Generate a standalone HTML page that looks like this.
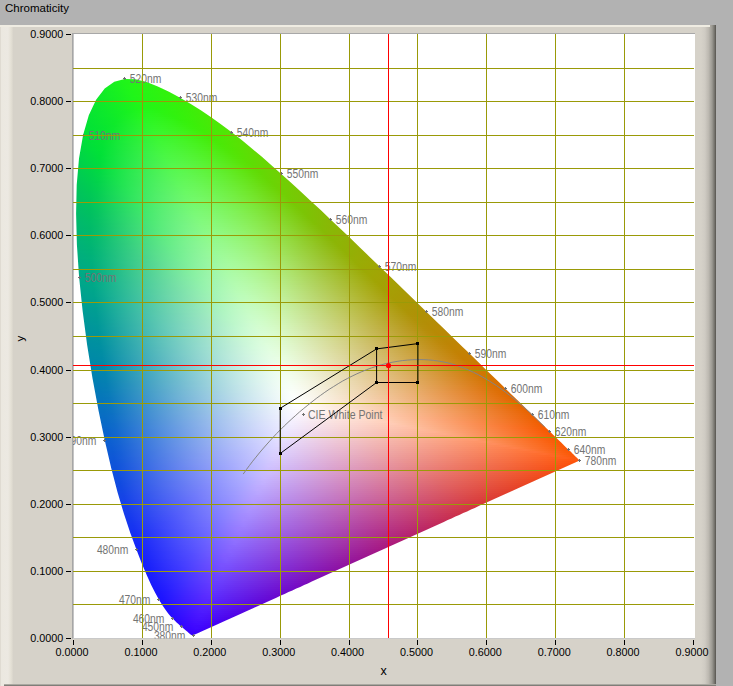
<!DOCTYPE html><html><head><meta charset="utf-8"><title>Chromaticity</title><style>
html,body{margin:0;padding:0}
body{width:733px;height:686px;overflow:hidden;position:relative;background:#b2b2b2;font-family:"Liberation Sans",Arial,sans-serif;}
#title{position:absolute;left:5px;top:1px;font-size:11.5px;line-height:14px;color:#000;white-space:nowrap}
#panel{position:absolute;left:0;top:25px;width:716px;height:661px;background:#d6d2c9}
#pl{position:absolute;left:0;top:0;width:14px;height:661px;background:linear-gradient(90deg,#d9d5cb 0,#ebe8e0 1.5px,#ece9e2 8px,#e4e0d5 11px,#d6d2c9 13.5px)}
#pt{position:absolute;left:0;top:0;width:710px;height:2px;background:#efece2}
#pr{position:absolute;left:701px;top:0;width:15px;height:661px;background:linear-gradient(90deg,#d6d2c9 0,#cfcbc3 4px,#bdb9b1 7.5px,#9c9a93 11px,#74726c 13.5px,#55534e 15px)}
#pb{position:absolute;left:4px;top:659px;width:712px;height:2px;background:linear-gradient(180deg,#aaa8a1 0,#aaa8a1 50%,#807e78 50%,#807e78 100%)}
#plot{position:absolute;left:72px;top:33px;width:623px;height:606px;background:#fff;box-sizing:border-box;border-left:1px solid #a6a6a6;border-top:1px solid #a8a8a8;border-bottom:1px solid #c9c9c9;box-shadow:inset 1px 0 0 #c4c4c4}
#fill{position:absolute;left:0;top:0;width:733px;height:686px;}
#fill i{position:absolute;display:block;height:2px}
#ov{position:absolute;left:0;top:0}
.tk{font-size:10.8px;fill:#000}
.wl{font-size:12.5px;fill:#747474}

</style></head><body>
<div id="title">Chromaticity</div>
<div id="panel"><div id="pl"></div><div id="pr"></div><div id="pt"></div><div id="pb"></div></div>
<div id="plot"></div>
<div id="fill" style="clip-path:polygon(193.4px 635.1px,193.4px 635.1px,193.4px 635.1px,193.3px 635.2px,193.3px 635.2px,193.2px 635.2px,193.2px 635.2px,193.1px 635.2px,193.1px 635.2px,193px 635.3px,192.9px 635.3px,192.8px 635.3px,192.7px 635.3px,192.6px 635.3px,192.5px 635.3px,192.4px 635.3px,192.3px 635.3px,192.1px 635.3px,192px 635.3px,191.8px 635.2px,191.6px 635.1px,191.3px 634.9px,191px 634.7px,190.6px 634.5px,190.3px 634.2px,189.9px 633.9px,189.4px 633.5px,188.8px 633px,188.2px 632.4px,187.5px 631.8px,186.8px 631.2px,185.9px 630.5px,185px 629.7px,183.9px 628.8px,182.7px 627.7px,181.4px 626.6px,179.9px 625.4px,178.4px 624px,176.6px 622.4px,174.7px 620.6px,172.7px 618.6px,170.5px 616.2px,168.2px 613.4px,165.5px 609.8px,162.4px 605.3px,159px 599.7px,155.3px 593px,151.2px 584.9px,146.7px 575.1px,141.8px 563.4px,136.4px 549.4px,130.4px 533.2px,124.1px 514.3px,117.6px 492.6px,111.2px 468px,104.8px 440.5px,98.5px 410.4px,92.5px 378.2px,87.1px 344.7px,82.6px 310.8px,79.1px 277.2px,76.9px 244.7px,76.1px 213.8px,76.7px 184.9px,79px 158.4px,83.1px 135px,88.8px 115.3px,96.1px 99.7px,104.7px 88.6px,114.3px 81.8px,124.7px 78.9px,135.5px 79.3px,146.6px 82px,157.8px 86.4px,169px 91.7px,180.1px 97.7px,190.8px 104px,201.2px 110.6px,211.5px 117.5px,221.6px 124.7px,231.7px 132.3px,241.7px 140.1px,251.6px 148.3px,261.6px 156.6px,271.4px 165.2px,281.3px 173.9px,291.1px 182.8px,300.9px 191.8px,310.8px 200.9px,320.7px 210.1px,330.5px 219.4px,340.4px 228.7px,350.2px 238.1px,359.9px 247.5px,369.7px 256.9px,379.4px 266.2px,389.1px 275.6px,398.6px 284.8px,408.1px 294px,417.4px 303px,426.6px 311.9px,435.6px 320.7px,444.5px 329.3px,453.1px 337.7px,461.6px 345.9px,469.8px 353.8px,477.7px 361.5px,485.2px 368.9px,492.3px 375.8px,499.1px 382.3px,505.4px 388.5px,511.5px 394.4px,517.3px 400px,522.7px 405.2px,527.6px 410px,532.2px 414.4px,536.4px 418.4px,540.2px 422.2px,543.7px 425.6px,546.9px 428.8px,549.9px 431.6px,552.6px 434.2px,555px 436.5px,557.2px 438.7px,559.3px 440.7px,561.2px 442.5px,562.9px 444.3px,564.6px 445.9px,566.1px 447.4px,567.5px 448.7px,568.8px 450px,570px 451.1px,571.1px 452.1px,572px 453.1px,572.9px 453.9px,573.6px 454.6px,574.3px 455.3px,574.9px 455.9px,575.5px 456.4px,576px 456.9px,576.4px 457.3px,576.7px 457.6px,577px 457.9px,577.3px 458.2px,577.5px 458.4px,577.8px 458.6px,578px 458.8px,578.2px 459px,578.4px 459.2px,578.5px 459.4px,578.7px 459.6px,578.9px 459.8px,579.1px 459.9px,579.2px 460.1px,579.3px 460.2px,579.4px 460.3px,579.5px 460.3px,579.5px 460.4px,579.6px 460.4px,579.6px 460.4px,579.6px 460.5px,575.8px 462.2px,571.9px 464px,568px 465.7px,564.1px 467.5px,560.2px 469.2px,556.3px 471px,552.5px 472.7px,548.6px 474.5px,544.7px 476.3px,540.8px 478px,536.9px 479.8px,533.1px 481.5px,529.2px 483.3px,525.3px 485px,521.4px 486.8px,517.5px 488.5px,513.7px 490.3px,509.8px 492.1px,505.9px 493.8px,502px 495.6px,498.1px 497.3px,494.2px 499.1px,490.4px 500.8px,486.5px 502.6px,482.6px 504.3px,478.7px 506.1px,474.8px 507.9px,471px 509.6px,467.1px 511.4px,463.2px 513.1px,459.3px 514.9px,455.4px 516.6px,451.5px 518.4px,447.7px 520.1px,443.8px 521.9px,439.9px 523.7px,436px 525.4px,432.1px 527.2px,428.3px 528.9px,424.4px 530.7px,420.5px 532.4px,416.6px 534.2px,412.7px 536px,408.9px 537.7px,405px 539.5px,401.1px 541.2px,397.2px 543px,393.3px 544.7px,389.4px 546.5px,385.6px 548.2px,381.7px 550px,377.8px 551.8px,373.9px 553.5px,370px 555.3px,366.2px 557px,362.3px 558.8px,358.4px 560.5px,354.5px 562.3px,350.6px 564px,346.8px 565.8px,342.9px 567.6px,339px 569.3px,335.1px 571.1px,331.2px 572.8px,327.3px 574.6px,323.5px 576.3px,319.6px 578.1px,315.7px 579.8px,311.8px 581.6px,307.9px 583.4px,304.1px 585.1px,300.2px 586.9px,296.3px 588.6px,292.4px 590.4px,288.5px 592.1px,284.6px 593.9px,280.8px 595.6px,276.9px 597.4px,273px 599.2px,269.1px 600.9px,265.2px 602.7px,261.4px 604.4px,257.5px 606.2px,253.6px 607.9px,249.7px 609.7px,245.8px 611.4px,242px 613.2px,238.1px 615px,234.2px 616.7px,230.3px 618.5px,226.4px 620.2px,222.5px 622px,218.7px 623.7px,214.8px 625.5px,210.9px 627.2px,207px 629px,203.1px 630.8px,199.3px 632.5px,195.4px 634.3px)">
<i style="top:77px;left:119px;width:20px;background:linear-gradient(90deg,#1df41b,#22f517,#27f414)"></i>
<i style="top:79px;left:113px;width:34px;background:linear-gradient(90deg,#1af21e,#1ef51a,#22f517,#26f414,#2af312)"></i>
<i style="top:81px;left:109px;width:44px;background:linear-gradient(90deg,#17f021,#1af21e,#1ef51a,#22f517,#25f515,#29f413,#2df310)"></i>
<i style="top:83px;left:106px;width:52px;background:linear-gradient(90deg,#15ee23,#19f11f,#1ef41a,#22f517,#26f414,#2bf312,#2ff20f)"></i>
<i style="top:85px;left:104px;width:59px;background:linear-gradient(90deg,#14ed24,#18f020,#1cf31c,#20f618,#24f516,#28f413,#2df311,#31f20e)"></i>
<i style="top:87px;left:101px;width:66px;background:linear-gradient(90deg,#12ec26,#15ef23,#19f11f,#1ef51a,#22f617,#26f515,#2af312,#2ef210,#33f10d)"></i>
<i style="top:89px;left:100px;width:71px;background:linear-gradient(90deg,#11ec27,#14ee24,#18f120,#1cf31c,#20f618,#24f516,#28f413,#2cf311,#30f20e,#35f10c)"></i>
<i style="top:91px;left:98px;width:77px;background:linear-gradient(90deg,#0feb29,#13ed25,#16ef22,#1af21e,#1ef51a,#22f517,#26f515,#2af412,#2ef310,#32f10d,#36f00b)"></i>
<i style="top:93px;left:96px;width:83px;background:linear-gradient(90deg,#0eea2a,#12ec26,#15ef23,#19f11f,#1ef51a,#22f517,#26f414,#2bf312,#2ff20f,#34f10d,#38f00a)"></i>
<i style="top:95px;left:95px;width:87px;background:linear-gradient(90deg,#0de92b,#10eb28,#14ee24,#18f020,#1cf31c,#20f618,#24f516,#28f413,#2cf311,#31f20e,#35f10c,#3aef0a)"></i>
<i style="top:97px;left:94px;width:92px;background:linear-gradient(90deg,#0ce82c,#0feb29,#13ed25,#16ef22,#1af21e,#1ef51a,#22f517,#26f414,#2af312,#2ef210,#33f10d,#37f00b,#3cee09)"></i>
<i style="top:99px;left:93px;width:96px;background:linear-gradient(90deg,#0ce82c,#0fea29,#12ec26,#16ef22,#1af21e,#1ef51a,#22f517,#26f414,#2bf312,#2ff20f,#34f10d,#38f00a,#3dee09)"></i>
<i style="top:101px;left:92px;width:101px;background:linear-gradient(90deg,#0be72d,#0ee92a,#11ec27,#14ee24,#18f120,#1cf41c,#21f618,#25f515,#29f413,#2df310,#31f20e,#36f10b,#3aef0a,#40ed08)"></i>
<i style="top:103px;left:91px;width:105px;background:linear-gradient(90deg,#0ae72e,#0de92b,#10eb28,#14ee24,#18f020,#1cf31c,#21f618,#25f515,#29f413,#2df310,#32f20e,#36f00b,#3cee09,#41ec08)"></i>
<i style="top:105px;left:90px;width:109px;background:linear-gradient(90deg,#09e62f,#0ce82c,#0fea29,#12ed26,#16ef22,#1af21e,#1ff519,#23f516,#27f414,#2bf312,#2ff20f,#34f10d,#38f00a,#3dee09,#43eb08)"></i>
<i style="top:107px;left:89px;width:113px;background:linear-gradient(90deg,#08e630,#0be82d,#0eea2a,#12ec26,#15ef23,#1af21e,#1ef51a,#23f516,#27f414,#2bf311,#30f20f,#34f10c,#39ef0a,#3fed09,#44eb07)"></i>
<i style="top:109px;left:88px;width:117px;background:linear-gradient(90deg,#07e531,#0ae72e,#0de92b,#10eb28,#14ee24,#18f020,#1df31d,#22f619,#26f517,#29f413,#2df310,#32f20e,#36f00b,#3bef09,#41ec08,#46ea07)"></i>
<i style="top:111px;left:87px;width:121px;background:linear-gradient(90deg,#07e431,#09e62f,#0ce82c,#10eb28,#13ed25,#17f021,#1ef31f,#24f61b,#28f519,#2af414,#2ef310,#32f10d,#37f00b,#3cee09,#42ec08,#48e907)"></i>
<i style="top:113px;left:86px;width:125px;background:linear-gradient(90deg,#06e432,#08e630,#0be82d,#0eea2a,#12ec26,#16ef23,#1df222,#23f51f,#28f61c,#2bf519,#2df313,#30f20f,#34f10c,#39f00a,#3eed09,#44eb07,#49e906)"></i>
<i style="top:115px;left:86px;width:128px;background:linear-gradient(90deg,#05e433,#08e530,#0be82d,#0eea2a,#12ec26,#18ef25,#1ff223,#25f520,#2af61e,#2df41a,#2ef314,#30f20f,#35f10c,#3aef0a,#40ed08,#45ea07,#4be806)"></i>
<i style="top:117px;left:85px;width:132px;background:linear-gradient(90deg,#05e333,#07e531,#0ae72e,#0de92b,#11ec27,#19ef26,#20f225,#27f522,#2bf620,#2ff51c,#30f316,#31f20f,#36f10b,#3bef09,#41ec08,#47ea07,#4ce706)"></i>
<i style="top:119px;left:84px;width:136px;background:linear-gradient(90deg,#04e334,#06e432,#09e62f,#0ce82c,#0feb29,#17ed29,#1ff128,#26f426,#2bf623,#2ff520,#31f41b,#33f315,#33f10d,#38f00a,#3dee09,#43eb08,#49e906,#4ee705)"></i>
<i style="top:121px;left:84px;width:138px;background:linear-gradient(90deg,#03e235,#06e432,#09e62f,#0ce82c,#10ea29,#19ed2a,#20f12a,#27f428,#2df624,#31f522,#33f41d,#34f317,#35f10f,#38f00a,#3eed09,#44eb08,#49e906,#4fe605)"></i>
<i style="top:123px;left:83px;width:142px;background:linear-gradient(90deg,#03e235,#05e333,#08e530,#0be72d,#0eea2a,#17ec2c,#1fef2c,#26f22b,#2cf628,#31f625,#34f521,#35f41c,#36f215,#37f10e,#3aef0a,#40ed08,#46ea07,#4be806,#51e505)"></i>
<i style="top:125px;left:83px;width:145px;background:linear-gradient(90deg,#02e136,#05e333,#07e531,#0ae72e,#0fe92c,#18ec2e,#21ef2e,#28f22d,#2ef62a,#33f627,#36f523,#37f41d,#38f216,#39f10e,#3bef09,#41ec08,#47ea07,#4de705,#53e504)"></i>
<i style="top:127px;left:82px;width:149px;background:linear-gradient(90deg,#01e137,#04e334,#06e432,#09e62f,#0ee92d,#17eb2f,#1fee30,#27f12f,#2df42d,#33f62a,#36f627,#38f422,#3af31d,#3af215,#3af00d,#3eee09,#43eb08,#49e906,#4fe605,#54e404)"></i>
<i style="top:129px;left:81px;width:152px;background:linear-gradient(90deg,#01e037,#03e235,#06e432,#08e630,#0ee82e,#17eb30,#20ee31,#28f131,#2ef42f,#34f72c,#38f629,#3af425,#3bf31e,#3cf217,#3cf00f,#3eed09,#44eb07,#4ae806,#50e605,#55e304)"></i>
<i style="top:131px;left:81px;width:155px;background:linear-gradient(90deg,#00e038,#03e235,#05e433,#08e630,#0fe830,#19eb32,#21ee33,#29f133,#30f431,#36f72e,#3af62b,#3cf426,#3df31f,#3ef218,#3ef00f,#40ed08,#46ea07,#4ce806,#51e505,#57e204)"></i>
<i style="top:133px;left:80px;width:158px;background:linear-gradient(90deg,#00df3a,#02e136,#04e334,#07e531,#0de731,#16ea33,#1fed35,#28f035,#2ff334,#35f631,#39f62f,#3cf52b,#3ef425,#3ff31f,#3ff117,#40ef0f,#41ec08,#47ea07,#4de705,#53e504,#58e104)"></i>
<i style="top:135px;left:80px;width:161px;background:linear-gradient(90deg,#00de3b,#01e137,#04e334,#07e431,#0ee732,#18ea35,#21ed36,#29f037,#31f336,#37f633,#3bf630,#3ef52c,#40f427,#41f320,#41f117,#42ef10,#43eb08,#49e906,#4ee605,#54e404,#5ae004)"></i>
<i style="top:137px;left:80px;width:163px;background:linear-gradient(90deg,#00dd3c,#01e137,#03e235,#06e432,#0fe733,#19ea36,#22ed38,#2bf039,#32f338,#39f635,#3df632,#40f52e,#42f428,#42f321,#43f119,#43ee11,#44eb09,#49e906,#4fe605,#55e304,#5bdf04)"></i>
<i style="top:139px;left:79px;width:167px;background:linear-gradient(90deg,#00db3e,#00e038,#02e236,#05e333,#0de634,#17e937,#20ec39,#29ee3a,#31f13a,#38f438,#3df735,#40f632,#43f52e,#44f427,#44f220,#45f018,#45ed10,#46ea07,#4ce806,#52e505,#57e204,#5cde04)"></i>
<i style="top:141px;left:79px;width:169px;background:linear-gradient(90deg,#00db3f,#00df39,#02e136,#05e333,#0ee635,#18e939,#22ec3b,#2aee3c,#32f13c,#39f43a,#3ff737,#42f634,#44f52f,#46f429,#46f221,#46f019,#47ed11,#48ea08,#4de706,#52e504,#58e104,#5edd04)"></i>
<i style="top:143px;left:78px;width:173px;background:linear-gradient(90deg,#00d941,#00dd3b,#01e137,#04e234,#0ce536,#16e839,#1fea3c,#29ed3d,#31f03e,#38f33d,#3ef63a,#42f737,#45f634,#47f42e,#48f327,#48f220,#48ef18,#49ec10,#49e907,#4fe605,#55e404,#5ae004,#5fdc04)"></i>
<i style="top:145px;left:78px;width:175px;background:linear-gradient(90deg,#00d842,#00dd3c,#01e037,#03e235,#0ce537,#17e83b,#21ea3d,#2aed3f,#32f040,#39f33f,#40f63c,#44f739,#47f636,#48f430,#49f329,#49f221,#4aef19,#4bec11,#4be908,#50e605,#56e304,#5bdf04,#60db04)"></i>
<i style="top:147px;left:78px;width:178px;background:linear-gradient(90deg,#00d743,#00dc3d,#00e038,#03e235,#0de539,#18e83c,#22ea3f,#2ced41,#34f041,#3bf341,#42f63e,#46f73b,#49f637,#4af431,#4bf32a,#4bf122,#4cef1a,#4ceb11,#4de808,#51e505,#57e204,#5dde04,#62da04)"></i>
<i style="top:149px;left:78px;width:180px;background:linear-gradient(90deg,#00d744,#00db3e,#00e039,#03e236,#0ee53a,#19e73e,#23ea40,#2ded42,#35f043,#3df342,#43f640,#48f73d,#4af639,#4cf433,#4df32c,#4df123,#4eee1b,#4eeb13,#4ee809,#52e504,#58e104,#5edd04,#63d904)"></i>
<i style="top:151px;left:77px;width:183px;background:linear-gradient(90deg,#00d546,#00d940,#00de3b,#01e137,#0ce43a,#16e63e,#21e941,#2aec43,#33ef45,#3bf245,#42f543,#47f740,#4bf63d,#4df539,#4ef432,#4ef32a,#4ff123,#50ee1b,#50ea12,#50e709,#54e404,#5ae004,#5fdc04,#64d804)"></i>
<i style="top:153px;left:77px;width:186px;background:linear-gradient(90deg,#00d447,#00d842,#00dd3c,#01e137,#0de43b,#18e63f,#22e943,#2cec45,#35ef47,#3df247,#44f545,#49f742,#4df63f,#4ff53a,#50f433,#50f22c,#51f024,#51ed1b,#52ea12,#52e609,#55e304,#5bdf04,#61db04,#66d704)"></i>
<i style="top:155px;left:77px;width:188px;background:linear-gradient(90deg,#00d348,#00d743,#00dc3d,#00e038,#0be33c,#16e640,#21e843,#2aeb46,#33ee48,#3bf149,#42f448,#49f745,#4df742,#4ff63f,#51f539,#52f332,#52f22a,#53ef23,#53ec1b,#53e912,#53e608,#57e204,#5dde04,#62da04,#67d604)"></i>
<i style="top:157px;left:76px;width:191px;background:linear-gradient(90deg,#00d24a,#00d645,#00da3f,#00df39,#0be33d,#16e541,#20e845,#2aeb47,#34ee49,#3cf04a,#44f34a,#4af647,#4ef744,#51f641,#53f53b,#53f434,#54f22c,#54ef24,#55ec1c,#55e913,#55e509,#58e104,#5edd04,#63d904,#68d604)"></i>
<i style="top:159px;left:76px;width:194px;background:linear-gradient(90deg,#00d14b,#00d546,#00da40,#01de3b,#0ce23e,#17e542,#22e846,#2ceb49,#35ee4b,#3ef04c,#45f34b,#4cf749,#50f746,#53f642,#54f53c,#55f335,#55f22d,#56ef25,#56ec1c,#57e813,#57e509,#5ae004,#5fdc04,#65d804,#6ad404)"></i>
<i style="top:161px;left:76px;width:196px;background:linear-gradient(90deg,#00d04c,#00d447,#00d941,#01de3c,#0ce23f,#18e544,#23e847,#2deb4b,#37ee4d,#3ff14e,#47f34d,#4df74b,#52f748,#55f644,#56f53e,#57f437,#57f22e,#58ef26,#58eb1e,#58e814,#58e40a,#5bdf04,#60db04,#66d704,#6bd404)"></i>
<i style="top:163px;left:76px;width:198px;background:linear-gradient(90deg,#00cf4d,#00d348,#00d843,#01dc3e,#0be240,#16e444,#21e748,#2cea4b,#35ed4e,#3eef4f,#46f24f,#4cf54e,#52f84b,#55f748,#57f643,#58f43d,#59f335,#59f12d,#5aee25,#5aea1d,#5ae713,#5ae309,#5cde04,#62da04,#67d604,#6cd304)"></i>
<i style="top:165px;left:76px;width:201px;background:linear-gradient(90deg,#00ce4e,#00d249,#00d744,#02dc3f,#0ce141,#17e445,#22e74a,#2dea4d,#37ed50,#3fef51,#48f251,#4ef550,#54f84c,#57f74a,#59f645,#5af43e,#5af336,#5bf02e,#5bed26,#5cea1d,#5ce713,#5be209,#5edd04,#63d904,#69d504,#6ed204)"></i>
<i style="top:167px;left:75px;width:204px;background:linear-gradient(90deg,#00cd50,#00d14b,#00d546,#01d941,#0adf42,#15e345,#20e64a,#2ae94d,#34ec50,#3dee52,#45f153,#4df452,#53f750,#57f84d,#5af64a,#5bf544,#5cf43d,#5cf235,#5def2d,#5dec25,#5de91c,#5de612,#5de109,#5fdc04,#65d804,#6ad404,#6fd104)"></i>
<i style="top:169px;left:75px;width:206px;background:linear-gradient(90deg,#00cc51,#00d04c,#00d447,#01d942,#0bdf44,#15e347,#21e64b,#2be94f,#35ec52,#3eee54,#47f155,#4ef454,#54f752,#59f84f,#5bf74b,#5df546,#5df43e,#5ef237,#5eef2f,#5fec26,#5fe91d,#5fe513,#5ee00a,#60db04,#66d704,#6bd404,#70d004)"></i>
<i style="top:171px;left:75px;width:208px;background:linear-gradient(90deg,#00cb52,#00cf4d,#00d348,#02d844,#0cde46,#16e348,#21e64c,#2ce950,#36eb53,#40ee55,#48f156,#50f456,#56f754,#5af851,#5df74d,#5ef547,#5ff440,#5ff238,#60ef30,#60ec28,#61e91e,#60e514,#60e00b,#61da04,#67d604,#6cd304,#71cf04)"></i>
<i style="top:173px;left:75px;width:211px;background:linear-gradient(90deg,#00ca53,#00ce4e,#00d249,#03d746,#0ddd47,#17e349,#23e64e,#2ee952,#38ec55,#41ee57,#4af158,#52f458,#58f755,#5cf853,#5ff74e,#60f548,#61f441,#61f239,#62ef31,#62ec28,#62e81e,#62e415,#62de0b,#63d904,#69d504,#6ed104,#72ce04)"></i>
<i style="top:175px;left:75px;width:213px;background:linear-gradient(90deg,#00ca54,#00cd50,#00d14a,#03d647,#0ddc49,#16e24a,#21e54e,#2ce852,#36eb55,#40ed58,#48f05a,#50f35a,#57f658,#5cf855,#5ff753,#61f64e,#62f547,#62f33f,#63f138,#64ee30,#64eb27,#64e71d,#63e214,#63dd0a,#65d804,#6ad404,#6fd104,#73cd04)"></i>
<i style="top:177px;left:75px;width:215px;background:linear-gradient(90deg,#00c955,#00cc51,#00d04c,#03d549,#0ddb4a,#17e14c,#22e54f,#2de853,#37eb57,#41ed5a,#4af05b,#52f35c,#58f65a,#5ef857,#61f754,#63f64f,#64f549,#64f341,#65f139,#65ee31,#65ea28,#65e71e,#65e215,#65dc0b,#66d704,#6bd304,#70d004,#74cc04)"></i>
<i style="top:179px;left:74px;width:218px;background:linear-gradient(90deg,#00c757,#00cb52,#00cf4d,#03d44a,#0dda4c,#17e04d,#21e550,#2de754,#37ea58,#41ed5b,#4af05d,#52f35d,#5af65c,#5ff859,#63f856,#65f651,#65f54b,#66f443,#66f13b,#67ee33,#67ea29,#67e720,#67e216,#66dc0c,#67d704,#6cd304,#71cf04,#75cb04)"></i>
<i style="top:181px;left:74px;width:220px;background:linear-gradient(90deg,#00c658,#00ca54,#00ce4f,#02d24b,#0cd84d,#16de4f,#20e450,#2be755,#35e958,#3fec5c,#48ef5e,#51f15f,#58f45f,#5ef75d,#63f85a,#65f756,#67f650,#67f449,#68f342,#68f03a,#69ed31,#69e928,#68e51f,#68e015,#67db0b,#68d504,#6ed204,#72ce04,#76ca05)"></i>
<i style="top:183px;left:74px;width:223px;background:linear-gradient(90deg,#00c659,#00c954,#00cd50,#03d24d,#0dd84f,#17de50,#21e452,#2ce756,#37e95a,#41ec5d,#4aef60,#53f261,#5af460,#60f85e,#65f85b,#67f758,#68f652,#69f44a,#69f243,#6aef3b,#6aec32,#6ae928,#6ae41f,#6adf15,#69d90b,#6ad404,#6fd004,#74cc04,#78c805)"></i>
<i style="top:185px;left:74px;width:225px;background:linear-gradient(90deg,#00c55a,#00c856,#00cc51,#04d14e,#0ed750,#18dd52,#22e353,#2de757,#38e95b,#42ec5f,#4bef61,#54f262,#5cf462,#62f860,#66f85d,#69f759,#6af653,#6bf44c,#6bf244,#6cef3c,#6cec33,#6ce92a,#6ce420,#6bde16,#6ad90c,#6bd304,#70d004,#75cb04,#79c705)"></i>
<i style="top:187px;left:74px;width:227px;background:linear-gradient(90deg,#00c45b,#00c757,#00cb52,#04d050,#0fd652,#19dc54,#23e355,#2ee759,#39e95d,#43ec60,#4def63,#55f264,#5df464,#64f762,#68f85f,#6bf75b,#6cf655,#6cf44d,#6df246,#6def3e,#6eec35,#6de82b,#6de321,#6dde17,#6cd80d,#6cd304,#71cf04,#76ca04,#7ac605)"></i>
<i style="top:189px;left:74px;width:229px;background:linear-gradient(90deg,#00c35c,#00c658,#00ca53,#04cf51,#0ed553,#18db55,#22e157,#2ce659,#37e95d,#41eb61,#4bee63,#54f165,#5cf366,#62f665,#68f962,#6bf85f,#6df75a,#6ef554,#6ef44c,#6ff144,#6fee3c,#6feb33,#6fe729,#6fe220,#6edc16,#6dd70c,#6ed104,#73cd04,#77c905,#7bc505)"></i>
<i style="top:191px;left:74px;width:231px;background:linear-gradient(90deg,#00c25d,#00c559,#00c954,#04ce53,#0fd455,#19da57,#23e058,#2ce65a,#38e85e,#42eb62,#4cee65,#55f067,#5df368,#64f667,#6af964,#6df861,#6ff75c,#6ff555,#70f44d,#70f146,#71ee3e,#71eb34,#71e72b,#70e121,#70dc17,#6fd60d,#6fd104,#74cc04,#78c805,#7cc405)"></i>
<i style="top:193px;left:74px;width:233px;background:linear-gradient(90deg,#00c15e,#00c55a,#00c856,#05cd54,#10d456,#1ada58,#24e05a,#2de65b,#39e860,#43eb63,#4dee67,#56f069,#5ff369,#66f668,#6bf965,#6ef863,#70f75d,#71f557,#71f44f,#72f147,#72ee3f,#72ea35,#72e62c,#72e122,#71db18,#70d60e,#70d004,#75cb04,#79c705,#7cc405)"></i>
<i style="top:195px;left:74px;width:236px;background:linear-gradient(90deg,#00c05f,#00c45b,#00c757,#05cc55,#0fd257,#19d85a,#23de5b,#2de45d,#37e860,#42ea64,#4ced67,#55f06a,#5df26b,#65f56b,#6bf869,#6ff866,#71f762,#72f65c,#73f555,#73f24d,#74f045,#74ec3d,#74e933,#74e42a,#73df20,#72d916,#72d40c,#72ce04,#76ca05,#7ac605,#7ec205)"></i>
<i style="top:197px;left:74px;width:238px;background:linear-gradient(90deg,#00c061,#00c35c,#00c658,#05cb57,#10d159,#1ad75b,#24dd5d,#2ee35e,#38e861,#42ea65,#4ded69,#56f06b,#5ff26d,#66f56c,#6cf86a,#70f968,#73f864,#74f65e,#74f556,#75f24f,#75ef47,#76ec3e,#75e934,#75e42b,#74de21,#74d917,#73d30d,#73cd04,#77c905,#7bc505,#7fc105)"></i>
<i style="top:199px;left:74px;width:240px;background:linear-gradient(90deg,#00bf62,#00c25d,#00c559,#06cb58,#10d15a,#1bd75d,#25dd5e,#2fe360,#39e762,#44ea67,#4eed6a,#57f06d,#60f26e,#68f56e,#6ef86c,#72f96a,#75f865,#76f65f,#76f558,#77f250,#77ef48,#77ec3f,#77e835,#77e32c,#76de22,#75d818,#74d20d,#74cc04,#78c805,#7cc405,#80c005)"></i>
<i style="top:201px;left:74px;width:242px;background:linear-gradient(90deg,#00be63,#00c15f,#00c55a,#06ca59,#11d05c,#1cd65e,#26dc60,#30e262,#39e764,#45ea68,#4fed6c,#59f06e,#61f270,#69f570,#6ff86e,#74f96b,#76f867,#77f661,#78f559,#78f252,#79ef49,#79ec40,#79e837,#78e32d,#77dd23,#77d719,#76d20e,#75cb04,#79c705,#7dc305,#81bf05)"></i>
<i style="top:203px;left:74px;width:244px;background:linear-gradient(90deg,#00be64,#00c060,#00c45b,#07c95b,#12cf5d,#1cd660,#27dc62,#31e263,#3ae765,#46ea69,#50ed6d,#5af070,#63f272,#6bf572,#71f870,#75f96d,#78f869,#79f663,#79f55b,#7af253,#7aef4b,#7aec41,#7ae838,#7ae22e,#79dd24,#78d719,#77d10f,#76ca04,#7ac605,#7ec205,#82be05)"></i>
<i style="top:205px;left:74px;width:246px;background:linear-gradient(90deg,#00bd65,#00bf61,#00c35d,#06c85c,#11ce5e,#1bd461,#26da63,#30e065,#39e666,#43e969,#4eec6d,#58ef70,#61f173,#69f474,#70f773,#75f970,#78f86d,#7af768,#7bf661,#7bf459,#7cf152,#7cee49,#7ceb40,#7ce637,#7be12d,#7adb23,#7ad518,#78cf0e,#77c905,#7bc505,#7fc105,#83bd06)"></i>
<i style="top:207px;left:74px;width:249px;background:linear-gradient(90deg,#00bd66,#00bf62,#00c25e,#07c75d,#12cd60,#1cd362,#27d964,#31df66,#3ae568,#45e96b,#4fec6f,#59ef72,#63f174,#6bf475,#72f774,#77f971,#7af86e,#7cf769,#7cf662,#7df45a,#7df152,#7dee4a,#7dea40,#7de537,#7ce02d,#7cda23,#7bd418,#79ce0d,#79c705,#7dc305,#81bf05,#84bc06)"></i>
<i style="top:209px;left:74px;width:251px;background:linear-gradient(90deg,#00bc67,#00be63,#00c15f,#07c65f,#12cd61,#1dd364,#28d966,#32df68,#3be569,#46e96c,#51ec70,#5bef74,#64f176,#6cf477,#73f776,#79f973,#7cf870,#7df76b,#7ef664,#7ef45c,#7ff154,#7fee4b,#7fea41,#7fe538,#7edf2e,#7dd924,#7cd419,#7bcd0e,#7ac605,#7ec205,#82be05,#85bb06)"></i>
<i style="top:211px;left:74px;width:253px;background:linear-gradient(90deg,#00bb68,#00be64,#00c060,#06c560,#11cb62,#1cd165,#26d767,#30dd69,#3ae36b,#43e86c,#4eeb70,#58ee74,#62f077,#6af378,#72f678,#78f976,#7cf974,#7ef870,#7ff769,#80f562,#80f35b,#81f052,#81ec49,#80e840,#80e337,#7fdd2d,#7ed823,#7dd218,#7ccb0d,#7bc505,#7fc105,#83bd06,#86ba06)"></i>
<i style="top:213px;left:74px;width:255px;background:linear-gradient(90deg,#00bb69,#00bd65,#00bf61,#07c461,#12ca64,#1dd066,#27d769,#32dc6b,#3be26c,#44e86e,#4feb72,#5aee75,#63f078,#6cf37a,#73f67a,#7af978,#7ef976,#80f871,#81f76b,#81f563,#82f35c,#82ef54,#82ec4b,#82e841,#81e238,#81dd2e,#80d723,#7fd119,#7dca0e,#7cc405,#80c005,#84bc06,#87b906)"></i>
<i style="top:215px;left:74px;width:257px;background:linear-gradient(90deg,#00ba6a,#00bc66,#00bf62,#07c362,#13ca65,#1dd068,#28d66a,#33dc6c,#3ce26e,#46e86f,#50eb73,#5bee77,#64f07a,#6df37c,#75f67c,#7bf97a,#7ff977,#82f873,#82f76d,#83f565,#83f25d,#84ef55,#84ec4c,#83e743,#83e239,#82dc2f,#81d724,#80d01a,#7eca0f,#7dc305,#81bf05,#85bb06,#88b806)"></i>
<i style="top:217px;left:74px;width:259px;background:linear-gradient(90deg,#00b96b,#00bb68,#00be63,#08c364,#13c967,#1ecf69,#29d56c,#33db6e,#3de170,#47e771,#51eb74,#5cee78,#66f07b,#6ff37d,#76f67e,#7df97c,#81f979,#83f875,#84f76e,#84f566,#85f25f,#85ef56,#85ec4d,#85e744,#84e23a,#84dc30,#83d625,#81d01a,#7fc910,#7ec205,#82be05,#85bb06,#89b706)"></i>
<i style="top:219px;left:74px;width:261px;background:linear-gradient(90deg,#00b96c,#00bb69,#00bd65,#07c165,#12c768,#1dce6a,#28d46d,#32d96f,#3cdf71,#45e572,#4fea74,#5aed78,#63ef7c,#6df27e,#75f47f,#7cf77f,#81fa7c,#84f979,#85f874,#86f66d,#86f465,#87f15d,#87ee55,#87ea4b,#86e542,#86e038,#85da2e,#84d424,#82ce1a,#80c70f,#7fc105,#83bd06,#87b906,#8ab706)"></i>
<i style="top:221px;left:74px;width:263px;background:linear-gradient(90deg,#00b86d,#00ba6a,#00bd66,#07c166,#13c769,#1ecd6c,#28d36e,#33d970,#3ddf72,#46e574,#50ea76,#5bed7a,#65ef7d,#6ef280,#76f481,#7df780,#82fa7e,#86f97b,#87f875,#87f66e,#88f467,#88f15f,#88ee56,#88ea4d,#88e544,#87df3a,#86da2f,#85d425,#83cd1a,#82c610,#80c005,#84bc06,#88b806,#8bb606)"></i>
<i style="top:223px;left:74px;width:265px;background:linear-gradient(90deg,#00b76e,#00ba6b,#00bc67,#08c067,#13c66a,#1ecc6d,#29d26f,#34d872,#3ede74,#48e476,#51ea77,#5ced7b,#66ef7f,#6ff281,#77f483,#7ff782,#84fa7f,#87f97c,#89f877,#89f670,#89f468,#8af160,#8aee57,#8aea4e,#89e445,#89df3b,#88d930,#86d326,#85cc1b,#83c610,#81bf05,#85bb06,#89b806,#8cb506)"></i>
<i style="top:225px;left:74px;width:268px;background:linear-gradient(90deg,#00b76f,#00b96c,#00bb68,#07bf68,#12c56b,#1ecb6e,#28d170,#33d773,#3ddd75,#47e277,#50e878,#5aec7b,#64ee7f,#6df182,#76f484,#7ef684,#84f982,#88fa80,#8af87b,#8af775,#8bf56e,#8bf366,#8cf05e,#8bec55,#8be74c,#8be242,#8add38,#89d72e,#87d024,#85ca19,#84c30e,#83bd06,#87b906,#8ab706,#8db406)"></i>
<i style="top:227px;left:74px;width:270px;background:linear-gradient(90deg,#00b670,#00b86d,#00ba69,#07bf6a,#13c46d,#1eca6f,#29d072,#34d674,#3edc76,#47e278,#51e87a,#5bec7d,#65ee80,#6ff183,#77f485,#7ff686,#85f984,#89fa81,#8bf97d,#8cf777,#8cf56f,#8df368,#8df05f,#8dec56,#8de74d,#8ce243,#8bdc39,#8ad62f,#88d024,#87c91a,#85c20f,#84bc06,#88b806,#8bb606,#8eb305)"></i>
<i style="top:229px;left:74px;width:272px;background:linear-gradient(90deg,#00b671,#00b86e,#00ba6a,#08be6b,#13c46e,#1fca71,#2ad073,#34d676,#3fdc78,#49e17a,#52e77b,#5cec7e,#66ee82,#70f185,#79f487,#80f687,#87f986,#8bfa83,#8df97f,#8ef778,#8ef571,#8ef369,#8ff061,#8eec57,#8ee74e,#8de144,#8ddc3a,#8bd630,#8acf25,#88c81a,#86c210,#85bb06,#89b806,#8cb506,#8fb305)"></i>
<i style="top:231px;left:74px;width:274px;background:linear-gradient(90deg,#00b572,#00b76f,#00b96b,#08be6c,#14c36f,#1fc972,#2acf75,#35d577,#40db79,#4ae17b,#53e77d,#5dec7f,#67ee83,#71f186,#7af489,#82f689,#88f987,#8cfa85,#8ef980,#8ff77a,#8ff572,#90f36b,#90ef62,#90eb59,#90e64f,#8fe145,#8edb3b,#8dd531,#8bce26,#89c81b,#87c110,#86ba06,#8ab706,#8db406,#90b205)"></i>
<i style="top:233px;left:74px;width:276px;background:linear-gradient(90deg,#00b473,#00b670,#00b96c,#08bd6e,#14c370,#20c873,#2bce76,#36d479,#40db7b,#4be17d,#54e67f,#5eec80,#68ee85,#72f188,#7cf48a,#83f68b,#8af989,#8efa86,#90f982,#91f77b,#91f574,#92f26c,#92ef63,#91eb5a,#91e650,#90e046,#8fdb3c,#8ed431,#8cce27,#8ac71c,#89c011,#87b906,#8bb606,#8eb406,#91b105)"></i>
<i style="top:235px;left:74px;width:278px;background:linear-gradient(90deg,#00b475,#00b671,#00b86e,#08bc6e,#13c271,#1fc774,#2acd77,#34d37a,#3fd97c,#49de7e,#53e480,#5cea81,#66ed85,#70f088,#79f38b,#82f58c,#89f88c,#8efa89,#91f986,#92f881,#92f779,#93f472,#93f16a,#93ee61,#93e958,#92e44f,#92df45,#90d93a,#8fd230,#8dcc26,#8bc51b,#8abe10,#88b806,#8cb506,#8fb305,#92b005)"></i>
<i style="top:237px;left:74px;width:280px;background:linear-gradient(90deg,#00b376,#00b572,#00b76f,#08bc70,#14c173,#1fc676,#2acc78,#35d27b,#40d87d,#4ade7f,#54e481,#5dea83,#67ed86,#71f08a,#7bf28c,#83f58e,#8af88e,#8ffa8b,#92f988,#94f882,#94f77b,#94f474,#95f16c,#95ee62,#94e959,#94e450,#93de46,#92d83c,#90d231,#8ecb27,#8dc41c,#8bbd11,#89b706,#8db406,#90b205,#93b005)"></i>
<i style="top:239px;left:74px;width:282px;background:linear-gradient(90deg,#00b277,#00b473,#00b670,#08bb71,#14c074,#20c677,#2bcc7a,#36d27c,#41d87f,#4bdd81,#55e383,#5ee984,#68ed87,#72f08b,#7cf38e,#84f58f,#8cf88f,#91fa8d,#94fa8a,#95f884,#95f77d,#96f475,#96f16d,#96ee64,#96e85b,#95e351,#94de47,#93d83d,#91d132,#90ca27,#8ec41c,#8cbd11,#8ab606,#8eb406,#91b105,#94af05)"></i>
<i style="top:241px;left:74px;width:284px;background:linear-gradient(90deg,#00b278,#00b475,#00b671,#07ba72,#13bf75,#1fc578,#2aca7b,#34d07d,#3fd680,#49dc82,#53e184,#5de786,#66ec87,#70ef8b,#7af28e,#82f491,#8af791,#90f990,#94fa8d,#96f989,#97f882,#97f67b,#98f374,#98f06b,#98ec62,#97e759,#96e14f,#96dc45,#94d63b,#92cf31,#91c926,#8fc21b,#8dbb11,#8cb506,#8fb305,#92b005,#95ae05)"></i>
<i style="top:243px;left:74px;width:286px;background:linear-gradient(90deg,#00b179,#00b376,#00b572,#08b973,#13bf76,#1fc479,#2ac97c,#35cf7e,#40d581,#4adb83,#54e185,#5ee787,#67ec88,#71ef8c,#7bf290,#84f492,#8bf793,#92f992,#96fa8f,#98f98b,#98f884,#99f67d,#99f375,#99f06c,#99eb63,#99e65a,#98e150,#97db46,#95d53c,#93ce31,#92c827,#90c11c,#8eba11,#8db506,#90b205,#93b005,#96ae05)"></i>
<i style="top:245px;left:74px;width:288px;background:linear-gradient(90deg,#00b17a,#00b277,#00b473,#08b974,#14be77,#1fc47a,#2bc97d,#36cf80,#41d582,#4bdb85,#55e087,#5fe689,#68ec8a,#72ef8e,#7cf291,#85f494,#8df794,#93f993,#97fa91,#99f98c,#9af885,#9af67e,#9bf377,#9bf06d,#9aeb65,#9ae65b,#99e151,#98db47,#96d43d,#95ce32,#93c728,#91c01d,#8fba11,#8eb406,#91b105,#94af05,#97ad05)"></i>
<i style="top:247px;left:75px;width:290px;background:linear-gradient(90deg,#00b07a,#00b277,#00b474,#0ab976,#16bf79,#21c47c,#2dc97f,#38cf82,#43d584,#4ddb87,#57e189,#61e68b,#6aec8c,#74ef90,#7ef293,#87f495,#8ff796,#95fa95,#99fa92,#9bf98d,#9bf886,#9cf57f,#9cf277,#9cef6e,#9cea65,#9be55b,#9bdf51,#99d947,#97d33c,#96cc32,#94c527,#92bf1c,#90b910,#8fb305,#92b005,#95ae05,#98ac05)"></i>
<i style="top:249px;left:75px;width:292px;background:linear-gradient(90deg,#00b07b,#00b178,#00b375,#0ab877,#16be7a,#22c37d,#2dc980,#38ce83,#44d486,#4eda88,#59e08a,#62e68c,#6cec8d,#76ef91,#80f294,#89f497,#91f798,#97fa96,#9bfa93,#9df98f,#9df888,#9ef580,#9ef278,#9eef6f,#9dea66,#9de55c,#9cdf52,#9ad948,#99d23d,#97cc33,#95c528,#93be1d,#92b811,#90b205,#93b005,#96ad05,#99ab05)"></i>
<i style="top:251px;left:75px;width:294px;background:linear-gradient(90deg,#00af7c,#00b17a,#00b376,#09b778,#15bd7b,#21c27e,#2cc881,#37cd84,#42d386,#4dd889,#57de8b,#60e48d,#6aea8f,#73ee91,#7df194,#86f397,#8ff699,#96f999,#9bfb96,#9dfa93,#9ef98d,#9ff786,#9ff47f,#9ff176,#9fed6d,#9fe864,#9ee35a,#9ddd50,#9bd746,#9ad03c,#98ca31,#96c327,#94bd1b,#93b710,#91b105,#94af05,#97ac05,#9aaa04)"></i>
<i style="top:253px;left:75px;width:296px;background:linear-gradient(90deg,#00ae7d,#00b07b,#00b277,#09b779,#15bc7c,#21c27f,#2cc782,#38cc85,#43d288,#4dd88a,#58de8d,#62e38f,#6be990,#74ee92,#7ef196,#88f399,#90f69b,#97f99b,#9cfb98,#9ffa95,#a0f98f,#a0f788,#a1f480,#a1f178,#a1ed6f,#a0e865,#9fe25b,#9edc51,#9cd647,#9bd03d,#99c932,#97c227,#96bc1c,#94b610,#92b005,#95ae05,#98ac05,#9baa04)"></i>
<i style="top:255px;left:75px;width:298px;background:linear-gradient(90deg,#00ae7e,#00af7c,#00b179,#09b67a,#15bc7d,#21c180,#2dc783,#38cc86,#43d189,#4ed78c,#59dd8e,#63e390,#6ce992,#75ee93,#7ff197,#89f39a,#92f69c,#99f99c,#9efb9a,#a1fa96,#a1f990,#a2f789,#a2f482,#a2f179,#a2ec70,#a1e767,#a1e25d,#9fdc52,#9ed548,#9ccf3e,#9ac833,#98c228,#97bc1c,#95b510,#93af05,#97ad05,#99ab05,#9ca904)"></i>
<i style="top:257px;left:75px;width:300px;background:linear-gradient(90deg,#00ad80,#00af7d,#00b17a,#09b57b,#15bb7e,#20c081,#2cc584,#37cb87,#42d08a,#4cd58c,#57db8f,#61e191,#6ae793,#73ec94,#7df097,#87f29b,#8ff59d,#97f79e,#9dfa9d,#a1fb9a,#a3fa95,#a3f88f,#a4f688,#a4f380,#a4ef77,#a3ea6e,#a3e565,#a2e05b,#a0da51,#9fd347,#9dcd3c,#9bc632,#99c027,#98ba1b,#96b40f,#95af05,#98ac05,#9aaa04,#9da804)"></i>
<i style="top:259px;left:75px;width:302px;background:linear-gradient(90deg,#00ac81,#00ae7e,#00b07b,#09b57c,#15ba7f,#21c082,#2cc585,#37ca88,#42cf8b,#4dd58e,#58db90,#62e192,#6be694,#75ec96,#7ef098,#88f29c,#91f59f,#99f7a0,#9ffa9e,#a3fb9c,#a4fa97,#a5f890,#a5f689,#a5f381,#a5ef78,#a5ea6f,#a4e566,#a3df5c,#a1d952,#a0d348,#9ecc3d,#9cc633,#9bc027,#99ba1c,#97b410,#96ae05,#99ab05,#9ba904,#9ea704)"></i>
<i style="top:261px;left:75px;width:304px;background:linear-gradient(90deg,#00ac82,#00ad7f,#00af7c,#09b47d,#15ba81,#21bf84,#2dc587,#38ca8a,#43cf8c,#4ed48f,#59da92,#63e094,#6de696,#76eb98,#7ff09a,#89f29d,#92f5a0,#9af7a1,#a0faa0,#a4fb9d,#a6fa99,#a6f892,#a7f68b,#a7f382,#a7ef7a,#a6ea71,#a5e567,#a4df5d,#a3d953,#a1d248,#9fcc3e,#9ec533,#9cbf28,#9ab91c,#98b310,#97ad05,#9aab05,#9ca904,#9fa704)"></i>
<i style="top:263px;left:76px;width:305px;background:linear-gradient(90deg,#00ab82,#00ad80,#00af7d,#0bb47f,#16ba82,#22bf85,#2ec588,#3aca8b,#45cf8e,#50d591,#5ada93,#65e096,#6ee698,#78eb99,#81f09b,#8bf39f,#94f5a2,#9cf8a3,#a2faa2,#a6fb9f,#a7fa9a,#a8f893,#a8f68c,#a8f383,#a8ee7a,#a8e971,#a7e468,#a6de5e,#a4d854,#a2d149,#a0cb3e,#9fc433,#9dbe28,#9bb81c,#99b210,#98ac05,#9baa04,#9da804,#a0a604)"></i>
<i style="top:265px;left:76px;width:307px;background:linear-gradient(90deg,#00ab83,#00ac81,#00ae7e,#0bb380,#17b983,#23bf86,#2ec489,#3ac98c,#45cf8f,#51d492,#5bda95,#66e097,#70e699,#79eb9b,#82f09d,#8cf3a0,#95f5a3,#9df8a4,#a4faa3,#a7fba0,#a9fa9b,#a9f894,#aaf68d,#aaf385,#a9ee7c,#a9e973,#a8e469,#a7de5f,#a5d754,#a3d14a,#a2ca3f,#a0c434,#9ebe28,#9cb81d,#9bb211,#99ab05,#9ca904,#9ea704,#a1a504)"></i>
<i style="top:267px;left:76px;width:309px;background:linear-gradient(90deg,#00aa84,#00ac82,#00ad7f,#0ab281,#16b884,#22bd87,#2dc38a,#39c88d,#44cd90,#4fd393,#59d895,#64de98,#6ee39a,#77e99c,#80ee9d,#8af2a0,#93f4a4,#9bf7a6,#a2f9a6,#a7fba3,#aafaa0,#aaf99a,#abf793,#abf48b,#abf183,#abec7a,#aae770,#a9e167,#a8db5d,#a6d553,#a4cf48,#a3c83e,#a1c233,#9fbc27,#9db61c,#9cb010,#9aaa04,#9da804,#a0a604,#a1a404)"></i>
<i style="top:269px;left:76px;width:311px;background:linear-gradient(90deg,#00aa85,#00ab83,#00ad80,#0ab282,#16b785,#22bd88,#2ec28b,#39c88e,#44cd91,#4fd294,#5ad897,#65dd99,#6fe39b,#78e99d,#81ee9f,#8bf2a2,#94f4a5,#9df7a7,#a4f9a7,#a9fba5,#abfaa2,#acf99b,#acf794,#adf48d,#adf184,#acec7b,#abe772,#aae168,#a9db5e,#a7d454,#a5ce49,#a4c83f,#a2c233,#a0bc28,#9fb61c,#9db010,#9baa04,#9ea804,#a0a504,#a2a304)"></i>
<i style="top:271px;left:76px;width:313px;background:linear-gradient(90deg,#00a986,#00ab84,#00ac81,#0ab183,#16b786,#22bc89,#2ec28c,#3ac790,#45cd92,#50d295,#5bd798,#65dd9b,#70e39d,#79e89f,#82eea0,#8cf2a3,#95f4a6,#9ef7a9,#a5f9a9,#aafba7,#adfaa3,#adf99d,#aef796,#aef48e,#aef085,#aeec7c,#ade673,#ace169,#aada5f,#a8d455,#a7cd4a,#a5c73f,#a3c134,#a1bb28,#a0b51c,#9eaf11,#9ca905,#9fa704,#a1a504,#a3a204)"></i>
<i style="top:273px;left:76px;width:316px;background:linear-gradient(90deg,#00a887,#00aa85,#00ab82,#09b084,#15b687,#21bb8a,#2dc18d,#38c690,#44cb93,#4fd096,#59d599,#64db9b,#6ee19e,#78e6a0,#81eca1,#89f1a3,#93f3a7,#9cf6a9,#a4f8ab,#aafba9,#adfba7,#affaa2,#aff89b,#b0f694,#b0f38b,#afee83,#afe979,#aee470,#acde66,#abd85c,#a9d152,#a7cb48,#a6c53c,#a4bf31,#a2b926,#a0b31a,#9fad0e,#9ea804,#a0a604,#a2a304,#a4a104)"></i>
<i style="top:275px;left:76px;width:318px;background:linear-gradient(90deg,#00a888,#00a986,#00ab83,#09b085,#15b588,#21bb8b,#2dc08e,#39c691,#44cb94,#4fd097,#5ad59a,#65db9d,#6fe09f,#79e6a1,#82eba3,#8bf1a4,#95f3a8,#9df6ab,#a5f8ac,#abfbab,#affba8,#b0faa3,#b1f89c,#b1f695,#b1f38c,#b1ee84,#b0e97b,#afe371,#aedd67,#acd75d,#aad153,#a8ca48,#a7c53d,#a5bf32,#a3b926,#a2b31a,#a0ad0f,#9fa704,#a1a504,#a3a204,#a4a005)"></i>
<i style="top:277px;left:77px;width:319px;background:linear-gradient(90deg,#00a789,#00a987,#00aa84,#0bb087,#17b58a,#23bb8d,#2fc090,#3ac693,#46cb96,#51d099,#5cd59c,#67db9e,#71e0a1,#7be6a3,#84eca5,#8cf1a6,#96f4aa,#9ff6ac,#a7f8ae,#adfbac,#b1fbaa,#b2faa4,#b2f89e,#b2f596,#b2f28d,#b2ed85,#b1e87c,#b0e372,#afdd68,#add65e,#abd053,#aaca49,#a8c43d,#a6be32,#a4b826,#a3b21b,#a1ac0f,#a0a604,#a2a404,#a3a104,#a59f05)"></i>
<i style="top:279px;left:77px;width:321px;background:linear-gradient(90deg,#00a68a,#00a888,#00aa85,#0baf88,#17b58b,#23ba8e,#2fc091,#3bc594,#46cb97,#52d09a,#5dd59d,#67daa0,#72e0a2,#7ce6a4,#85eba6,#8ef1a7,#98f4ab,#a1f6ae,#a9f8af,#affbae,#b2fbab,#b3faa6,#b4f89f,#b4f597,#b4f28f,#b3ed86,#b3e87d,#b2e273,#b0dc69,#aed65f,#adcf54,#abc949,#a9c43e,#a7be32,#a6b827,#a4b21b,#a2ab0f,#a1a504,#a2a304,#a4a005,#a69e05)"></i>
<i style="top:281px;left:77px;width:323px;background:linear-gradient(90deg,#00a68a,#00a789,#00a986,#0bae89,#17b48c,#24ba8f,#2fbf92,#3bc595,#47ca98,#52d09b,#5dd59e,#68daa1,#73e0a3,#7de5a6,#86eba8,#8ff0a9,#99f4ac,#a2f6af,#aaf8b1,#b0fbb0,#b4fbad,#b5faa7,#b5f8a0,#b5f599,#b5f290,#b5ed87,#b4e87e,#b3e274,#b1dc6a,#afd560,#aecf55,#acc94a,#aac33f,#a9bd33,#a7b727,#a5b11c,#a3ab10,#a1a404,#a3a204,#a5a005,#a69d05)"></i>
<i style="top:283px;left:77px;width:325px;background:linear-gradient(90deg,#00a58b,#00a789,#00a887,#0aad8a,#16b38d,#22b990,#2ebe93,#3ac396,#45c999,#50ce9c,#5bd39f,#66d8a1,#71dea4,#7be3a6,#84e9a8,#8deeaa,#96f3ac,#a0f5af,#a8f7b2,#affab2,#b4fcb0,#b6fbac,#b6faa6,#b7f79f,#b7f497,#b7f08e,#b6eb85,#b5e57c,#b3df72,#b2d968,#b0d35e,#afcd53,#adc748,#abc13d,#a9bc32,#a8b626,#a6b01a,#a4a90f,#a2a304,#a4a104,#a59f05,#a79d05)"></i>
<i style="top:285px;left:77px;width:327px;background:linear-gradient(90deg,#00a48c,#00a68a,#00a888,#0aad8b,#16b28e,#22b891,#2ebe94,#3ac397,#46c89a,#51ce9d,#5cd3a0,#67d8a3,#72dda5,#7ce3a8,#85e8aa,#8eeeac,#97f3ad,#a1f5b1,#a9f7b3,#b0fab4,#b5fcb1,#b7fbae,#b8faa7,#b8f7a0,#b8f498,#b8f08f,#b7eb86,#b6e57d,#b5df73,#b3d969,#b1d25f,#b0cd54,#aec749,#acc13d,#abbb32,#a9b526,#a7af1b,#a5a90f,#a3a204,#a5a005,#a69e05,#a89c05)"></i>
<i style="top:287px;left:78px;width:328px;background:linear-gradient(90deg,#00a38d,#00a58b,#00a789,#0cad8c,#18b28f,#24b892,#30be95,#3cc399,#47c99c,#53ce9f,#5ed3a1,#69d8a4,#73dda7,#7de3a9,#87e8ab,#90eead,#99f3af,#a3f5b2,#abf8b5,#b2fab5,#b7fcb3,#b9fbaf,#b9f9a8,#baf7a1,#baf499,#b9ef90,#b9ea87,#b7e47e,#b6de74,#b4d86a,#b3d25f,#b1cc54,#afc649,#adc03e,#acba32,#aab427,#a8ae1b,#a6a810,#a4a104,#a59f05,#a79d05,#a89b05)"></i>
<i style="top:289px;left:78px;width:330px;background:linear-gradient(90deg,#00a38d,#00a48c,#00a68a,#0cac8d,#18b290,#24b893,#30bd97,#3cc39a,#48c89d,#53cda0,#5ed3a3,#69d8a6,#74dda8,#7ee2ab,#88e8ad,#91eeaf,#9af3b0,#a4f5b4,#acf8b6,#b4fab7,#b8fcb4,#bafbb0,#bbf9aa,#bbf7a3,#bbf49a,#bbef92,#baea88,#b9e47f,#b7de75,#b5d86b,#b4d160,#b2cc55,#b0c64a,#afc03e,#adba33,#abb427,#a9ae1b,#a7a710,#a4a005,#a69e05,#a79c05,#a99a05)"></i>
<i style="top:291px;left:78px;width:332px;background:linear-gradient(90deg,#00a28e,#00a48c,#00a58b,#0bab8e,#17b191,#23b694,#2fbc97,#3bc19a,#46c79d,#51cca0,#5cd1a3,#67d6a6,#72dba9,#7ce0ab,#86e6ae,#8febb0,#98f1b1,#a1f4b4,#aaf7b7,#b2f9b8,#b8fcb7,#bbfcb4,#bcfaaf,#bcf8a8,#bdf6a0,#bcf298,#bced8f,#bbe886,#b9e27d,#b8dc73,#b6d569,#b4d05e,#b3ca53,#b1c448,#afbe3d,#aeb831,#acb226,#aaac1b,#a7a50f,#a59f05,#a79d05,#a89b05,#aa9905)"></i>
<i style="top:293px;left:78px;width:334px;background:linear-gradient(90deg,#00a18f,#00a38d,#00a48c,#0baa8f,#17b092,#23b695,#2fbb98,#3bc19b,#46c69f,#52cca2,#5dd1a4,#68d6a7,#73dbaa,#7de0ad,#87e6af,#90ebb1,#99f0b3,#a2f4b5,#abf7b8,#b3f9ba,#b9fcb9,#bcfcb6,#bdfab0,#bef8aa,#bef6a2,#bef19a,#bded91,#bce787,#bbe17e,#b9db74,#b7d56a,#b6cf5f,#b4c954,#b2c449,#b1be3d,#afb832,#adb226,#abab1b,#a8a510,#a69e05,#a79c05,#a99a05,#aa9805)"></i>
<i style="top:295px;left:78px;width:336px;background:linear-gradient(90deg,#00a090,#00a28e,#00a48c,#0ba98f,#17b093,#23b596,#2fbb99,#3bc09d,#47c6a0,#52cba3,#5ed0a6,#69d6a9,#74dbab,#7ee0ae,#88e5b0,#92ebb2,#9bf0b4,#a3f4b6,#adf7b9,#b5f9bb,#bbfcba,#befcb8,#bffbb2,#bff8ab,#bff6a3,#bff19b,#beec92,#bde788,#bce17f,#badb75,#b8d46b,#b7cf60,#b5c955,#b3c349,#b2bd3e,#b0b732,#aeb127,#acaa1c,#a9a410,#a79d05,#a89b05,#aa9905,#ab9705)"></i>
<i style="top:297px;left:79px;width:337px;background:linear-gradient(90deg,#00a090,#00a18f,#00a38d,#0ca991,#18af94,#25b598,#31bb9b,#3dc09e,#48c6a1,#54cba4,#5fd1a7,#6ad6aa,#75dbad,#80e0af,#8ae5b2,#93ebb4,#9cf0b6,#a5f4b8,#aef7bb,#b6f9bd,#bcfcbc,#bffcb9,#c0fbb3,#c1f8ac,#c1f5a4,#c0f19c,#c0ec93,#bee689,#bde07f,#bbda75,#bad46b,#b8ce60,#b6c955,#b5c34a,#b3bd3e,#b1b733,#afb027,#acaa1c,#aaa311,#a79c05,#a99a05,#aa9805,#ac9605)"></i>
<i style="top:299px;left:79px;width:339px;background:linear-gradient(90deg,#009f91,#00a090,#00a28e,#0ca891,#19af95,#25b599,#31ba9c,#3dc09f,#49c6a2,#55cba5,#60d0a8,#6bd5ab,#76dbae,#81e0b1,#8be5b3,#95eab5,#9ef0b7,#a6f4b9,#b0f7bc,#b8f9be,#befcbd,#c1fcba,#c2fbb5,#c2f8ae,#c2f5a5,#c2f19d,#c1ec94,#c0e68a,#bee081,#bcda77,#bbd46c,#b9ce61,#b7c856,#b6c24a,#b4bc3f,#b2b633,#b0b028,#ada91d,#aba211,#a89b05,#aa9905,#ab9705,#ac9506)"></i>
<i style="top:301px;left:79px;width:341px;background:linear-gradient(90deg,#009e92,#00a090,#00a18f,#0ba792,#18ad96,#24b399,#2fb99d,#3bbfa0,#47c4a3,#52c9a6,#5ecfa9,#69d4ac,#74d9ae,#7edeb1,#89e3b4,#92e8b6,#9beeb8,#a4f3b9,#adf6bc,#b6f8bf,#bdfbc0,#c1fcbe,#c3fbb9,#c3fab3,#c4f7ac,#c3f3a3,#c3ee9b,#c2e991,#c0e388,#bfdd7e,#bdd774,#bbd26a,#bacc5f,#b8c654,#b7c148,#b5bb3d,#b3b432,#b0ae27,#aea71c,#aba110,#a99a05,#aa9805,#ac9605,#ad9406)"></i>
<i style="top:303px;left:79px;width:343px;background:linear-gradient(90deg,#009d93,#009f91,#00a090,#0ba693,#18ad96,#24b39a,#30b99e,#3cbea1,#47c4a4,#53c9a7,#5eceaa,#6ad3ad,#75d9b0,#7fdeb2,#89e2b5,#93e8b7,#9dedb9,#a5f2bb,#aef6be,#b7f8c0,#befbc1,#c3fcbf,#c4fbbb,#c5fab4,#c5f7ad,#c5f3a5,#c4ee9c,#c3e993,#c2e389,#c0dd7f,#bed775,#bdd16a,#bbcc5f,#b9c654,#b8c049,#b6ba3e,#b4b433,#b1ad28,#afa61c,#aca011,#aa9906,#ab9705,#ac9506,#ae9306)"></i>
<i style="top:305px;left:79px;width:345px;background:linear-gradient(90deg,#009c94,#009e92,#00a090,#0ba594,#18ac97,#24b29b,#30b89f,#3cbea2,#48c3a5,#53c9a8,#5fceab,#6ad3ae,#75d8b1,#80ddb4,#8ae2b6,#94e8b9,#9eedbb,#a6f2bc,#aff6bf,#b8f8c2,#bffbc3,#c4fcc1,#c6fbbc,#c6fab6,#c6f7ae,#c6f3a6,#c5ee9d,#c4e994,#c3e38a,#c1dd81,#bfd776,#bed16b,#bccb60,#bbc655,#b9c04a,#b7ba3f,#b4b333,#b2ac28,#afa61d,#ad9f12,#ab9807,#ac9605,#ad9406,#ae9206)"></i>
<i style="top:307px;left:80px;width:347px;background:linear-gradient(90deg,#009c94,#009d93,#009f91,#0da595,#19ac99,#25b29c,#32b8a0,#3ebea3,#4ac3a7,#55c9aa,#61cead,#6cd3b0,#77d9b2,#82deb5,#8de3b8,#97e8ba,#a0edbc,#a9f3be,#b2f6c1,#baf9c3,#c1fbc4,#c6fcc2,#c7fbbd,#c8f9b6,#c8f7af,#c7f2a6,#c7ed9d,#c5e894,#c4e18a,#c2db80,#c0d676,#bfd06b,#bdca60,#bcc454,#babf49,#b7b83e,#b5b233,#b2ab27,#b0a41c,#ae9d11,#ac9706,#ad9506,#ae9306,#af9106)"></i>
<i style="top:309px;left:80px;width:349px;background:linear-gradient(90deg,#009b95,#009c94,#009e92,#0ca495,#18aa99,#24b09d,#30b7a0,#3cbda4,#48c2a7,#53c7aa,#5fcdad,#6ad2b0,#75d7b3,#80dcb6,#8ae1b8,#94e6bb,#9eebbd,#a7f0bf,#aff5c0,#b8f8c4,#c0fac6,#c6fcc5,#c8fcc1,#c9fbbb,#c9f8b4,#c9f5ac,#c8f0a4,#c7eb9b,#c6e592,#c4df88,#c3d97e,#c1d473,#bfce68,#bec95d,#bcc352,#babd47,#b8b63c,#b5b031,#b3a926,#b1a31b,#ae9c11,#ac9606,#ad9306,#af9206,#b09006)"></i>
<i style="top:311px;left:80px;width:351px;background:linear-gradient(90deg,#009a96,#009c94,#009d93,#0ca396,#18aa9a,#24b09e,#30b6a1,#3cbca5,#48c2a8,#54c7ab,#5fccae,#6bd2b1,#76d7b4,#81dcb7,#8be1ba,#95e6bc,#9febbe,#a8f0c0,#b0f5c2,#b9f8c5,#c1fac7,#c7fcc6,#cafcc3,#cafbbd,#caf8b6,#caf4ae,#caf0a5,#c9ea9c,#c7e593,#c5df89,#c4d97f,#c2d374,#c1ce69,#bfc85e,#bdc253,#bbbc48,#b9b63d,#b6af32,#b4a827,#b2a21c,#af9b11,#ad9507,#ae9206,#af9106,#b18f06)"></i>
<i style="top:313px;left:80px;width:353px;background:linear-gradient(90deg,#009a96,#009b95,#009c94,#0ca297,#18a99b,#24af9e,#31b5a2,#3dbba6,#48c1a9,#54c7ac,#60ccaf,#6bd1b2,#76d6b5,#81dbb8,#8ce0bb,#96e5bd,#a0ebc0,#a9f0c2,#b1f5c3,#baf8c6,#c2fac8,#c8fcc8,#cbfcc4,#cbfbbe,#ccf8b7,#ccf4af,#cbf0a6,#caea9d,#c8e494,#c7de8a,#c5d980,#c3d375,#c2ce6a,#c0c85f,#bec254,#bcbc49,#bab53e,#b7ae33,#b5a828,#b3a11d,#b09b12,#ae9407,#af9106,#b09006,#b28f06)"></i>
<i style="top:315px;left:81px;width:354px;background:linear-gradient(90deg,#009997,#009a96,#009c94,#0da298,#19a99c,#26afa0,#32b5a3,#3ebba7,#4ac1ab,#56c7ae,#61ccb1,#6dd1b4,#78d6b7,#83dcba,#8ee1bc,#98e5bf,#a2ebc1,#abf0c3,#b3f5c5,#bcf8c8,#c4faca,#cafdc9,#ccfcc6,#cdfbbf,#cdf8b8,#cdf4b0,#ccefa7,#cbea9e,#c9e495,#c8de8b,#c6d880,#c4d375,#c3cd6a,#c1c75f,#bfc154,#bdbb49,#bab43e,#b8ae33,#b6a728,#b3a01e,#b19a13,#af9308,#b09006,#b18f06,#b38e06)"></i>
<i style="top:317px;left:81px;width:356px;background:linear-gradient(90deg,#009898,#009997,#009b95,#0da199,#19a89d,#26aea0,#32b4a4,#3ebba8,#4ac1ab,#56c6af,#62ccb2,#6dd1b5,#79d6b8,#84dbbb,#8ee0be,#99e5c0,#a3eac3,#acf0c5,#b4f5c6,#bdf8c9,#c5facb,#cbfdca,#cefcc7,#cefbc1,#cef8b9,#cef4b1,#cdefa8,#cce99f,#cae396,#c9dd8c,#c7d881,#c6d276,#c4cd6b,#c2c760,#c0c155,#beba4a,#bbb43f,#b9ad34,#b7a629,#b4a01e,#b29914,#b09309,#b19006,#b28e06,#b48d06)"></i>
<i style="top:319px;left:81px;width:358px;background:linear-gradient(90deg,#009799,#009997,#009a96,#0ca099,#18a69d,#25ada1,#31b3a4,#3db9a8,#48bfac,#54c5af,#60cab2,#6bcfb5,#76d5b8,#81dabb,#8cdfbe,#96e3c1,#a0e8c3,#aaedc5,#b2f3c7,#bbf7c9,#c3f9cc,#cafbcd,#cefdcb,#cffcc6,#d0f9bf,#d0f6b7,#cff2af,#ceeca6,#cde79d,#cbe193,#c9db89,#c8d67f,#c6d074,#c5cb69,#c3c55e,#c0bf53,#beb849,#bcb23e,#b9ab33,#b7a528,#b59e1e,#b39813,#b19109,#b28f06,#b38e06,#b48c06)"></i>
<i style="top:321px;left:81px;width:360px;background:linear-gradient(90deg,#009799,#009898,#009997,#0c9f9a,#18a69e,#25aca2,#31b2a5,#3db8a9,#49bead,#55c4b0,#60cab3,#6ccfb6,#77d4b9,#82d9bc,#8ddebf,#97e3c2,#a1e8c4,#abedc7,#b3f2c8,#bcf7ca,#c4f9cd,#ccfcce,#d0fdcc,#d1fcc7,#d1f9c0,#d1f6b9,#d0f1b0,#cfeca7,#cee69e,#cce094,#cbdb8a,#c9d67f,#c7d075,#c6ca6a,#c4c45f,#c1be54,#bfb849,#bdb13f,#baab34,#b8a429,#b69e1f,#b49714,#b29109,#b28e06,#b48d06,#b58c05)"></i>
<i style="top:323px;left:82px;width:361px;background:linear-gradient(90deg,#00969a,#009799,#019998,#0d9f9b,#1aa59f,#26aca3,#32b2a7,#3eb8aa,#4abeae,#56c4b1,#62cab5,#6dcfb8,#78d4bb,#83d9be,#8edfc0,#99e3c3,#a3e8c6,#acedc8,#b5f2ca,#bdf7cb,#c6f9cf,#cdfcd0,#d1fdcd,#d2fcc8,#d2f9c1,#d2f6b9,#d2f1b1,#d0eca8,#cfe69f,#cde095,#ccdb8a,#cad580,#c9d075,#c7ca6a,#c5c45f,#c2bd55,#c0b74a,#bdb03f,#bbaa34,#b9a32a,#b79d1f,#b59615,#b3900a,#b38d06,#b58c06,#b68b05)"></i>
<i style="top:325px;left:82px;width:363px;background:linear-gradient(90deg,#00959b,#00969a,#009899,#0d9e9c,#1aa5a0,#26aba4,#32b1a7,#3eb7ab,#4abdaf,#56c4b2,#62c9b6,#6ecfb9,#79d4bc,#84d9bf,#8fdec2,#9ae3c4,#a4e8c7,#adedc9,#b6f2cb,#bff7cd,#c7f9d0,#cffcd1,#d3fdcf,#d3fcc9,#d4f9c3,#d4f6bb,#d3f1b2,#d2eba9,#d0e5a0,#cee096,#cdda8b,#cbd581,#cacf76,#c8c96b,#c5c360,#c3bd55,#c1b64b,#beb040,#bca935,#baa32b,#b89c20,#b69615,#b4900a,#b48d06,#b68b05,#b78a05)"></i>
<i style="top:327px;left:82px;width:365px;background:linear-gradient(90deg,#00949c,#00959b,#009799,#0c9d9d,#18a3a0,#25a9a4,#31b0a8,#3db6ab,#49bcaf,#54c2b2,#60c8b6,#6bcdb9,#77d2bc,#82d8bf,#8cddc2,#97e1c5,#a1e6c7,#abebca,#b4f0cc,#bcf5ce,#c5f9d0,#cdfbd2,#d3fdd1,#d5fcce,#d5fbc8,#d5f8c0,#d5f3b8,#d4eeb0,#d2e9a7,#d1e39d,#cfde93,#cdd889,#ccd37e,#cacd74,#c8c769,#c6c15f,#c3bb54,#c1b449,#bfae3f,#bda835,#bba12a,#b99b20,#b79515,#b58f0a,#b58c05,#b78b05,#b88a05)"></i>
<i style="top:329px;left:82px;width:367px;background:linear-gradient(90deg,#00949c,#00959b,#00969a,#0c9c9e,#18a2a1,#25a9a5,#31afa9,#3db5ac,#49bbb0,#55c1b3,#60c7b7,#6ccdba,#77d2bd,#82d7c0,#8ddcc3,#98e1c6,#a2e6c9,#acebcb,#b5f0cd,#bef5cf,#c6f9d1,#cefbd4,#d4fdd3,#d6fccf,#d6fbc9,#d6f8c2,#d6f3ba,#d5eeb1,#d3e8a8,#d2e39e,#d0de94,#cfd88a,#cdd37f,#cbcd74,#c9c76a,#c7c05f,#c4ba55,#c2b44a,#c0ad40,#bea735,#bca12b,#ba9a20,#b89415,#b68e0b,#b68b05,#b88a05,#b98905)"></i>
<i style="top:331px;left:83px;width:368px;background:linear-gradient(90deg,#00939d,#00949c,#00959b,#0d9c9f,#1aa2a2,#26a9a6,#32afaa,#3eb5ad,#4abbb1,#56c1b5,#62c7b8,#6dcdbc,#79d2bf,#84d7c2,#8fdcc4,#99e1c7,#a4e6ca,#aeebcc,#b7f0cf,#bff5d0,#c8f9d3,#d0fbd5,#d5fdd4,#d7fcd1,#d8fbca,#d8f7c3,#d7f3ba,#d6eeb2,#d4e8a9,#d3e29f,#d1dd95,#d0d88a,#ced280,#cccc75,#cac66b,#c7c060,#c5b955,#c3b34b,#c1ad40,#bfa636,#bda02b,#bb9a21,#b99416,#b78e0b,#b78a05,#b98905,#ba8805)"></i>
<i style="top:333px;left:83px;width:370px;background:linear-gradient(90deg,#00929e,#00939d,#00949c,#0d9b9f,#1aa2a3,#26a8a7,#32aeab,#3fb4ae,#4bbab2,#57c1b5,#62c7b9,#6eccbc,#79d2c0,#84d7c3,#90dcc6,#9ae1c8,#a5e6cb,#afebce,#b8f0d0,#c1f5d2,#c9f9d4,#d1fbd6,#d7fdd6,#d9fdd2,#d9fbcc,#d9f7c4,#d8f3bc,#d7edb3,#d5e8aa,#d4e2a0,#d2dd96,#d1d78b,#cfd280,#cdcc76,#cbc66b,#c8bf61,#c6b956,#c4b34c,#c2ac41,#c0a637,#bea02c,#bc9a21,#ba9316,#b98d0b,#b88905,#ba8805,#bb8705)"></i>
<i style="top:335px;left:83px;width:372px;background:linear-gradient(90deg,#00919f,#00929e,#00949d,#0d9aa0,#19a1a4,#26a7a8,#32adab,#3fb4af,#4bbab3,#57c0b6,#63c6ba,#6eccbd,#7ad2c1,#85d7c4,#90dcc7,#9be1ca,#a5e6cc,#b0eacf,#b9efd1,#c2f4d3,#caf9d5,#d2fbd8,#d8fdd7,#dafdd3,#dafbcd,#daf7c5,#d9f3bd,#d8edb4,#d7e7ab,#d5e2a1,#d3dd96,#d2d78c,#d0d181,#cecb77,#cbc56c,#c9bf62,#c7b857,#c5b24d,#c3ab42,#c1a537,#bf9f2d,#bd9922,#bb9317,#ba8d0c,#b98905,#ba8805,#bc8705)"></i>
<i style="top:337px;left:83px;width:374px;background:linear-gradient(90deg,#00919f,#00929e,#00939d,#0c99a1,#189fa4,#25a6a8,#31acac,#3db2af,#49b8b3,#55beb6,#61c4ba,#6ccabd,#77d0c1,#83d5c4,#8ddac7,#98dfca,#a3e4cc,#ade9cf,#b7edd2,#bff2d4,#c8f7d5,#d0fad8,#d7fcd9,#dbfdd7,#dbfcd2,#dbf9cb,#dbf5c3,#daf0ba,#d9eab2,#d7e5a8,#d6e09e,#d4db94,#d3d589,#d0cf7f,#cec975,#ccc36a,#cabd60,#c7b656,#c5b04c,#c3aa41,#c2a436,#c09e2c,#be9821,#bc9216,#bb8c0c,#ba8805,#bb8705,#bd8605)"></i>
<i style="top:339px;left:84px;width:376px;background:linear-gradient(90deg,#0090a0,#00919f,#01929e,#0d99a2,#1a9fa6,#26a6a9,#33acad,#3fb2b1,#4bb8b4,#57beb8,#62c4bb,#6ecabf,#79d0c2,#84d5c5,#8fdbc8,#9adfcb,#a5e4ce,#afe9d1,#b9eed3,#c2f3d5,#caf7d7,#d2fad9,#d9fcdb,#dcfdd8,#ddfcd2,#ddf9cb,#dcf4c3,#dbefbb,#d9e9b2,#d8e4a8,#d6df9e,#d5da93,#d3d489,#d1ce7f,#cfc874,#ccc26a,#cabb60,#c8b555,#c6af4b,#c4a940,#c2a336,#c19d2b,#bf9720,#bd9116,#bc8b0b,#bb8705,#bd8605,#be8505)"></i>
<i style="top:341px;left:84px;width:378px;background:linear-gradient(90deg,#008fa1,#0090a0,#01919f,#0d98a3,#1a9ea6,#26a5aa,#33abae,#3fb1b1,#4bb8b5,#57beb9,#63c4bc,#6ec9c0,#7acfc3,#85d5c6,#90dac9,#9bdfcc,#a6e4cf,#b0e9d2,#baedd4,#c3f2d7,#cbf7d8,#d3fadb,#dafddc,#ddfdd9,#defcd4,#def9cd,#ddf4c4,#dcefbc,#dbe9b3,#d9e4a9,#d8df9f,#d6da94,#d4d48a,#d2ce80,#cfc775,#cdc16b,#cbbb61,#c9b556,#c7ae4c,#c5a841,#c4a236,#c29c2c,#c09621,#bf9016,#bd8a0b,#bc8605,#be8505,#bf8405)"></i>
<i style="top:343px;left:84px;width:380px;background:linear-gradient(90deg,#008ea2,#008fa1,#0090a0,#0c97a3,#199da7,#25a3ab,#31a9ae,#3db0b2,#49b6b5,#55bcb9,#60c2bc,#6cc8c0,#77cdc3,#83d3c6,#8dd8ca,#98ddcd,#a3e2cf,#ade7d2,#b7ecd5,#c0f0d7,#c9f5d9,#d0f9da,#d8fcdd,#defedc,#dffdd8,#dffad2,#dff7ca,#def2c2,#ddecb9,#dbe7b0,#dae2a6,#d8dd9c,#d6d792,#d4d188,#d2cb7e,#d0c574,#cebf69,#ccb95f,#cab355,#c8ad4a,#c6a740,#c4a135,#c39b2b,#c19520,#c08f16,#be890b,#bd8505,#bf8405,#c08304)"></i>
<i style="top:345px;left:85px;width:381px;background:linear-gradient(90deg,#008ea2,#008fa1,#0190a1,#0d96a4,#1a9da8,#26a3ac,#32a9af,#3eb0b3,#4ab6b6,#56bcba,#62c2bd,#6dc8c1,#79cdc4,#84d3c8,#8fd9cb,#9adece,#a4e3d1,#afe7d3,#b8ecd6,#c2f0d8,#caf5da,#d2fadc,#dafcde,#dffede,#e0fdd9,#e1fad3,#e0f6cb,#dff1c3,#deecba,#dce7b0,#dbe2a6,#d9dc9c,#d7d792,#d5d188,#d3cb7e,#d1c574,#cebe6a,#ccb860,#cbb255,#c9ac4b,#c7a740,#c6a136,#c49b2b,#c29521,#c18f16,#bf890c,#bf8405,#c08404,#c18304)"></i>
<i style="top:347px;left:85px;width:383px;background:linear-gradient(90deg,#008da3,#008ea2,#018fa2,#0d95a5,#1a9ca9,#26a2ac,#32a9b0,#3eafb4,#4bb5b7,#56bbbb,#62c1be,#6ec7c2,#79cdc5,#84d3c8,#90d8cc,#9addcf,#a5e2d2,#afe7d4,#b9ecd7,#c3f0da,#ccf5dc,#d3fadd,#dbfce0,#e0fedf,#e2fdda,#e2fad4,#e1f6cc,#e0f1c4,#dfecbb,#dde7b1,#dce1a7,#dadc9d,#d8d693,#d6d089,#d4ca7f,#d1c475,#cfbe6b,#cdb861,#ccb256,#caac4c,#c8a641,#c7a037,#c59a2c,#c39421,#c28e17,#c0880c,#c08404,#c18304,#c28204)"></i>
<i style="top:349px;left:85px;width:385px;background:linear-gradient(90deg,#008ca4,#008da3,#008ea2,#0d95a6,#1a9baa,#26a1ad,#32a8b1,#3faeb4,#4bb4b8,#57bbbc,#62c1bf,#6ec6c3,#7accc6,#85d2c9,#90d8cd,#9bddd0,#a6e2d3,#b0e7d6,#baecd8,#c4f0db,#cdf5dd,#d4f9de,#dcfce1,#e2fee0,#e3fddc,#e3fad5,#e2f6cd,#e1f1c5,#e0ebbc,#dee6b2,#dde1a8,#dbdc9e,#d9d694,#d7d08a,#d4ca80,#d2c476,#d0bd6c,#cfb861,#cdb257,#cbac4c,#c9a642,#c8a037,#c69a2d,#c59422,#c38e17,#c2880d,#c18304,#c28204,#c38104)"></i>
<i style="top:351px;left:85px;width:387px;background:linear-gradient(90deg,#008ba5,#008ca4,#008da3,#0d94a7,#199aaa,#26a1ae,#32a7b2,#3fadb5,#4bb4b9,#57babc,#63c0c0,#6ec6c3,#7accc7,#85d2ca,#91d7ce,#9cddd1,#a6e2d4,#b1e7d7,#bbebd9,#c5f0dc,#cef5de,#d6f9e0,#ddfce2,#e3fee2,#e4fddd,#e4fad6,#e4f6cf,#e2f1c6,#e1ebbd,#dfe6b3,#dee1a9,#dcdb9f,#dad695,#d8d08b,#d5c981,#d3c377,#d1bd6d,#d0b762,#ceb157,#ccab4d,#cba542,#c99f38,#c7992d,#c69323,#c48d18,#c3870d,#c28204,#c38104,#c48004)"></i>
<i style="top:353px;left:86px;width:388px;background:linear-gradient(90deg,#008ba5,#008ba5,#018da4,#0e94a8,#1b9aab,#27a1af,#34a7b3,#40adb6,#4cb4ba,#58babe,#64c0c1,#70c6c5,#7cccc8,#87d2cb,#92d7cf,#9dddd2,#a8e2d5,#b3e7d8,#bdecdb,#c6f0dd,#cff5df,#d7f9e1,#dffce3,#e4fee3,#e5fdde,#e5fad7,#e5f5cf,#e3f0c7,#e2ebbe,#e0e6b4,#dfe1aa,#dddba0,#dad596,#d8cf8c,#d6c982,#d4c377,#d2bd6d,#d1b762,#cfb158,#cdab4d,#cca543,#ca9f38,#c9992e,#c79323,#c58d18,#c4870e,#c38104,#c48004,#c57f04)"></i>
<i style="top:355px;left:86px;width:390px;background:linear-gradient(90deg,#008aa6,#008ba5,#018ca5,#0d92a8,#1a99ac,#269fb0,#32a5b3,#3eacb7,#4ab2ba,#56b8be,#62bec1,#6ec4c5,#79cac8,#84d0cb,#90d5cf,#9adbd2,#a5e0d5,#b0e5d8,#baeadb,#c4eedd,#cdf3e0,#d5f7e2,#ddfbe3,#e4fde5,#e6fde2,#e7fcdc,#e6f8d5,#e5f3cd,#e4eec4,#e2e9bb,#e1e4b1,#dfdea7,#ddd99e,#dbd394,#d9cd8a,#d6c680,#d5c175,#d3bb6b,#d1b561,#d0af56,#ceaa4c,#cda442,#cb9e37,#c9982d,#c89223,#c68c18,#c5860e,#c48004,#c57f04,#c67e04)"></i>
<i style="top:357px;left:86px;width:392px;background:linear-gradient(90deg,#0089a7,#008aa6,#008ba6,#0d91a9,#1998ad,#269eb0,#32a4b4,#3eabb7,#4bb1bb,#56b7be,#62bdc2,#6ec3c5,#79c9c9,#85cfcc,#90d5d0,#9bdad3,#a6e0d6,#b0e5d9,#bbeadc,#c4eede,#cef2e1,#d6f7e3,#defbe5,#e5fde6,#e8fee4,#e8fcde,#e7f8d6,#e6f3ce,#e5eec5,#e3e9bc,#e2e4b2,#e0dea8,#ded89f,#dbd295,#d9cc8b,#d7c681,#d6c076,#d4bb6c,#d2b562,#d1af57,#cfa94d,#cea342,#cc9d38,#cb972e,#c99123,#c88b19,#c6850e,#c57f04,#c67e04,#c77d03)"></i>
<i style="top:359px;left:87px;width:393px;background:linear-gradient(90deg,#0088a8,#0089a7,#018ba7,#0e91aa,#1b98ae,#279eb1,#33a4b5,#40abb9,#4cb1bc,#58b7c0,#64bdc3,#6fc3c7,#7bc9ca,#86cfcd,#91d5d1,#9ddad4,#a7e0d7,#b2e5da,#bceadd,#c6eee0,#cff3e2,#d8f7e4,#dffbe6,#e6fde8,#e9fee5,#e9fbde,#e8f7d7,#e7f2cf,#e6edc6,#e4e8bc,#e3e3b3,#e1dda9,#ded89f,#dcd295,#dacb8b,#d8c681,#d7c077,#d5ba6c,#d3b462,#d2af58,#d0a94d,#cfa343,#cd9d38,#cc972e,#ca9124,#c98b19,#c8850f,#c67e04,#c77d03,#c87c03)"></i>
<i style="top:361px;left:87px;width:395px;background:linear-gradient(90deg,#0088a8,#0088a8,#0189a7,#0e90ab,#1b97af,#279db2,#33a4b6,#40aab9,#4cb0bd,#58b7c0,#64bdc4,#70c3c7,#7bc9cb,#87cfce,#92d4d2,#9ddad5,#a8dfd8,#b2e5db,#bdeade,#c7eee1,#d0f3e3,#d9f7e5,#e0fbe7,#e7fde9,#eafee6,#eafbe0,#e9f7d8,#e8f2d0,#e7edc7,#e5e8bd,#e3e3b4,#e1ddaa,#dfd7a0,#ddd196,#dbcb8c,#dac682,#d8c077,#d6ba6d,#d5b463,#d3ae58,#d1a84e,#d0a244,#ce9c39,#cd962f,#cb9024,#ca8a1a,#c9840f,#c87e04,#c97c03,#ca7b03)"></i>
<i style="top:363px;left:87px;width:397px;background:linear-gradient(90deg,#0087a9,#0087a9,#0088a8,#0d8fac,#1995af,#269cb3,#32a2b6,#3ea8ba,#4aafbd,#56b5c1,#62bbc4,#6dc1c7,#79c7cb,#84cdce,#8fd2d1,#9ad8d5,#a5ddd8,#b0e3db,#bae8de,#c4ece1,#cdf1e3,#d6f5e6,#def9e8,#e6fcea,#ebfee9,#ebfde4,#ebf9dd,#eaf5d6,#e9f0cd,#e7ebc4,#e6e6ba,#e4e0b1,#e1dba7,#dfd59e,#ddcf94,#dcc98a,#dac480,#d8be76,#d7b86b,#d5b261,#d4ad57,#d2a74d,#d1a143,#cf9b38,#ce952e,#cd8f24,#cc8919,#ca830f,#c97c04,#ca7b03,#cb7a03)"></i>
<i style="top:365px;left:88px;width:398px;background:linear-gradient(90deg,#0186aa,#0086aa,#0288a9,#0e8fad,#1b95b0,#279cb4,#33a2b7,#3fa8bb,#4bafbe,#57b5c2,#63bbc5,#6fc1c9,#7ac7cc,#85cdcf,#91d2d3,#9cd8d6,#a7ddd9,#b1e3dc,#bbe8df,#c5ede2,#cff1e5,#d8f5e7,#e0fae9,#e7fdeb,#ecfeea,#ecfde5,#ecf9de,#ebf4d6,#eaefcd,#e8ebc4,#e6e5bb,#e4e0b2,#e2daa8,#e0d49e,#dece94,#ddc98a,#dbc380,#d9bd76,#d8b86c,#d6b262,#d5ac57,#d3a64d,#d2a043,#d19a39,#cf942e,#ce8e24,#cd8819,#cc820f,#cb7c05,#cb7a03,#cc7903)"></i>
<i style="top:367px;left:88px;width:400px;background:linear-gradient(90deg,#0185ab,#0185ab,#0287aa,#0e8eae,#1a94b1,#279bb5,#33a1b8,#3fa8bc,#4baebf,#57b4c3,#63bac6,#6fc0c9,#7bc6cd,#86ccd0,#91d2d3,#9cd7d7,#a7ddda,#b2e2dd,#bce8e0,#c6ece3,#d0f1e6,#d9f5e8,#e1f9ea,#e8fdec,#edfeec,#eefde6,#edf9df,#ecf4d7,#ebefce,#e9eac5,#e7e5bc,#e5dfb3,#e3daa9,#e1d49f,#dfce95,#dec98b,#dcc381,#dbbd77,#d9b76c,#d8b262,#d6ac58,#d5a64e,#d3a044,#d29a39,#d1942f,#d08e24,#ce871a,#cd810f,#cc7b05,#cd7903,#cd7802)"></i>
<i style="top:369px;left:88px;width:402px;background:linear-gradient(90deg,#0184ac,#0184ac,#0286ab,#0e8caf,#1b93b2,#279ab5,#33a0b9,#3fa7bc,#4cadc0,#58b3c3,#63bac7,#6fc0ca,#7bc6ce,#86ccd1,#92d1d4,#9dd7d8,#a8dddb,#b2e2de,#bde7e1,#c7ece4,#d1f1e7,#daf5e9,#e2f9eb,#e9fded,#eefeed,#effde8,#eef9e0,#edf4d8,#ecefcf,#eaeac6,#e8e5bd,#e6dfb4,#e4d9aa,#e2d4a0,#e0ce96,#dfc88c,#ddc382,#dcbd77,#dab76d,#d9b163,#d7ab59,#d6a54f,#d59f44,#d3993a,#d2932f,#d18d25,#d0871a,#cf8010,#ce7a05,#ce7802,#cf7702)"></i>
<i style="top:371px;left:89px;width:403px;background:linear-gradient(90deg,#0283ad,#0183ad,#0485ad,#108cb0,#1c93b3,#289ab7,#34a0ba,#41a7be,#4dadc1,#59b3c5,#65bac8,#71c0cb,#7cc6cf,#88ccd2,#93d1d5,#9ed7d9,#a9dddc,#b4e2df,#bee7e2,#c8ece5,#d2f1e8,#dbf5ea,#e4f9ec,#ebfdee,#f0feee,#f0fce8,#eff8e1,#eef3d9,#ecefd0,#ebeac7,#e9e4be,#e7deb4,#e5d9aa,#e3d3a0,#e1ce96,#e0c88c,#dec282,#ddbc78,#dbb76e,#dab163,#d8ab59,#d7a54f,#d69f44,#d5983a,#d49230,#d28c25,#d1861b,#d07f10,#cf7906,#cf7702,#d07602)"></i>
<i style="top:373px;left:89px;width:406px;background:linear-gradient(90deg,#0282ae,#0282ae,#0384ad,#0f8bb1,#1c91b4,#2898b7,#339ebb,#3fa5be,#4babc1,#57b2c5,#63b8c8,#6fbecc,#7ac4cf,#85cad2,#91cfd5,#9cd5d9,#a7dbdc,#b1e0df,#bce5e2,#c6eae5,#cfefe8,#d9f4eb,#e2f8ed,#e9fcee,#effef0,#f1fdec,#f1fae6,#eff5de,#eef1d5,#edeccd,#ebe7c4,#e8e1ba,#e7dcb0,#e5d6a7,#e3d19d,#e2cb93,#e0c589,#dfc07f,#ddba75,#dcb46b,#dbae61,#d9a857,#d8a24d,#d79c42,#d69638,#d5902e,#d48a24,#d38419,#d27e0f,#d07704,#d17502,#d27502)"></i>
<i style="top:375px;left:89px;width:408px;background:linear-gradient(90deg,#0281af,#0281af,#0383ae,#108ab2,#1c90b5,#2897b8,#349ebc,#40a4bf,#4baac2,#57b1c6,#63b7c9,#6fbdcc,#7ac3d0,#86c9d3,#91cfd6,#9cd5da,#a7dadd,#b2e0e0,#bce5e3,#c6eae6,#d0efe9,#daf3ec,#e2f8ee,#eafcf0,#f0fef1,#f2feee,#f2fae7,#f0f5df,#eff1d6,#edecce,#ebe7c4,#e9e1bb,#e8dbb1,#e6d6a7,#e4d09e,#e3cb94,#e1c58a,#e0bf80,#deba76,#ddb46c,#dcae62,#dba857,#daa24d,#d89c43,#d79638,#d68f2e,#d58924,#d4831a,#d37d0f,#d27705,#d27402,#d37402)"></i>
<i style="top:377px;left:90px;width:409px;background:linear-gradient(90deg,#0280b0,#0280b0,#0582b0,#1189b3,#1d90b7,#2997ba,#359dbd,#41a4c0,#4daac4,#59b1c7,#64b7ca,#70bdcd,#7cc3d1,#87c9d4,#92cfd7,#9ed5db,#a8dade,#b3e0e1,#bee5e4,#c8eae7,#d2efea,#dbf4ed,#e4f8ef,#ebfcf1,#f2fef2,#f3fdee,#f2fae8,#f1f5e0,#f0f1d7,#eeecce,#ece6c5,#eae0bb,#e8dbb2,#e7d6a8,#e5d09e,#e4ca94,#e2c58a,#e1bf80,#e0b976,#dfb36c,#ddad62,#dca758,#dba14d,#da9b43,#d99539,#d88f2f,#d78824,#d6821a,#d57c10,#d47605,#d47301,#d47201)"></i>
<i style="top:379px;left:90px;width:411px;background:linear-gradient(90deg,#037fb1,#037fb1,#0581b1,#1188b4,#1d8fb7,#2a96bb,#369cbe,#42a3c1,#4da9c5,#59b0c8,#65b6cb,#70bcce,#7cc3d2,#88c9d5,#93ced8,#9ed4db,#a9dadf,#b4dfe2,#bee5e5,#c8eae8,#d2efeb,#dcf4ee,#e5f8f0,#ecfcf2,#f3fef3,#f4fdef,#f3fae9,#f2f5e1,#f1f0d8,#efebcf,#ede6c6,#ebe0bc,#e9dbb2,#e8d5a9,#e6d09f,#e5ca95,#e4c48b,#e2bf81,#e1b977,#e0b36d,#dfac62,#dea658,#dca04e,#db9a44,#da9439,#d98e2f,#d88825,#d7811a,#d67b10,#d57506,#d57201,#d67101)"></i>
<i style="top:381px;left:90px;width:413px;background:linear-gradient(90deg,#037eb2,#037eb2,#0480b2,#1186b5,#1d8db8,#2994bb,#349abf,#40a1c2,#4ca7c5,#58aec8,#63b4cb,#6ebacf,#7ac0d2,#85c6d5,#90ccd8,#9bd2db,#a6d8de,#b1dde2,#bbe3e5,#c5e8e8,#cfedeb,#d9f2ed,#e2f6f0,#eafaf2,#f1fdf4,#f5fef3,#f5fced,#f4f7e6,#f3f3de,#f1eed5,#efe9cc,#ede3c3,#ebdeb9,#ead9b0,#e8d3a6,#e7ce9c,#e6c893,#e4c289,#e3bc7f,#e2b675,#e1b16b,#e0ab61,#dfa557,#de9f4d,#dd9943,#dc9239,#db8c2e,#da8624,#d9801a,#d87a10,#d77406,#d77001,#d77001)"></i>
<i style="top:383px;left:91px;width:414px;background:linear-gradient(90deg,#037db3,#037db3,#067fb3,#1286b6,#1e8dba,#2a93bd,#369ac0,#42a1c3,#4ea7c6,#59aeca,#65b4cd,#70bad0,#7bc0d3,#86c6d6,#91ccd9,#9dd2dc,#a7d8e0,#b2dde3,#bde3e6,#c7e8e9,#d1edec,#daf2ef,#e3f6f1,#ecfaf3,#f2fef5,#f6fef4,#f6fbee,#f5f7e6,#f3f3de,#f1edd6,#efe8cc,#eee3c3,#ecdeb9,#ebd8b0,#e9d3a6,#e8cd9d,#e7c793,#e6c189,#e5bc7f,#e3b675,#e2b06b,#e1aa61,#e0a457,#df9e4d,#de9843,#dd9239,#dc8b2f,#db8525,#da7f1b,#d97910,#d87306,#d86f01,#d96f01)"></i>
<i style="top:385px;left:91px;width:416px;background:linear-gradient(90deg,#047cb4,#037cb4,#067eb4,#1285b7,#1e8cbb,#2a92be,#3699c1,#42a0c4,#4ea6c7,#59adcb,#65b3ce,#70b9d1,#7cc0d4,#87c6d7,#92ccda,#9dd2dd,#a8d7e0,#b3dde3,#bde2e7,#c7e7e9,#d1edec,#dbf1ef,#e4f6f2,#ecfaf4,#f3fef6,#f7fef5,#f7fbef,#f6f7e7,#f4f2df,#f2edd6,#f0e8cd,#efe3c4,#edddba,#ecd8b1,#ead2a7,#e9cd9d,#e8c793,#e7c18a,#e6bb80,#e5b576,#e4af6c,#e3a962,#e2a358,#e19d4e,#e09744,#df913a,#de8b30,#dd8525,#dc7e1b,#db7811,#da7206,#da6e00,#da6d00)"></i>
<i style="top:387px;left:91px;width:418px;background:linear-gradient(90deg,#047bb5,#047bb5,#067db5,#1284b8,#1f8bbc,#2b91bf,#3798c2,#429fc5,#4ea5c8,#5aaccc,#65b2cf,#71b8d2,#7cbfd5,#87c5d8,#92cbdb,#9dd1de,#a8d7e1,#b3dce4,#bde2e7,#c8e7ea,#d2eced,#dbf1f0,#e5f6f3,#edfaf5,#f4fdf7,#f8fef6,#f8fbf0,#f6f7e8,#f5f2e0,#f3edd7,#f1e8ce,#f0e2c4,#eeddbb,#edd8b1,#ecd2a8,#ebcc9e,#eac694,#e8c08a,#e7ba80,#e6b576,#e5af6d,#e4a963,#e3a259,#e29c4f,#e29645,#e0903a,#e08a30,#df8426,#de7d1c,#dd7711,#dc7107,#db6d00,#dc6c00)"></i>
<i style="top:389px;left:92px;width:419px;background:linear-gradient(90deg,#047ab6,#047ab6,#087db6,#1484ba,#208abd,#2c91c0,#3898c3,#449ec7,#50a5ca,#5babcd,#67b2d0,#72b8d3,#7ebed6,#89c5d9,#94cbdc,#9fd1df,#aad7e2,#b4dce5,#bfe2e8,#c9e7eb,#d3ecee,#ddf1f1,#e6f6f4,#eefaf6,#f6fef8,#f9fef7,#f8fbf1,#f7f7e9,#f5f2e0,#f4ecd7,#f2e7ce,#f1e2c5,#efddbb,#eed7b2,#edd1a8,#eccb9e,#ebc594,#eac08b,#e9ba81,#e8b477,#e7ae6d,#e6a863,#e5a259,#e49c4f,#e39545,#e28f3b,#e18931,#e08326,#df7d1c,#de7612,#dd7008,#dd6c00,#dd6b00)"></i>
<i style="top:391px;left:92px;width:421px;background:linear-gradient(90deg,#0479b7,#0479b7,#077bb7,#1382ba,#1f89be,#2b8fc1,#3796c4,#439cc7,#4ea3ca,#5aa9cd,#65b0d0,#71b6d4,#7cbcd7,#87c2da,#92c8dd,#9ccedf,#a7d4e2,#b2dae5,#bce0e8,#c6e5eb,#d0eaee,#daeff1,#e3f4f3,#ecf8f6,#f4fcf8,#fafffa,#fafdf5,#f9f9ee,#f7f4e6,#f5efdd,#f4ead4,#f2e5cb,#f1dfc2,#f0dab8,#efd4af,#eecfa5,#edc99c,#ecc392,#ebbd89,#eab87f,#e9b275,#e8ac6c,#e7a662,#e6a058,#e69a4e,#e59444,#e48e3a,#e38830,#e28226,#e17c1c,#df7612,#de7008,#de6b00,#de6b00)"></i>
<i style="top:393px;left:93px;width:422px;background:linear-gradient(90deg,#0578b8,#0578b8,#097bb9,#1582bc,#2188bf,#2d8fc2,#3996c5,#449cc9,#50a3cc,#5ba9cf,#67afd2,#72b6d5,#7dbcd8,#88c2db,#93c8de,#9ecee1,#a9d4e4,#b3dae6,#bddfe9,#c7e5ec,#d1eaef,#dbeff2,#e4f4f4,#edf8f7,#f5fcf9,#fbfffb,#fbfcf6,#f9f8ef,#f7f4e6,#f6efdd,#f5ead4,#f3e4cb,#f2dfc2,#f1d9b8,#f0d4af,#efcea6,#eec89c,#edc293,#edbd89,#ecb780,#ebb176,#eaab6c,#e9a562,#e89f58,#e7994f,#e69345,#e58d3b,#e48731,#e38127,#e27b1d,#e17513,#df6f08,#de6a00,#df6a00)"></i>
<i style="top:395px;left:93px;width:424px;background:linear-gradient(90deg,#0577b9,#0577b9,#097aba,#1580bd,#2187c0,#2d8ec3,#3994c6,#449bc9,#50a2cd,#5ca8d0,#67afd3,#73b5d6,#7ebbd9,#89c1dc,#94c7df,#9fcde2,#a9d3e5,#b4d9e7,#bedfea,#c8e4ed,#d2eaf0,#dbeff2,#e5f4f5,#edf8f8,#f5fcfa,#fcfffc,#fbfcf7,#faf8ef,#f8f3e7,#f7eede,#f6e9d5,#f5e4cc,#f4dec2,#f3d9b9,#f2d3b0,#f1cda6,#f0c89d,#efc294,#eebc8a,#edb680,#ecb077,#ebab6d,#eaa563,#e99f59,#e89950,#e79346,#e68d3c,#e58732,#e48128,#e37b1e,#e27513,#e06f09,#e06900,#e06900)"></i>
<i style="top:397px;left:93px;width:426px;background:linear-gradient(90deg,#0576ba,#0576ba,#0978ba,#157fbe,#2186c1,#2d8dc4,#3993c7,#459aca,#50a1ce,#5ca7d1,#68aed4,#73b4d7,#7ebada,#89c0dd,#94c7e0,#9fcde3,#aad3e6,#b4d8e8,#bfdeeb,#c9e4ee,#d2e9f1,#dceef3,#e5f3f6,#eef8f8,#f6fcfb,#fcfffd,#fcfcf7,#faf8f0,#f9f3e7,#f8eede,#f7e9d5,#f6e3cc,#f5dec3,#f4d8ba,#f3d3b1,#f2cda7,#f1c79e,#f1c194,#efbc8b,#eeb681,#edb078,#ecab6e,#eba564,#ea9f5a,#e99951,#e89347,#e78d3d,#e68732,#e58128,#e47b1e,#e37514,#e26f0a,#e06900,#e16900)"></i>
<i style="top:399px;left:94px;width:427px;background:linear-gradient(90deg,#0675bb,#0675bb,#0a78bc,#167fbf,#2386c2,#2f8cc5,#3a93c9,#469acc,#52a0cf,#5ea7d2,#69add5,#74b4d8,#80badb,#8bc0de,#96c6e1,#a1cce4,#abd2e7,#b6d8ea,#c0deec,#cae4ef,#d4e9f2,#ddeef4,#e6f3f7,#eff8f9,#f7fcfc,#fdfffd,#fdfcf8,#fbf7f0,#faf2e7,#f9edde,#f8e8d5,#f7e3cd,#f6ddc4,#f6d8ba,#f5d2b1,#f4cda8,#f3c79f,#f2c195,#f0bc8c,#efb682,#eeb078,#edaa6f,#eca465,#eb9f5b,#ea9951,#e99347,#e88d3d,#e78733,#e68129,#e57b1f,#e47515,#e36e0b,#e26800,#e26800)"></i>
<i style="top:401px;left:94px;width:429px;background:linear-gradient(90deg,#0674bc,#0674bc,#0a77bd,#167dc0,#2284c3,#2e8bc6,#3991c9,#4598cc,#519ed0,#5ca5d3,#67abd6,#73b2d9,#7eb8db,#89bede,#93c4e1,#9ecae4,#a9d0e7,#b3d6ea,#bddbec,#c7e1ef,#d1e6f2,#daecf4,#e3f1f7,#ecf6f9,#f4fafb,#fcfefd,#fefefc,#fcf9f4,#fcf5ec,#fbf0e4,#faebdb,#f9e5d3,#f8e0ca,#f7dbc1,#f6d6b8,#f5d0af,#f4cba6,#f3c59d,#f2c094,#f1ba8a,#f0b481,#efaf77,#eea96e,#eda364,#ec9d5a,#eb9851,#ea9247,#e98c3d,#e88633,#e78029,#e67a1f,#e57415,#e46e0b,#e36801,#e36700)"></i>
<i style="top:403px;left:94px;width:431px;background:linear-gradient(90deg,#0673bd,#0673bd,#0a75be,#167cc1,#2283c4,#2e8ac7,#3a90ca,#4597cd,#519dd1,#5ca4d4,#68aad7,#73b1da,#7eb7dd,#89bddf,#94c3e2,#9fc9e5,#a9cfe8,#b4d5eb,#bedbed,#c8e0f0,#d1e6f3,#dbebf5,#e4f0f8,#edf5fa,#f5fafc,#fcfefe,#fefdfc,#fef9f5,#fdf4ed,#fcf0e5,#fbebdc,#fae5d4,#f9e0cb,#f8dbc2,#f7d6b9,#f6d0b0,#f5cba7,#f4c59e,#f3c095,#f2ba8b,#f1b482,#f0af78,#efa96f,#eea365,#ed9d5b,#ec9752,#eb9248,#ea8c3e,#e98634,#e8802a,#e77a20,#e67416,#e56e0c,#e46802,#e46600)"></i>
<i style="top:405px;left:95px;width:433px;background:linear-gradient(90deg,#0772be,#0772be,#0b75bf,#177cc2,#2383c5,#2f89c9,#3b90cc,#4797cf,#539dd2,#5ea4d5,#6aaad8,#75b0db,#80b7de,#8bbde1,#96c3e4,#a1c9e6,#abcfe9,#b5d5ec,#c0dbef,#c9e0f1,#d3e6f4,#ddebf6,#e6f0f9,#eef5fb,#f6fafd,#fdfeff,#fffdfc,#fef8f4,#fef4ed,#fdefe5,#fceadc,#fbe5d4,#fae0cb,#f9dac3,#f8d5ba,#f7d0b1,#f6caa7,#f5c59e,#f4bf95,#f3b98b,#f2b482,#f1ae78,#f0a86f,#efa265,#ee9c5b,#ed9751,#ec9148,#eb8b3e,#ea8534,#e97f2a,#e87920,#e77316,#e66d0c,#e56601,#e56600)"></i>
<i style="top:407px;left:95px;width:435px;background:linear-gradient(90deg,#0771bf,#0771bf,#0b74c0,#177bc3,#2481c6,#3088ca,#3b8fcd,#4795d0,#539cd3,#5ea3d6,#6aa9d9,#75afdc,#80b6df,#8bbce2,#96c2e5,#a1c8e7,#acceea,#b6d4ed,#c0daf0,#cae0f2,#d4e5f5,#ddeaf7,#e6f0fa,#eff4fc,#f6f9fe,#fdfdff,#fefbfa,#fff8f5,#fff4ee,#feefe6,#fdeade,#fce5d5,#fbdfcc,#fadac4,#fad5bb,#f9d0b2,#f8caa9,#f7c49f,#f6bf96,#f5b98d,#f4b483,#f3ae7a,#f2a870,#f1a266,#f09c5d,#ef9653,#ee9049,#ed8a3f,#eb8435,#eb7f2b,#e97821,#e87216,#e76c0d,#e66602,#e66500)"></i>
<i style="top:409px;left:96px;width:436px;background:linear-gradient(90deg,#0770c0,#0770c0,#0d73c1,#197ac5,#2581c8,#3188cb,#3d8ece,#4995d1,#549cd4,#60a2d7,#6ba9da,#77afdd,#82b6e0,#8dbce3,#98c2e6,#a3c8e9,#adceeb,#b7d4ee,#c2daf1,#cbdff3,#d5e5f6,#deeaf8,#e7effb,#f0f4fc,#f7f8fe,#fcfafe,#fdf8f9,#fef6f3,#fff3ee,#feefe7,#fee9de,#fee4d6,#fddfcd,#fcdac4,#fbd4bb,#facfb2,#f9c9a9,#f8c4a0,#f7be97,#f6b98d,#f5b384,#f4ad7a,#f3a871,#f2a267,#f19c5d,#f09653,#ef904a,#ee8a40,#ed8436,#ec7e2c,#eb7822,#ea7217,#e96c0d,#e86603,#e76400)"></i>
<i style="top:411px;left:96px;width:438px;background:linear-gradient(90deg,#076fc1,#076fc1,#0c72c2,#1879c5,#247fc9,#3086cc,#3c8dcf,#4793d2,#539ad5,#5ea0d8,#6aa7db,#75adde,#80b3e1,#8bb9e3,#95c0e6,#a0c6e9,#aacbec,#b5d1ee,#bfd7f1,#c9ddf4,#d2e2f6,#dbe7f8,#e4edfa,#ecf1fc,#f4f6fe,#fbf9ff,#fcf6fa,#fdf4f4,#fef2ef,#feefea,#ffede5,#fee8dc,#fee2d3,#feddca,#fdd7c2,#fcd2b9,#fbcdb0,#fac7a7,#f9c29e,#f8bc95,#f7b78c,#f6b182,#f5ac79,#f4a66f,#f3a066,#f29b5c,#f19553,#f08f49,#ef893f,#ee8336,#ed7d2c,#ec7722,#eb7118,#ea6b0e,#e96504,#e86300)"></i>
<i style="top:413px;left:96px;width:440px;background:linear-gradient(90deg,#086ec2,#086ec2,#0c70c3,#1877c6,#247eca,#3085cd,#3c8cd0,#4892d3,#5399d6,#5f9fd9,#6aa6dc,#75acdf,#80b2e2,#8bb8e4,#96bfe7,#a0c5ea,#abcbed,#b5d0ef,#bfd6f2,#c9dcf4,#d3e1f7,#dce7f9,#e4ecfb,#edf1fd,#f4f5ff,#faf7fe,#fbf4f9,#fcf2f3,#fdefed,#fdede8,#feeae3,#ffe8de,#fee3d5,#feddcc,#fdd7c3,#fdd2ba,#fdccb1,#fcc7a8,#fbc19f,#fabc96,#f9b68c,#f8b183,#f7ab7a,#f6a570,#f5a067,#f49a5d,#f39453,#f18e4a,#f08840,#ef8336,#ee7d2c,#ed7723,#ec7119,#eb6b0f,#ea6505,#ea6200)"></i>
<i style="top:415px;left:97px;width:441px;background:linear-gradient(90deg,#086dc3,#086dc3,#0e70c5,#1a77c8,#267ecb,#3284ce,#3e8bd1,#4992d4,#5598d7,#609fda,#6ba5dd,#77ace0,#82b2e3,#8db8e6,#97bee9,#a2c4eb,#accaee,#b7d0f1,#c1d6f3,#cadcf5,#d4e1f8,#dde6fa,#e5ebfc,#edf0fe,#f5f5ff,#f9f4fd,#faf1f7,#fbeff1,#fceceb,#fdeae6,#fde7e1,#fee5db,#ffe3d6,#feddcd,#fed8c4,#fdd2bb,#fdccb2,#fdc6a8,#fcc09f,#fbbb96,#fab58d,#f9b083,#f8aa7a,#f7a470,#f69f67,#f5995d,#f49354,#f38d4a,#f28840,#f18236,#f07c2d,#ef7623,#ee7019,#ed6a0f,#ec6405,#eb6100)"></i>
<i style="top:417px;left:97px;width:443px;background:linear-gradient(90deg,#086cc4,#086cc4,#0e6fc6,#1a76c9,#267dcc,#3283cf,#3e8ad2,#4991d5,#5597d8,#609edb,#6ca4de,#77abe1,#82b1e4,#8db7e7,#98bdea,#a2c3ec,#adc9ef,#b7cff1,#c1d5f4,#cbdbf6,#d4e0f8,#dde6fa,#e6ebfc,#eeeffe,#f5f4ff,#f7f1fb,#f9eef6,#faecf0,#fbeaea,#fce7e4,#fce5df,#fde2d9,#fedfd3,#ffddce,#fed8c5,#fed3bc,#fdcdb3,#fdc7aa,#fdc1a0,#fcbb97,#fcb48d,#fbaf84,#faa97a,#f9a471,#f89e67,#f7985e,#f69354,#f48d4a,#f38741,#f28137,#f17b2d,#f07523,#ef6f19,#ee690f,#ed6305,#ec6000)"></i>
<i style="top:419px;left:98px;width:444px;background:linear-gradient(90deg,#096bc5,#096bc5,#0f6ec7,#1b75ca,#277ccd,#3282d0,#3e89d3,#498fd6,#5596d9,#609cdc,#6ba3df,#76a9e2,#81afe5,#8cb5e7,#97bbea,#a1c1ed,#abc7ef,#b5cdf2,#bfd3f4,#c9d9f6,#d2def8,#dbe3fa,#e3e8fc,#ebedfe,#f2f1ff,#f6f0fc,#f7edf7,#f8eaf1,#f9e8eb,#fae5e5,#fbe3df,#fce0da,#fdded4,#fddbcf,#fed9c9,#ffd6c4,#fed1ba,#fdcbb1,#fdc5a7,#fdbf9e,#fcb995,#fcb38c,#fcad82,#fba779,#faa16f,#f99c66,#f8965c,#f79153,#f68b49,#f58540,#f47f36,#f37a2c,#f27422,#f16e19,#f0680f,#ee6205,#ee5f00)"></i>
<i style="top:421px;left:98px;width:446px;background:linear-gradient(90deg,#096ac6,#096ac6,#0f6dc8,#1b74cb,#277ace,#3281d1,#3e88d4,#4a8ed7,#5595da,#609bdd,#6ca2e0,#77a8e3,#82aee6,#8cb4e8,#97bbeb,#a1c1ee,#acc7f0,#b6cdf2,#bfd2f4,#c9d8f7,#d2ddf9,#dbe2fb,#e3e7fd,#ebecff,#f3f0ff,#f5edfb,#f6eaf5,#f7e7ef,#f8e5e9,#f9e3e3,#fae0dd,#fbddd8,#fcdbd2,#fcd8cd,#fdd6c7,#fed3c1,#ffd1bd,#fecbb2,#fdc6a9,#fdc09f,#fcba96,#fcb48d,#fcae83,#fba77a,#fba170,#fb9b66,#fa955d,#f99053,#f88a49,#f78440,#f57e36,#f4792c,#f37323,#f26d19,#f1670f,#f06105,#ef5e00)"></i>
<i style="top:423px;left:98px;width:448px;background:linear-gradient(90deg,#0969c7,#0969c7,#0f6bc9,#1b72cc,#2779cf,#3280d2,#3e86d5,#4a8dd8,#5594db,#619ade,#6ca1e1,#77a7e4,#82ade7,#8db4e9,#97baec,#a2c0ee,#acc6f1,#b6ccf3,#c0d2f5,#c9d7f7,#d3dcfa,#dbe2fc,#e3e6fe,#ebebff,#f2eeff,#f3ebfa,#f5e7f4,#f6e5ee,#f7e2e8,#f8e0e1,#f9dddc,#fadbd6,#fbd8d0,#fcd5cb,#fcd3c5,#fdd0bf,#fecdb9,#ffcbb5,#fec6aa,#fdc0a1,#fdba97,#fcb48e,#fcae84,#fca87a,#fba271,#fb9b67,#fb955e,#fa8f54,#fa894a,#f88340,#f77d36,#f6782d,#f57223,#f46c19,#f3660f,#f26005,#f15d00)"></i>
<i style="top:425px;left:99px;width:449px;background:linear-gradient(90deg,#0a68c8,#0a68c8,#106bca,#1c72cd,#2879d1,#347fd4,#4086d7,#4b8dda,#5793dd,#629ae0,#6da0e2,#78a7e5,#83ade8,#8eb3ea,#99baed,#a3c0ef,#adc6f1,#b7ccf4,#c1d1f6,#cad7f8,#d4dcfb,#dce1fc,#e4e6fe,#ebebff,#f1ebfd,#f2e8f8,#f4e4f2,#f5e2ec,#f6dfe6,#f7dde0,#f8dad9,#f9d7d4,#fad5ce,#fbd2c8,#fbcfc2,#fccdbd,#fdcab7,#fec7b1,#ffc5ac,#fec0a2,#fdba98,#fdb48f,#fcae85,#fca87b,#fba272,#fb9c68,#fb955e,#fa8f54,#fa894b,#fa8240,#f97c37,#f8762d,#f77023,#f66b19,#f4650f,#f35f05,#f25c00)"></i>
<i style="top:427px;left:99px;width:451px;background:linear-gradient(90deg,#0a67c9,#0a66ca,#106acb,#1c71ce,#2877d2,#347ed5,#4085d8,#4b8cdb,#5792de,#6299e1,#6d9fe3,#79a6e6,#83ace8,#8eb2eb,#99b9ed,#a3bff0,#adc5f2,#b7cbf4,#c1d0f7,#cbd6f9,#d4dbfb,#dce0fd,#e4e5fe,#eceaff,#f0e9fc,#f1e5f7,#f3e2f1,#f4dfeb,#f5dce4,#f6dade,#f7d7d7,#f8d5d2,#f9d2cc,#facfc6,#faccc0,#fbcaba,#fcc7b5,#fdc4af,#fec1a9,#ffbfa3,#febb9a,#fdb590,#fcaf86,#fca87c,#fca273,#fb9c69,#fb965f,#fb8f55,#fa894b,#fa8341,#fa7c37,#f9762d,#f96f23,#f86919,#f6640f,#f55e05,#f45b00)"></i>
<i style="top:429px;left:100px;width:452px;background:linear-gradient(90deg,#0a66ca,#0a65cb,#1269cd,#1e70d0,#2a77d3,#367ed6,#4184d9,#4d8bdc,#5892df,#6498e2,#6f9fe4,#7aa5e7,#85ace9,#8fb2ec,#9ab8ee,#a4bff1,#afc5f3,#b9caf5,#c2d0f8,#ccd5fa,#d4dbfc,#dddffe,#e5e5ff,#ede8ff,#efe5fb,#f0e2f5,#f2dfef,#f3dce9,#f4d9e2,#f5d7dc,#f6d4d5,#f7d1cf,#f8cfca,#f9ccc4,#f9c9be,#fac6b8,#fbc4b2,#fcc1ac,#fdbea6,#febba0,#ffb99b,#fdb592,#fdaf87,#fca97d,#fca274,#fc9c6a,#fb9660,#fb8f56,#fa894c,#fa8342,#fa7c38,#f9762e,#f96f24,#f9691a,#f86210,#f75c05,#f65900)"></i>
<i style="top:431px;left:100px;width:454px;background:linear-gradient(90deg,#0b65cb,#0b64cc,#1168ce,#1d6ed1,#2975d4,#357cd7,#4082da,#4b89dd,#5790df,#6296e2,#6d9de4,#78a3e7,#83aae9,#8db0ec,#98b6ee,#a2bcf1,#acc2f3,#b6c8f5,#c0cdf8,#c9d3fa,#d1d8fc,#dadcfe,#e1e2ff,#eae6ff,#ede4fc,#eee1f7,#f0ddf1,#f1daea,#f2d7e4,#f3d5de,#f4d2d7,#f5d0d1,#f6cdcb,#f7cac5,#f8c8bf,#f9c5b9,#fac2b4,#fac0ae,#fbbda8,#fcbaa2,#fdb79c,#feb596,#ffb392,#fdae87,#fda87d,#fca173,#fc9b69,#fb955f,#fb8f55,#fb884b,#fa8241,#fa7c38,#fa752e,#f96f24,#f96819,#f96210,#f85b05,#f85800)"></i>
<i style="top:433px;left:101px;width:455px;background:linear-gradient(90deg,#0b64cc,#0b63cd,#1367cf,#1f6ed2,#2a75d5,#367bd8,#4182db,#4d89dd,#5890e0,#6396e3,#6e9de5,#79a3e8,#84a9ea,#8fb0ed,#99b6ef,#a3bcf2,#adc2f4,#b7c7f6,#c1cdf9,#cad2fb,#d2d7fd,#dadcfe,#e2e1ff,#ebe5ff,#ece1fa,#eddef5,#efdaef,#f0d7e9,#f1d4e2,#f2d2dc,#f3cfd5,#f4cdcf,#f5cac8,#f6c7c3,#f7c5bd,#f8c2b7,#f9bfb1,#f9bcab,#fabaa5,#fbb79f,#fcb499,#fdb193,#feae8d,#ffad89,#fda87e,#fda274,#fc9b6a,#fc9560,#fb8f56,#fb894c,#fa8242,#fa7c38,#fa752e,#f96f24,#f9691a,#f96210,#f85c06,#f85800)"></i>
<i style="top:435px;left:101px;width:457px;background:linear-gradient(90deg,#0b63cd,#0b62ce,#1366d0,#1e6dd3,#2a73d6,#367ad9,#4281db,#4d88de,#588fe1,#6395e3,#6e9ce6,#79a2e8,#84a9eb,#8fafed,#99b5f0,#a4bbf2,#aec1f5,#b7c6f7,#c1ccf9,#cad1fb,#d2d6fd,#dadcfe,#e2e0ff,#e9e2fe,#ebdef9,#ecdbf4,#edd7ee,#efd4e7,#f0d1e1,#f1cfda,#f2ccd4,#f3cacd,#f4c7c6,#f5c4c1,#f6c2bb,#f7bfb5,#f8bcaf,#f8b9a9,#f9b6a3,#fab49d,#fbb197,#fcae91,#fdab8a,#fea884,#ffa680,#fda276,#fc9c6b,#fc9561,#fb8f57,#fb894d,#fb8343,#fa7c39,#fa762f,#fa6f25,#f9691b,#f96211,#f95c06,#f85801)"></i>
<i style="top:437px;left:101px;width:460px;background:linear-gradient(90deg,#0b62ce,#0c61cf,#1264d1,#1e6bd4,#2a72d7,#3579d9,#4180dc,#4c86de,#578de1,#6293e4,#6d9ae6,#78a0e9,#82a6eb,#8dadee,#97b3f0,#a1b9f2,#abbef5,#b5c4f7,#bec9f9,#c7cffb,#cfd3fd,#d8d9fe,#dfdeff,#e8e1ff,#e9ddfa,#ead9f5,#ecd6ef,#edd2e8,#eecfe2,#efcddc,#f0cad5,#f1c8ce,#f3c5c8,#f4c3c1,#f4c0bc,#f5bdb6,#f6bab0,#f7b8aa,#f8b5a4,#f9b29e,#faaf98,#faac92,#fbaa8c,#fca786,#fda480,#fea179,#ffa077,#fd9a6a,#fc9460,#fc8e55,#fb884c,#fb8142,#fa7b38,#fa752e,#fa6e24,#f9681a,#f96110,#f95b05,#f85801)"></i>
<i style="top:439px;left:102px;width:461px;background:linear-gradient(90deg,#0c61cf,#0c60d0,#1464d2,#1f6bd5,#2b72d7,#3679da,#427fdd,#4d86df,#588de2,#6393e5,#6e99e7,#79a0ea,#84a6ec,#8eacef,#99b2f1,#a3b8f3,#adbef6,#b6c3f8,#bfc9fa,#c8cefc,#d0d3fe,#d8d9fe,#e1ddff,#e6defd,#e8daf9,#e9d6f3,#ead3ed,#eccfe6,#edcce0,#eecada,#efc7d3,#f0c5cc,#f2c2c6,#f3bfbf,#f3bdb9,#f4bab3,#f5b7ad,#f6b4a7,#f7b2a1,#f8af9b,#f9ac95,#f9a98f,#faa689,#fba383,#fca17d,#fd9e77,#fe9b71,#ff9a6f,#fd9461,#fc8e57,#fc884c,#fb8142,#fb7b38,#fa752e,#fa6e24,#fa681a,#f96110,#f95b06,#f95801)"></i>
<i style="top:441px;left:102px;width:463px;background:linear-gradient(90deg,#0c60d0,#0c5fd1,#1363d3,#1f6ad5,#2b71d8,#3677db,#427edd,#4d85e0,#588ce3,#6392e5,#6e99e8,#799fea,#84a5ed,#8eabef,#99b1f2,#a3b7f4,#adbdf7,#b6c2f9,#bfc8fb,#c8cdfd,#d0d2fe,#d8d8ff,#e1dcff,#e5dbfc,#e6d7f8,#e8d3f2,#e9d0eb,#ebcce5,#ecc9df,#edc7d8,#eec4d1,#efc1cb,#f0bfc4,#f2bcbd,#f2b9b7,#f3b7b1,#f4b4ab,#f5b1a5,#f6ae9f,#f7ab99,#f8a993,#f8a68d,#f9a387,#faa081,#fb9d7a,#fc9a74,#fd976e,#fe9568,#ff9466,#fd8e59,#fc884e,#fb8244,#fb7b39,#fb752f,#fa6e25,#fa681b,#f96110,#f95b06,#f95802)"></i>
<i style="top:443px;left:103px;width:464px;background:linear-gradient(90deg,#0c5fd1,#0d5ed2,#1563d4,#2069d6,#2c70d9,#3877dc,#437ede,#4e85e1,#5a8be4,#6592e6,#7098e9,#7b9feb,#85a5ee,#90abf0,#9ab1f3,#a4b7f5,#aebcf7,#b7c2f9,#c0c7fb,#c8ccfd,#d1d2fe,#d9d7ff,#e2daff,#e4d7fb,#e5d3f6,#e7d0f0,#e8ccea,#e9c9e3,#ebc6dd,#ecc3d6,#edc1cf,#eebec9,#efbcc2,#f0b9bb,#f1b6b5,#f2b3af,#f3b1a9,#f4aea3,#f5ab9d,#f6a896,#f7a590,#f7a28a,#f8a084,#f99d7e,#fa9a78,#fb9771,#fc946b,#fd9165,#fe8e5f,#ff8d5c,#fd8850,#fc8245,#fb7b3a,#fb7530,#fa6f26,#fa681c,#fa6211,#f95b07,#f95802)"></i>
<i style="top:445px;left:103px;width:466px;background:linear-gradient(90deg,#0d5ed2,#0d5dd2,#1561d4,#2068d7,#2c6fda,#3876dc,#437ddf,#4e84e2,#5a8ae4,#6591e7,#7097e9,#7b9eec,#85a4ee,#90aaf1,#9ab0f3,#a4b6f6,#aebbf8,#b7c1fa,#c0c6fc,#c8cbfe,#d0d1fe,#d9d6ff,#e1d9ff,#e3d5fa,#e4d1f5,#e5cdef,#e7cae8,#e8c6e2,#eac3db,#ebc0d4,#ecbece,#edbbc7,#eeb8c0,#efb6b9,#f0b3b2,#f1b0ac,#f2ada6,#f3aba0,#f4a89a,#f5a594,#f6a28e,#f69f88,#f79c82,#f8997b,#f99675,#fa946f,#fb9169,#fc8e62,#fd8b5c,#fe8855,#ff8753,#fd8247,#fc7c3c,#fb7531,#fb6f27,#fa681c,#fa6212,#f95b08,#f95803)"></i>
<i style="top:447px;left:104px;width:467px;background:linear-gradient(90deg,#0d5dd2,#0d5cd3,#1661d5,#2268d8,#2d6fdb,#3976dd,#447de0,#5083e3,#5b8ae5,#6690e8,#7197ea,#7c9ded,#87a3ef,#91a9f2,#9baff4,#a5b5f7,#aebbf9,#b7c0fb,#c0c5fd,#c9cbfe,#d1d0ff,#dad5ff,#e0d5fd,#e1d1f8,#e3cdf3,#e4caed,#e6c6e6,#e7c3e0,#e8c0d9,#e9bdd2,#ebbacc,#ecb8c5,#edb5be,#eeb2b7,#efb0b0,#f0adaa,#f1aaa4,#f2a79e,#f3a498,#f4a192,#f59f8b,#f59c85,#f6997f,#f79679,#f89372,#f9906c,#fa8d66,#fb8a5f,#fc8759,#fd8453,#fe814c,#ff814a,#fd7c3e,#fc7532,#fb6f28,#fb681d,#fa6213,#fa5b08,#f95803)"></i>
<i style="top:449px;left:104px;width:469px;background:linear-gradient(90deg,#0d5cd3,#0d5bd4,#1560d6,#2166d8,#2c6ddb,#3874de,#437be0,#4e81e3,#5a88e6,#658ee8,#6f95eb,#7a9bed,#85a1f0,#8fa7f2,#99adf5,#a3b2f7,#acb8f9,#b5bdfb,#bdc2fd,#c6c8fe,#ceceff,#d7d2ff,#ded4fe,#dfd0f9,#e1ccf4,#e2c8ee,#e4c5e8,#e5c1e1,#e7bedb,#e8bbd4,#e9b9ce,#eab6c7,#ebb3c0,#ecb1b9,#edaeb2,#efabab,#efa9a5,#f0a69f,#f1a399,#f2a093,#f39d8d,#f49a87,#f59781,#f6957b,#f69275,#f78f6e,#f88c68,#f98962,#fa865b,#fb8355,#fc804f,#fd7d48,#fe7a42,#ff7a40,#fd7534,#fc6e28,#fb681e,#fa6213,#fa5b09,#fa5804)"></i>
<i style="top:451px;left:105px;width:470px;background:linear-gradient(90deg,#0d5bd4,#0d5ad4,#165fd7,#2266d9,#2e6ddc,#3974df,#447ae1,#5081e4,#5b88e7,#668ee9,#7194ec,#7b9aee,#86a1f1,#90a6f3,#9aacf5,#a3b2f7,#acb7fa,#b5bcfc,#bec2fd,#c7c8fe,#cecdff,#d8d1ff,#ddd1fd,#decdf8,#e0c9f3,#e1c5ec,#e2c2e6,#e4bedf,#e5bbd9,#e7b8d2,#e8b5cb,#e9b3c5,#eab0be,#ebadb7,#ecabb0,#eda8a9,#eea5a3,#efa29d,#f0a097,#f19d91,#f29a8b,#f39784,#f4947e,#f59178,#f58e72,#f68b6c,#f78865,#f8865f,#f98359,#fa8052,#fb7d4c,#fc7a46,#fd773f,#fe7439,#ff7337,#fd6f2b,#fc681f,#fb6215,#fa5b0a,#fa5804)"></i>
<i style="top:453px;left:105px;width:472px;background:linear-gradient(90deg,#0d5ad4,#0e59d5,#165ed7,#2265da,#2e6cdd,#3973df,#4479e2,#5080e5,#5b86e7,#668dea,#7193ec,#7b99ef,#869ff1,#90a5f4,#9aabf6,#a3b1f8,#acb6fa,#b5bbfc,#bec1fd,#c6c7fe,#cfccff,#d9cfff,#dccefc,#ddcaf7,#dec6f2,#e0c2eb,#e1bfe5,#e3bbde,#e4b8d7,#e5b5d1,#e6b2ca,#e8b0c3,#e9adbc,#eaaab5,#eba7ae,#eca5a7,#eda2a1,#ee9f9b,#ef9c95,#f0998e,#f19788,#f29482,#f3917c,#f48e76,#f48b6f,#f58869,#f68563,#f7825c,#f87f56,#f97c50,#fa7949,#fb7643,#fc733c,#fd7036,#fe6e2f,#ff6d2e,#fd6822,#fc6216,#fb5b0b,#fa5805)"></i>
<i style="top:455px;left:105px;width:474px;background:linear-gradient(90deg,#0e59d5,#0e58d6,#165dd8,#2264db,#2e6bdd,#3971e0,#4478e3,#507fe5,#5b85e8,#668cea,#7192ed,#7b98f0,#869ef2,#90a4f5,#9aaaf7,#a3b0f9,#acb5fb,#b5bafd,#bec0fe,#c6c6fe,#cfcbff,#d9ceff,#dacbfb,#dcc7f6,#ddc3f0,#debfea,#e0bce3,#e1b8dd,#e3b4d6,#e4b2cf,#e5afc8,#e6acc1,#e8aaba,#e9a7b4,#eaa4ac,#eba2a5,#ec9f9e,#ed9c98,#ee9992,#ef968c,#f09386,#f19080,#f28d79,#f28a73,#f3886d,#f48466,#f58260,#f67f5a,#f77c53,#f8794d,#f97647,#fa7340,#fb703a,#fc6d33,#fd6a2d,#fe6726,#ff6625,#fd6219,#fb5b0c,#fb5806)"></i>
<i style="top:457px;left:106px;width:475px;background:linear-gradient(90deg,#0e58d6,#0e57d7,#185dd9,#2363dc,#2f6ade,#3a71e1,#4678e4,#517ee6,#5c85e9,#678beb,#7292ee,#7d98f1,#879ef3,#91a4f5,#9aa9f7,#a4aff9,#adb4fc,#b6bafd,#bec0fe,#c7c5ff,#d1caff,#d8ccfe,#d9c8f9,#dac3f4,#dcc0ee,#ddbce8,#dfb8e1,#e0b5db,#e2b1d4,#e3aecd,#e4acc6,#e5a9bf,#e6a6b8,#e8a4b1,#e9a1aa,#ea9ea3,#eb9b9c,#ec9996,#ed9690,#ee9389,#ef9083,#f08d7d,#f18a77,#f18770,#f2846a,#f38164,#f47e5d,#f57b57,#f67850,#f7754a,#f87244,#f96f3d,#fa6c37,#fb6930,#fc662a,#fd6323,#fe601c,#ff601b,#fd5b10,#fb5808)"></i>
<i style="top:459px;left:106px;width:476px;background:linear-gradient(90deg,#0e57d6,#0e56d7,#175bd9,#2262dc,#2e69df,#396fe1,#4476e4,#507ce7,#5b83e9,#6589ec,#708fee,#7b95f1,#859bf3,#8ea1f5,#98a7f7,#a1acf9,#aab1fc,#b3b7fd,#bbbdfe,#c3c2ff,#cdc7ff,#d6caff,#d7c6fa,#d8c2f5,#dabef0,#dbbbea,#ddb7e3,#deb3dd,#e0b0d6,#e1adcf,#e2aac8,#e3a7c2,#e4a5bb,#e6a2b4,#e79fad,#e89da6,#e99a9f,#ea9798,#eb9492,#ec928c,#ed8f85,#ee8c7f,#ef8979,#f08673,#f1836d,#f18066,#f27d60,#f37a5a,#f47754,#f5744d,#f67147,#f76f41,#f86c3a,#f96934,#fa662d,#fb6327,#fc6020,#fd5d1a,#fe5a13,#ff5911,#fd580b)"></i>
<i style="top:461px;left:107px;width:475px;background:linear-gradient(90deg,#0e56d7,#0f55d8,#185bda,#2462dd,#3069e0,#3b6fe3,#4676e5,#527de8,#5d83ea,#6889ed,#7390f0,#7d96f2,#879cf4,#91a1f6,#9aa7f9,#a3acfb,#acb2fd,#b5b8fd,#bebefe,#c6c3ff,#d0c7ff,#d5c6fd,#d6c2f7,#d8bef2,#d9baec,#dab6e6,#dcb3df,#deafd8,#dfabd2,#e0a8cb,#e1a6c4,#e3a3bd,#e4a0b6,#e59eaf,#e69ba8,#e798a1,#e9959a,#ea9392,#eb908c,#ec8d86,#ec8a80,#ed8779,#ee8473,#ef816d,#f07e66,#f17b60,#f2785a,#f37553,#f4724d,#f56f46,#f66c40,#f76939,#f86633,#f8632c,#f96026,#fa5d1f,#fb5a19,#fc5712,#fd540c,#fe540a)"></i>
<i style="top:463px;left:107px;width:471px;background:linear-gradient(90deg,#0f56d8,#0f54d9,#1859db,#2460de,#2f67e0,#3a6ee3,#4674e6,#517be8,#5c81eb,#6787ee,#718ef0,#7c94f3,#859af5,#8f9ff7,#98a5f9,#a1aafb,#aaaffd,#b3b6fd,#bcbcfe,#c4c1ff,#cec4ff,#d3c4fd,#d4c0f8,#d6bcf3,#d7b8ed,#d9b4e6,#dab1e0,#dcadd9,#dda9d2,#dfa6cc,#e0a4c5,#e1a1be,#e29eb7,#e39bb0,#e499a9,#e696a2,#e7939b,#e89094,#e98e8d,#ea8b87,#eb8881,#ec857a,#ed8274,#ee7f6e,#ee7c67,#ef7961,#f0765b,#f17354,#f2704e,#f36d48,#f46a41,#f5673b,#f66434,#f7612e,#f85e27,#f95c21,#fa591a,#fb5514,#fc530d,#fd520b)"></i>
<i style="top:465px;left:108px;width:465px;background:linear-gradient(90deg,#0f55d9,#0f53d9,#1959dc,#2560df,#3067e1,#3c6de4,#4774e7,#527ae9,#5d81ec,#6887ef,#738df1,#7d93f3,#8699f5,#909ff7,#99a4fa,#a2a9fc,#abb0fd,#b4b6fe,#bcbbff,#c6c0ff,#d0c3ff,#d2c1fb,#d3bcf6,#d5b8f1,#d6b4eb,#d8b1e4,#d9adde,#dbaad7,#dca6d0,#dea3c9,#dfa0c2,#e09dbb,#e19bb4,#e298ad,#e395a6,#e5929f,#e69098,#e78d91,#e88a8a,#e98784,#ea847d,#eb8177,#ec7e71,#ed7b6a,#ee7864,#ee755e,#ef7257,#f06f51,#f16c4b,#f26944,#f3673e,#f46437,#f56031,#f65d2a,#f75a24,#f8571d,#f95417,#fa5110,#fb510d)"></i>
<i style="top:467px;left:108px;width:461px;background:linear-gradient(90deg,#0f54d9,#0f52da,#1958dd,#245edf,#3065e2,#3b6ce5,#4672e7,#5179ea,#5c7fec,#6785ef,#718bf1,#7b91f4,#8597f6,#8e9cf8,#97a2fa,#a0a7fc,#a9adfd,#b2b4fe,#bab9ff,#c4beff,#cec0ff,#d0bffc,#d1bbf6,#d3b6f1,#d4b3ec,#d6afe5,#d7abde,#d9a8d8,#daa4d1,#dca1ca,#dd9ec3,#de9bbc,#df98b6,#e096af,#e293a8,#e390a1,#e48e99,#e58b92,#e6888b,#e88584,#e8827e,#e97f78,#ea7c72,#eb7a6b,#ec7765,#ed745f,#ee7159,#ef6e52,#f06b4c,#f16846,#f1653f,#f26239,#f35f32,#f45c2c,#f55925,#f6561f,#f75318,#f85012,#f9500f)"></i>
<i style="top:469px;left:109px;width:455px;background:linear-gradient(90deg,#0f53da,#1051db,#1a57de,#265ee0,#3165e3,#3c6be6,#4872e8,#5278eb,#5e7eee,#6885f0,#728bf2,#7c91f4,#8596f6,#8f9cf9,#98a1fb,#a1a7fc,#aaadfd,#b3b3fe,#bbb8ff,#c6bdff,#cdbfff,#cfbbfa,#d0b7f5,#d2b3f0,#d3afe9,#d5abe3,#d6a8dc,#d8a4d5,#d9a0cf,#db9dc8,#dc9ac1,#dd98ba,#de95b3,#df92ac,#e08fa5,#e28d9e,#e38a97,#e4878f,#e58488,#e78281,#e77f7b,#e87c75,#e9796e,#ea7668,#eb7362,#ec705b,#ed6d55,#ee6a4f,#ef6748,#f06442,#f0613b,#f15e35,#f25b2f,#f35828,#f45522,#f5521b,#f64f15,#f74e11)"></i>
<i style="top:471px;left:109px;width:451px;background:linear-gradient(90deg,#1052db,#1050dc,#1a56de,#265de1,#3164e4,#3d6ae6,#4871e9,#5377ec,#5e7dee,#6884f1,#728af3,#7c90f5,#8695f7,#8f9bf9,#98a0fc,#a1a6fd,#abadfd,#b3b3fe,#bcb8ff,#c7bbff,#ccbcfd,#ceb8f8,#cfb4f3,#d0afee,#d2ace7,#d3a8e1,#d5a4da,#d7a1d3,#d89dcc,#da99c5,#db97be,#dc94b7,#dd91b0,#de8ea9,#df8ca2,#e1899b,#e28694,#e3838c,#e48085,#e67e7e,#e77b77,#e77871,#e8756b,#e97264,#ea6f5e,#eb6c58,#ec6951,#ed664b,#ee6344,#ef603e,#f05d37,#f15a31,#f2572a,#f35424,#f3501d,#f44e17,#f54d14)"></i>
<i style="top:473px;left:110px;width:446px;background:linear-gradient(90deg,#1051dc,#104fdd,#1b55df,#265ce2,#3263e5,#3d69e7,#4870ea,#5376ed,#5e7cef,#6882f1,#7288f3,#7b8ef5,#8594f8,#8e99fa,#979efc,#a0a5fd,#a9abfe,#b2b1ff,#bbb6ff,#c5b9ff,#cbbafd,#ccb6f8,#cdb1f3,#cfadee,#d0a9e8,#d2a6e1,#d3a2da,#d59ed3,#d69bcd,#d897c6,#d994bf,#da92b8,#db8fb1,#dd8caa,#de89a3,#df879c,#e08495,#e1818e,#e37e86,#e47c7f,#e57978,#e67672,#e7736c,#e87065,#e96d5f,#e96a59,#ea6752,#eb644c,#ec6145,#ed5e3f,#ee5b39,#ef5832,#f0552c,#f15225,#f24f1f,#f34c18,#f44c16)"></i>
<i style="top:475px;left:110px;width:441px;background:linear-gradient(90deg,#1050dc,#104edd,#1b54e0,#265be3,#3262e5,#3d68e8,#486feb,#5375ed,#5e7bf0,#6881f2,#7287f4,#7b8df6,#8592f8,#8e98fb,#979efc,#a0a4fd,#a9abfe,#b2b0ff,#bcb5ff,#c6b8ff,#c9b7fc,#cbb2f7,#ccaef2,#cdaaec,#cfa6e6,#d0a2df,#d29fd8,#d49bd1,#d597cb,#d794c4,#d891bd,#d98eb6,#da8baf,#db89a8,#dd86a0,#de8399,#df8092,#e07e8b,#e27b84,#e3787c,#e47575,#e5726f,#e66f68,#e76c62,#e8695c,#e86655,#e9634f,#ea6048,#eb5d42,#ec5a3c,#ed5735,#ee542f,#ef5128,#f04e22,#f14b1b,#f24b18)"></i>
<i style="top:477px;left:111px;width:436px;background:linear-gradient(90deg,#104fdd,#114dde,#1c54e1,#285be4,#3361e6,#3e68e9,#4a6eec,#5575ee,#5f7bf1,#6981f3,#7387f5,#7c8cf7,#8692f9,#8f97fc,#999efc,#a2a5fd,#abaafe,#b3afff,#beb4ff,#c7b7ff,#c8b3fa,#c9aff5,#cbaaf0,#cca6ea,#cea2e3,#cf9fdc,#d19bd6,#d397cf,#d493c8,#d690c1,#d78dba,#d88ab3,#d988ab,#da85a4,#dc829d,#dd7f96,#de7c8f,#df7987,#e17780,#e27479,#e37171,#e46e6b,#e56b64,#e6685e,#e76558,#e86251,#e85f4b,#e95c44,#ea593e,#eb5637,#ec5331,#ed502a,#ee4d23,#ef491d,#f0491a)"></i>
<i style="top:479px;left:111px;width:431px;background:linear-gradient(90deg,#114ede,#114cdf,#1c52e2,#2759e4,#325fe7,#3e66ea,#496cec,#5373ef,#5d79f1,#677ff3,#7185f5,#7a8af7,#848ff9,#8d95fc,#969cfc,#9fa2fd,#a8a8fe,#b1adff,#bcb1ff,#c5b4ff,#c6b1fb,#c8adf6,#c9a9f0,#caa4eb,#cca1e4,#cd9dde,#cf99d7,#d196d0,#d292c9,#d48ec2,#d58bbb,#d688b4,#d786ad,#d883a6,#da809f,#db7d98,#dc7a91,#dd788a,#df7582,#e0727b,#e16f74,#e26c6c,#e36966,#e46760,#e56459,#e66053,#e75e4d,#e85a46,#e95840,#ea5539,#ea5233,#eb4e2c,#ec4b26,#ed481f,#ef481c)"></i>
<i style="top:481px;left:112px;width:426px;background:linear-gradient(90deg,#114ddf,#114be0,#1d52e3,#2858e5,#345fe8,#3f66eb,#4a6ced,#5472ef,#5e78f2,#687ef4,#7284f6,#7b89f8,#858ffb,#8e95fc,#989cfd,#a1a2fe,#a9a8ff,#b3adff,#bdb0ff,#c4b2fe,#c5adf9,#c6a9f3,#c8a5ee,#c9a1e8,#cb9de2,#cc99db,#ce95d4,#d092cd,#d18ec6,#d38abf,#d487b8,#d585b1,#d682aa,#d77fa3,#d97c9c,#da7994,#db768d,#dc7486,#de717f,#df6e77,#e06b70,#e16869,#e26562,#e3625c,#e45f55,#e55c4f,#e65948,#e75642,#e8533b,#e95035,#ea4d2e,#eb4a28,#ec4721,#ed471f)"></i>
<i style="top:483px;left:112px;width:421px;background:linear-gradient(90deg,#114cdf,#114ae0,#1c50e3,#2857e6,#335de8,#3e64eb,#496aee,#5370f0,#5d76f2,#667cf4,#7082f6,#7987f8,#838cfb,#8c93fc,#9599fd,#9ea0fe,#a7a5ff,#b0aaff,#bbaeff,#c2b0ff,#c3acf9,#c4a7f4,#c6a3ef,#c79fea,#c99be3,#ca98dc,#cc94d5,#ce90cf,#cf8cc8,#d189c1,#d285ba,#d383b3,#d480ac,#d67da5,#d77a9e,#d87897,#d9758f,#da7288,#dc6f81,#dd6c7a,#de6a73,#df676b,#e16464,#e2615e,#e25e57,#e35b51,#e4584b,#e55544,#e6523e,#e74f37,#e84c31,#e9492a,#ea4624,#eb4621)"></i>
<i style="top:485px;left:113px;width:416px;background:linear-gradient(90deg,#114be0,#1249e1,#1e50e4,#2956e7,#345dea,#3f63ec,#4a6aee,#5470f1,#5e76f3,#677bf5,#7181f7,#7a86f9,#848cfb,#8d93fc,#969afd,#9fa0fe,#a8a5ff,#b3a9ff,#bdacff,#c1acfd,#c2a8f7,#c3a4f2,#c59fed,#c69be7,#c897e0,#c994d9,#cb90d3,#cc8ccc,#ce88c5,#d085be,#d182b7,#d27fb0,#d37ca9,#d579a1,#d6769a,#d77493,#d8718c,#d96e85,#db6b7d,#dc6876,#dd656f,#de6267,#e06060,#e15d59,#e25a53,#e2574d,#e35446,#e45140,#e54e39,#e64b33,#e7472c,#e84426,#e94423)"></i>
<i style="top:487px;left:113px;width:412px;background:linear-gradient(90deg,#124ae1,#1248e2,#1d4ee5,#2855e8,#345bea,#3e61ed,#4868ef,#526ef1,#5c74f3,#6679f5,#6f7ff7,#7984fa,#828afb,#8b91fc,#9497fd,#9d9dfe,#a6a2ff,#b1a7ff,#baaaff,#bfaafd,#c0a6f8,#c2a2f3,#c39ded,#c499e8,#c696e1,#c792da,#c98ed4,#cb8acd,#cc87c6,#ce83bf,#cf7fb8,#d07db1,#d27aaa,#d377a3,#d4749c,#d57295,#d66f8e,#d86c86,#d9697f,#da6678,#db6371,#dc6169,#de5e62,#df5b5b,#e05854,#e1554e,#e25248,#e34f41,#e44c3b,#e44935,#e5462e,#e64328,#e84325)"></i>
<i style="top:489px;left:114px;width:406px;background:linear-gradient(90deg,#1248e2,#1347e3,#1e4ee6,#2a54e9,#355beb,#3f61ed,#4967f0,#536df2,#5d73f4,#6779f6,#707ef8,#7983fb,#838afc,#8c91fd,#9597fd,#9e9dfe,#a7a2ff,#b2a6ff,#bca9ff,#bda7fb,#bfa2f6,#c09ef1,#c29aeb,#c396e6,#c592df,#c68ed8,#c88ad1,#c987ca,#cb83c3,#cd7fbc,#ce7cb5,#cf79ae,#d076a7,#d273a0,#d37199,#d46e92,#d56b8b,#d66883,#d8657c,#d96275,#da606d,#db5d66,#dd5a5f,#de5757,#df5451,#e0514b,#e14e44,#e24b3e,#e34837,#e34531,#e4422a,#e64227)"></i>
<i style="top:491px;left:115px;width:401px;background:linear-gradient(90deg,#1247e3,#1447e4,#204de7,#2b54ea,#365aec,#4060ee,#4a67f0,#546df3,#5e72f5,#6878f7,#717df9,#7b83fb,#848afc,#8d91fd,#9697fe,#9f9cff,#aaa1ff,#b4a5ff,#bba7fe,#bca3f9,#be9ef4,#bf9aef,#c196e9,#c292e3,#c48edc,#c58ad5,#c787ce,#c883c7,#ca7fc0,#cc7bb9,#cd78b2,#ce75ab,#cf72a4,#d16f9d,#d26c95,#d36a8e,#d46787,#d66480,#d76178,#d85e71,#d95b6a,#db5962,#dc565b,#dd5353,#de504d,#df4d46,#e04a40,#e14739,#e24433,#e3402c,#e44129)"></i>
<i style="top:493px;left:115px;width:396px;background:linear-gradient(90deg,#1246e3,#1445e5,#1f4ce8,#2a52ea,#3458ec,#3f5eee,#4965f1,#526af3,#5c70f5,#6676f7,#6f7bfa,#7981fb,#8288fc,#8b8ffd,#9495fe,#9d9aff,#a79fff,#b1a2ff,#b9a5ff,#baa1fa,#bc9df5,#bd98ef,#bf94ea,#c090e4,#c28cdd,#c389d7,#c585d0,#c681c9,#c87dc2,#ca7abb,#cb76b4,#cc73ad,#ce70a6,#cf6d9f,#d06b98,#d16891,#d26589,#d46282,#d55f7b,#d65d74,#d75a6c,#d85765,#da545e,#db5156,#dc4f4f,#dd4c48,#de4842,#df453c,#e04235,#e13f2f,#e23f2c)"></i>
<i style="top:495px;left:116px;width:391px;background:linear-gradient(90deg,#1345e4,#1544e6,#204be9,#2b51eb,#3558ed,#3f5eef,#4964f2,#536af4,#5d6ff6,#6775f8,#707afb,#7a81fb,#8388fc,#8c8ffd,#9594fe,#9e99ff,#a99eff,#b3a1ff,#b8a1fd,#b99df8,#bb99f3,#bc95ed,#be90e8,#bf8ce1,#c188db,#c285d4,#c481cd,#c57dc6,#c779bf,#c976b8,#ca72b1,#cb6faa,#cc6ca3,#ce699b,#cf6794,#d0648d,#d16186,#d25e7e,#d45b77,#d55870,#d65668,#d75361,#d9505a,#da4d52,#db4a4b,#dc4744,#dd443e,#de4137,#df3e31,#e03e2e)"></i>
<i style="top:497px;left:116px;width:386px;background:linear-gradient(90deg,#1344e5,#1543e7,#204ae9,#2b50ec,#3556ee,#3f5df0,#4963f2,#5368f4,#5d6ef7,#6773f9,#7079fb,#7a81fc,#8387fd,#8c8efd,#9593ff,#9f99ff,#aa9dff,#b49fff,#b69efc,#b89af6,#b995f1,#bb91ec,#bc8de6,#be89e0,#bf85d9,#c181d2,#c27dcb,#c47ac4,#c676bd,#c772b6,#c96eae,#ca6ba7,#cb69a0,#cc6699,#ce6391,#cf608a,#d05d83,#d15a7b,#d35774,#d4556d,#d55265,#d64f5e,#d84c56,#d9494f,#da4647,#db4340,#dc403a,#dd3d33,#df3d30)"></i>
<i style="top:499px;left:117px;width:381px;background:linear-gradient(90deg,#1343e6,#1642e8,#2049ea,#2b4fec,#3555ee,#3f5bf0,#4961f3,#5367f5,#5c6cf7,#6672fa,#6f78fb,#797ffc,#8286fd,#8b8cfe,#9491ff,#9e97ff,#a99bff,#b39dff,#b59cfc,#b698f6,#b793f1,#b98fec,#ba8be6,#bc87e0,#bd83d9,#bf7fd2,#c17bcb,#c278c5,#c474be,#c570b7,#c76caf,#c869a8,#ca66a1,#cb649a,#cc6193,#cd5e8c,#ce5b85,#cf587d,#d15676,#d2536f,#d35067,#d44d60,#d64a59,#d74751,#d8444a,#da4142,#db3e3c,#db3c35,#dd3c32)"></i>
<i style="top:501px;left:117px;width:377px;background:linear-gradient(90deg,#1442e7,#1541e8,#2047ea,#2a4eed,#3454ef,#3f5af1,#4960f3,#5266f6,#5c6bf8,#6670fa,#7078fb,#797ffc,#8285fd,#8c8bfe,#9490ff,#9f96ff,#a999ff,#b29cff,#b398fa,#b594f5,#b690ef,#b88bea,#b987e4,#bb83de,#bc7fd7,#be7bd0,#bf78c9,#c174c2,#c370bb,#c46cb4,#c668ac,#c765a5,#c8629e,#ca6097,#cb5d90,#cc5a88,#cd5781,#cf547a,#d05172,#d14e6b,#d24c63,#d4495c,#d54654,#d6434d,#d74045,#d93d3e,#da3a37,#db3a34)"></i>
<i style="top:503px;left:118px;width:371px;background:linear-gradient(90deg,#1441e7,#1640e9,#2147eb,#2b4ded,#3553f0,#3f59f2,#495ff4,#5365f7,#5d6af9,#6770fb,#7078fb,#7a7ffc,#8385fd,#8c8bfe,#9690ff,#a195ff,#ab98ff,#b199fe,#b295f8,#b490f3,#b58ced,#b787e8,#b883e2,#ba7fdb,#bb7bd4,#bd78cd,#be74c6,#c070bf,#c26cb8,#c368b1,#c564aa,#c662a2,#c75f9b,#c85c94,#ca598c,#cb5685,#cc537e,#cd5076,#cf4d6f,#d04a67,#d14860,#d34558,#d44251,#d53f49,#d63c42,#d8393a,#d93936)"></i>
<i style="top:505px;left:119px;width:366px;background:linear-gradient(90deg,#143fe8,#173fea,#2146ec,#2b4cee,#3552f0,#3f58f3,#495ef5,#5363f7,#5c68fa,#666ffb,#7076fc,#797dfc,#8283fd,#8b89fe,#958eff,#a092ff,#aa96ff,#af97fe,#b092f8,#b28ef3,#b38aee,#b585e8,#b681e3,#b87ddc,#b979d5,#bb76ce,#bc72c7,#be6ec0,#c06ab9,#c166b2,#c363ab,#c45fa4,#c55d9d,#c75a95,#c8578e,#c95487,#ca5180,#cc4e78,#cd4b71,#ce496a,#cf4662,#d1435b,#d24053,#d33d4c,#d43a44,#d6373d,#d83839)"></i>
<i style="top:507px;left:119px;width:361px;background:linear-gradient(90deg,#143fe9,#163eea,#2044ec,#2b4bef,#3551f1,#3f57f3,#495cf5,#5262f8,#5c67fa,#666efb,#7076fc,#797cfd,#8283fe,#8b88ff,#958dff,#a191ff,#ab94ff,#ae93fc,#af8ff7,#b08bf1,#b286ec,#b382e7,#b57ee1,#b67ada,#b876d3,#ba72cc,#bb6ec5,#bd6abe,#be67b7,#c063b0,#c25fa8,#c35ca1,#c4599a,#c55693,#c7538b,#c85084,#c94d7d,#ca4a75,#cc476e,#cd4566,#ce425f,#cf3f57,#d13c50,#d23948,#d33641,#d5363c)"></i>
<i style="top:509px;left:120px;width:356px;background:linear-gradient(90deg,#143dea,#173deb,#2144ed,#2b4aef,#3650f2,#4056f4,#4a5bf6,#5361f9,#5d67fa,#676ffb,#7176fc,#7a7cfd,#8382fe,#8d87ff,#988dff,#a290ff,#ab93ff,#ac8ffa,#ae8bf5,#af87ef,#b182ea,#b27ee4,#b47ade,#b576d7,#b772d0,#b96ec9,#ba6ac2,#bc66bb,#be62b3,#bf5eac,#c15ba5,#c2589d,#c35596,#c5528f,#c64f87,#c74c80,#c84979,#ca4671,#cb436a,#cc4062,#cd3d5b,#cf3a53,#d0384b,#d13544,#d3353f)"></i>
<i style="top:511px;left:120px;width:352px;background:linear-gradient(90deg,#143dea,#163ceb,#2042ee,#2a48f0,#344ef2,#3e54f4,#4859f7,#525ff9,#5b65fa,#656dfb,#6f74fc,#787afd,#8180fe,#8b85ff,#968aff,#a08eff,#a991ff,#aa8efb,#ac89f5,#ad85f0,#af80ea,#b07ce5,#b278df,#b374d8,#b570d1,#b76cca,#b868c3,#ba65bc,#bb61b5,#bd5dae,#bf59a6,#c0569f,#c15398,#c35091,#c44d89,#c54a82,#c6477b,#c74473,#c9416c,#ca3e65,#cb3c5d,#cd3956,#ce364e,#cf3347,#d13342)"></i>
<i style="top:513px;left:121px;width:346px;background:linear-gradient(90deg,#143beb,#163bec,#2141ee,#2b47f1,#354df3,#3f53f5,#4958f8,#535efa,#5c65fb,#666dfc,#7074fc,#797afd,#827fff,#8c85ff,#9889ff,#a28cff,#a88efe,#a98af9,#ab85f3,#ac81ee,#ae7de8,#af78e3,#b174dc,#b270d5,#b46cce,#b568c7,#b764c0,#b961b9,#ba5db2,#bc59ab,#be55a4,#bf529c,#c04f95,#c24c8e,#c34986,#c4467f,#c54377,#c64070,#c83d69,#c93a61,#ca375a,#cb3452,#cd324a,#cf3246)"></i>
<i style="top:515px;left:122px;width:341px;background:linear-gradient(90deg,#143aeb,#173aed,#2140ef,#2b46f1,#354cf4,#3f51f6,#4857f8,#525dfa,#5c64fb,#656bfc,#6f72fd,#7878fe,#817dff,#8b83ff,#9687ff,#a08aff,#a68cfe,#a788f9,#a983f3,#aa7fee,#ac7ae9,#ad76e3,#af72dd,#b06ed6,#b26acf,#b366c8,#b563c1,#b75fba,#b85bb3,#ba57ac,#bc53a5,#bd509e,#be4d97,#c04a8f,#c14788,#c24481,#c3417a,#c43e72,#c63c6b,#c73964,#c8365c,#c93355,#cb304d,#cd3149)"></i>
<i style="top:517px;left:122px;width:336px;background:linear-gradient(90deg,#1439ec,#1638ed,#203ff0,#2a44f2,#344af4,#3e50f7,#4855f9,#525cfa,#5c64fb,#656bfc,#6f71fd,#7877fe,#817cff,#8c82ff,#9786ff,#a188ff,#a589fd,#a684f7,#a780f2,#a97bed,#aa77e7,#ac72e1,#ad6edb,#af6ad4,#b167cd,#b263c6,#b45fbf,#b55bb8,#b757b1,#b953aa,#ba4fa2,#bc4c9b,#bd4994,#be468d,#c04385,#c1407e,#c23d76,#c33a6f,#c53768,#c63560,#c73259,#c82f51,#ca2f4c)"></i>
<i style="top:519px;left:123px;width:331px;background:linear-gradient(90deg,#1438ed,#1638ee,#213ef1,#2b44f3,#3549f5,#3f4ff8,#4955fa,#535cfb,#5d64fb,#666bfc,#7071fd,#7977fe,#837cff,#8e81ff,#9885ff,#a288ff,#a385fb,#a580f5,#a67cf0,#a877ea,#a973e5,#ab6edf,#ac6ad8,#ae66d1,#b062ca,#b15fc3,#b35bbc,#b557b4,#b653ad,#b84fa6,#ba4b9f,#bb4897,#bc4590,#bd4289,#bf3f81,#c03c7a,#c13972,#c2366b,#c43363,#c5305c,#c62d54,#c82e4f)"></i>
<i style="top:521px;left:124px;width:325px;background:linear-gradient(90deg,#1437ed,#1737ef,#213cf1,#2b42f4,#3548f6,#3e4df8,#4854fa,#525bfb,#5c62fb,#6569fc,#6f6ffd,#7775fe,#817aff,#8d7fff,#9782ff,#a085ff,#a183fb,#a37ef6,#a47af0,#a675eb,#a771e5,#a96de0,#aa68d9,#ac65d2,#ae61cb,#af5dc4,#b159bd,#b255b6,#b451af,#b64ea8,#b74aa1,#b9469a,#ba4393,#bb408b,#bd3d84,#be3a7d,#bf3775,#c0346e,#c13267,#c32f5f,#c42c58,#c62c53)"></i>
<i style="top:523px;left:124px;width:321px;background:linear-gradient(90deg,#1436ee,#1635f0,#203bf2,#2a41f4,#3446f7,#3e4cf9,#4853fa,#525afb,#5c62fc,#6568fd,#6f6efe,#7873ff,#8279ff,#8e7dff,#9881ff,#9f83ff,#a07ff9,#a27af4,#a376ee,#a571e9,#a66de3,#a869de,#a965d7,#ab61d0,#ac5dc9,#ae59c2,#b055ba,#b151b3,#b34dac,#b549a5,#b6459d,#b84296,#b93f8f,#ba3c87,#bc3980,#bd3679,#be3371,#bf306a,#c12d62,#c22a5b,#c42b56)"></i>
<i style="top:525px;left:125px;width:316px;background:linear-gradient(90deg,#1435ee,#1634f0,#203af3,#2a3ff5,#3445f7,#3e4bf9,#4852fa,#5159fb,#5b60fc,#6467fd,#6e6dfe,#7672ff,#8177ff,#8d7bff,#967eff,#9d81ff,#9e7df9,#a078f4,#a174ef,#a36fe9,#a46be4,#a667de,#a763d8,#a95fd1,#aa5bca,#ac57c3,#ae53bc,#af4fb5,#b14cae,#b248a6,#b4449f,#b64098,#b73d91,#b83a8a,#ba3782,#bb347b,#bc3174,#bd2e6c,#be2c65,#c0295e,#c22959)"></i>
<i style="top:527px;left:126px;width:310px;background:linear-gradient(90deg,#1433ef,#1733f1,#2139f3,#2b3ef6,#3544f8,#3f4bfa,#4952fa,#5259fb,#5c60fc,#6566fd,#6e6cfe,#7871ff,#8376ff,#8e7aff,#997cff,#9c7dfd,#9d79f8,#9f74f2,#a070ed,#a16be7,#a367e2,#a563dc,#a65fd5,#a85bce,#a957c7,#ab53c0,#ac4fb9,#ae4bb2,#b048ab,#b144a3,#b3409c,#b53c95,#b6398e,#b73686,#b8337f,#ba3078,#bb2d70,#bc2a69,#bd2761,#c0285d)"></i>
<i style="top:529px;left:126px;width:306px;background:linear-gradient(90deg,#1432f0,#1631f2,#2037f4,#2a3df6,#3442f9,#3e4afa,#4851fb,#5258fb,#5c5ffc,#6566fd,#6f6bff,#7971ff,#8575ff,#8f79ff,#997cff,#9a7afb,#9c75f6,#9d71f0,#9f6ceb,#a068e5,#a263df,#a35fd9,#a55bd2,#a757cb,#a853c4,#aa4fbd,#ab4bb6,#ad47ae,#af43a7,#b03fa0,#b23b99,#b43791,#b5358a,#b63282,#b82f7b,#b92c73,#ba296c,#bb2664,#be2660)"></i>
<i style="top:531px;left:127px;width:300px;background:linear-gradient(90deg,#1431f1,#1630f2,#2036f5,#2a3bf7,#3441f9,#3e49fa,#4850fb,#5157fc,#5b5efd,#6464fe,#6d69ff,#776eff,#8373ff,#8d76ff,#9779ff,#9877fc,#9a73f6,#9b6ff1,#9d6aeb,#9e66e6,#a061e0,#a15ddb,#a359d4,#a455cd,#a652c6,#a84ebf,#a94ab8,#ab46b1,#ac42aa,#ae3ea2,#b03a9b,#b13694,#b3338d,#b43085,#b52d7e,#b72a77,#b82770,#b92468,#bb2563)"></i>
<i style="top:533px;left:128px;width:295px;background:linear-gradient(90deg,#1430f1,#172ff3,#2135f6,#2b3af8,#3541f9,#3f49fa,#4950fb,#5257fc,#5c5dfd,#6563fe,#6f68ff,#7a6eff,#8572ff,#8f75ff,#9678ff,#9774f9,#996ff4,#9a6bef,#9c66e9,#9d62e3,#9f5dde,#a059d8,#a255d1,#a351ca,#a54dc3,#a749bb,#a845b4,#aa42ad,#ac3ea6,#ad3a9f,#af3697,#b13290,#b22f89,#b32c81,#b4297a,#b62673,#b7236b,#b92366)"></i>
<i style="top:535px;left:128px;width:290px;background:linear-gradient(90deg,#142ff2,#162df4,#2033f6,#2a39f9,#3540fa,#3f48fa,#494ffb,#5256fc,#5c5cfd,#6562fe,#6f68ff,#7a6dff,#8570ff,#9073ff,#9475fe,#9670f8,#976bf2,#9967ed,#9a62e7,#9c5ee2,#9d59dc,#9f55d5,#a151ce,#a24dc7,#a449c0,#a545b9,#a741b2,#a93eaa,#aa3aa3,#ac369c,#ae3294,#b02e8d,#b12a85,#b2287e,#b32577,#b5226f,#b7226a)"></i>
<i style="top:537px;left:129px;width:285px;background:linear-gradient(90deg,#142df3,#162cf5,#2032f7,#2a38f9,#3440fa,#3e47fb,#484efb,#5255fc,#5b5bfd,#6460ff,#6e66ff,#796bff,#846eff,#8f71ff,#9372fd,#946ef8,#9569f3,#9765ed,#9860e8,#9a5ce2,#9b58dd,#9d53d7,#9f4fcf,#a04cc8,#a248c1,#a344ba,#a540b3,#a73cac,#a838a5,#aa349e,#ac3096,#ad2c8f,#af2988,#b02681,#b12379,#b22072,#b5216d)"></i>
<i style="top:539px;left:130px;width:280px;background:linear-gradient(90deg,#142cf3,#172bf6,#2131f8,#2b38f9,#3540fa,#3f47fb,#494efc,#5354fd,#5c5afe,#6560ff,#7065ff,#7c6aff,#866dff,#9070ff,#916efb,#936af6,#9465f0,#9661eb,#975ce5,#9958e0,#9a53da,#9c4fd3,#9d4bcc,#9f47c5,#a143be,#a23fb7,#a43bb0,#a637a8,#a734a1,#a9309a,#ab2c92,#ac288b,#ae2484,#af217c,#b01e75,#b31f70)"></i>
<i style="top:541px;left:131px;width:274px;background:linear-gradient(90deg,#142af4,#172af7,#2230f9,#2c38f9,#363ffa,#4047fb,#4a4efc,#5354fd,#5d5afe,#675fff,#7265ff,#7d68ff,#876cff,#8f6fff,#906af9,#9166f4,#9361ee,#945de9,#9658e3,#9854de,#994fd8,#9b4bd1,#9c47c9,#9e43c2,#a03fbb,#a13bb4,#a337ac,#a533a5,#a62f9e,#a82b96,#aa278f,#ab2388,#ad2080,#ae1d79,#b01e73)"></i>
<i style="top:543px;left:131px;width:270px;background:linear-gradient(90deg,#1429f5,#1628f7,#212ff9,#2b36f9,#343efa,#3e45fb,#484cfc,#5252fd,#5b57fe,#655dff,#7062ff,#7b66ff,#8569ff,#8d6dff,#8e68fa,#8f64f5,#915fef,#925bea,#9456e4,#9552de,#974dd9,#9949d2,#9a45cb,#9c42c4,#9d3ebd,#9f3ab6,#a136af,#a232a7,#a42ea0,#a62a99,#a72691,#a9228a,#ab1e83,#ac1b7c,#ae1c76)"></i>
<i style="top:545px;left:132px;width:264px;background:linear-gradient(90deg,#1428f6,#1727f8,#212ff9,#2b36fa,#353efb,#3f45fb,#494bfc,#5251fe,#5c57ff,#665cff,#7261ff,#7c65ff,#8767ff,#8b69fe,#8d65f8,#8e60f3,#905bed,#9157e7,#9352e2,#944edc,#9649d7,#9745cf,#9942c8,#9b3ec1,#9c3aba,#9e36b3,#a032ab,#a12ea4,#a32a9d,#a52696,#a6228e,#a81e87,#aa1a7f,#ac1b7a)"></i>
<i style="top:547px;left:133px;width:259px;background:linear-gradient(90deg,#1426f7,#1827f8,#222ef9,#2c36fa,#363dfb,#4044fc,#4a4bfd,#5351fe,#5d56ff,#685cff,#7460ff,#7e64ff,#8867ff,#8a65fb,#8b60f6,#8d5cf0,#8f57eb,#9053e5,#924edf,#9349da,#9545d3,#9641cc,#983dc5,#9a39be,#9b35b6,#9d31af,#9f2da8,#a029a0,#a22599,#a42191,#a61d8a,#a71982,#aa197d)"></i>
<i style="top:549px;left:134px;width:253px;background:linear-gradient(90deg,#1425f7,#1826f9,#222ef9,#2c35fa,#363cfb,#3f43fc,#4949fd,#524ffe,#5c54ff,#675aff,#735eff,#7c61ff,#8664ff,#8863fc,#8a5ef6,#8b5af1,#8d56eb,#8e51e6,#904de0,#9148db,#9344d5,#9440ce,#963cc7,#9738c0,#9934b9,#9b30b2,#9c2caa,#9e28a3,#a0249c,#a12095,#a31c8d,#a51886,#a81881)"></i>
<i style="top:551px;left:134px;width:249px;background:linear-gradient(90deg,#1424f8,#1725f9,#212df9,#2b34fa,#353bfb,#3f42fc,#4948fd,#524eff,#5d54ff,#6859ff,#735dff,#7e60ff,#8663ff,#875ffa,#885bf4,#8a56ef,#8b52e9,#8d4de4,#8e48de,#9044d8,#913fd2,#933bcb,#9537c4,#9634bc,#9830b5,#9a2cae,#9b28a7,#9d249f,#9f2098,#a01c90,#a21889,#a51784)"></i>
<i style="top:553px;left:135px;width:244px;background:linear-gradient(90deg,#1423f8,#1825f9,#222dfa,#2c34fb,#363bfc,#4042fd,#4a48fe,#534dff,#5f53ff,#6b58ff,#755cff,#815eff,#8460fd,#865bf8,#8756f2,#8952ec,#8a4de7,#8c48e1,#8d44db,#8f3fd6,#903bcf,#9237c7,#9433c0,#952fb9,#972bb1,#9927aa,#9a23a3,#9c1f9b,#9e1b94,#a0178c,#a31786)"></i>
<i style="top:555px;left:136px;width:238px;background:linear-gradient(90deg,#1423f8,#1824f9,#222cfa,#2c33fb,#363afc,#3f40fd,#4946fe,#524bff,#5d51ff,#6956ff,#7359ff,#7f5bff,#825efe,#8459f8,#8555f3,#8750ed,#884ce8,#8a47e2,#8b42dc,#8d3ed7,#8e3ad1,#9036c9,#9132c2,#932ebb,#952ab4,#9626ad,#9822a6,#9a1e9e,#9b1a97,#9d1690,#a0168a)"></i>
<i style="top:557px;left:137px;width:233px;background:linear-gradient(90deg,#1422f9,#1924f9,#232cfa,#2d33fb,#373afc,#4040fd,#4a45fe,#544bff,#5f51ff,#6b54ff,#7558ff,#7f5bff,#8159fc,#8255f6,#8450f1,#854ceb,#8747e5,#8843df,#8a3eda,#8c39d4,#8d35cd,#8f31c6,#902dbf,#9229b7,#9425b0,#9521a9,#971da1,#99199a,#9b1593,#9e158d)"></i>
<i style="top:559px;left:137px;width:228px;background:linear-gradient(90deg,#1422f9,#1823f9,#222afa,#2c32fb,#3638fc,#403ffd,#4a44ff,#544aff,#604fff,#6c53ff,#7656ff,#7e5aff,#7f56fa,#8151f4,#824def,#8448e9,#8643e3,#873fdd,#893ad8,#8a35d2,#8c31ca,#8e2dc3,#8f29bc,#9125b4,#9321ad,#941da6,#96199e,#981597,#9b1491)"></i>
<i style="top:561px;left:138px;width:223px;background:linear-gradient(90deg,#1521f9,#1822fa,#222afb,#2c31fc,#3637fd,#3f3dfe,#4942ff,#5448ff,#5f4dff,#6a51ff,#7454ff,#7c58ff,#7e54fa,#7f4ff5,#814bef,#8246ea,#8441e4,#853dde,#8738d9,#8834d3,#8a30cc,#8b2cc5,#8d28be,#8f24b7,#9020af,#921ca8,#9418a1,#951499,#991494)"></i>
<i style="top:563px;left:139px;width:218px;background:linear-gradient(90deg,#1520f9,#1922fa,#2329fb,#2d30fc,#3737fd,#403dfe,#4a42ff,#5648ff,#624cff,#6c50ff,#7852ff,#7b54fe,#7c4ff8,#7e4bf2,#7f46ed,#8142e7,#823de1,#8438db,#8634d6,#872fd0,#892bc8,#8a27c1,#8c23ba,#8e1fb3,#8f1bab,#9117a4,#93139c,#961397)"></i>
<i style="top:565px;left:140px;width:212px;background:linear-gradient(90deg,#1520f9,#1922fa,#2429fb,#2e30fc,#3736fd,#413cff,#4c42ff,#5747ff,#634bff,#6d4eff,#7852ff,#7a50fc,#7b4bf6,#7d47f0,#7e42ea,#803de5,#8139df,#8334d9,#842fd3,#862bcd,#8827c5,#8923be,#8b1fb7,#8d1baf,#8e17a8,#9013a0,#94129a)"></i>
<i style="top:567px;left:141px;width:207px;background:linear-gradient(90deg,#151ffa,#1a21fa,#2328fb,#2d2ffc,#3735fe,#403aff,#4b40ff,#5745ff,#6249ff,#6c4cff,#764fff,#784efc,#7949f6,#7b45f1,#7c40eb,#7e3ce5,#7f37e0,#8132da,#822ed4,#8429ce,#8625c7,#8721c0,#891db9,#8a19b2,#8c16aa,#8e12a3,#91119d)"></i>
<i style="top:569px;left:141px;width:202px;background:linear-gradient(90deg,#151ffa,#1920fb,#2327fc,#2d2dfd,#3633fe,#4039ff,#4b3fff,#5744ff,#6247ff,#6d4aff,#754eff,#764afa,#7846f5,#7941ef,#7b3ce9,#7c38e4,#7e33de,#7f2ed8,#812ad2,#8325cc,#8421c4,#861dbd,#8819b6,#8915ae,#8b11a7,#8e11a1)"></i>
<i style="top:571px;left:142px;width:197px;background:linear-gradient(90deg,#151efa,#191ffb,#2326fc,#2c2cfd,#3632fe,#4037ff,#4b3dff,#5641ff,#6145ff,#6b48ff,#734cff,#7448fa,#7644f5,#773fef,#793bea,#7a36e4,#7c31df,#7d2dd9,#7f28d3,#8124ce,#8220c6,#841cbf,#8518b8,#8714b1,#8910aa,#8c10a4)"></i>
<i style="top:573px;left:143px;width:191px;background:linear-gradient(90deg,#151dfa,#191ffb,#2325fc,#2d2bfd,#3631ff,#4137ff,#4c3cff,#5940ff,#6244ff,#6e46ff,#7249fe,#7344f9,#7540f3,#763bed,#7836e8,#7932e2,#7b2ddc,#7c29d7,#7e24d1,#7f20ca,#811cc3,#8318bc,#8414b5,#8610ae,#890fa7)"></i>
<i style="top:575px;left:144px;width:186px;background:linear-gradient(90deg,#161cfb,#1a1efc,#2425fd,#2e2bfe,#3730ff,#4336ff,#4e3bff,#5a3fff,#6442ff,#6e46ff,#7045fc,#7240f6,#733bf0,#7537eb,#7632e5,#782ddf,#7a29da,#7b24d4,#7d1fce,#7e1bc7,#8017bf,#8213b8,#830fb1,#870fab)"></i>
<i style="top:577px;left:145px;width:181px;background:linear-gradient(90deg,#161cfb,#1a1dfc,#2424fd,#2d29fe,#372fff,#4235ff,#4e39ff,#593dff,#6340ff,#6c43ff,#6e42fc,#703ef7,#7139f1,#7335eb,#7430e6,#762ce0,#7727db,#7922d5,#7b1ecf,#7c1ac9,#7e16c2,#7f12bb,#810eb3,#850ead)"></i>
<i style="top:579px;left:146px;width:175px;background:linear-gradient(90deg,#161bfb,#1b1dfc,#2423fd,#2e28fe,#382eff,#4434ff,#5038ff,#5a3cff,#653eff,#6c42ff,#6d3efa,#6f3af4,#7035ef,#7231e9,#732ce4,#7527de,#7623d8,#781ed2,#7919cd,#7b15c6,#7d11be,#7e0db7,#820db1)"></i>
<i style="top:581px;left:147px;width:170px;background:linear-gradient(90deg,#161afb,#1b1cfc,#2522fe,#2f28ff,#3a2eff,#4633ff,#5237ff,#5c3bff,#683dff,#6a3ffd,#6c3af8,#6d35f2,#6f31ec,#702ce7,#7227e1,#7423db,#751ed5,#7719cf,#7815c9,#7a11c2,#7c0cba,#800cb4)"></i>
<i style="top:583px;left:148px;width:164px;background:linear-gradient(90deg,#1619fc,#1c1bfd,#2621fe,#3027ff,#3b2dff,#4832ff,#5336ff,#5d39ff,#673dff,#693bfb,#6b36f6,#6c31f0,#6e2cea,#6f28e4,#7123de,#721ed8,#7419d3,#7615cd,#7710c6,#790cbe,#7d0cb8)"></i>
<i style="top:585px;left:148px;width:160px;background:linear-gradient(90deg,#1619fc,#1b1afd,#241ffe,#2e25ff,#3a2bff,#4630ff,#5133ff,#5b36ff,#653aff,#6739fc,#6834f6,#6a30f1,#6c2beb,#6d26e5,#6f22e0,#701dda,#7218d4,#7314ce,#750fc8,#770bc1,#7a0bbb)"></i>
<i style="top:587px;left:149px;width:154px;background:linear-gradient(90deg,#1618fc,#1b19fd,#251eff,#3025ff,#3b2aff,#482eff,#5232ff,#5d35ff,#6439ff,#6635fa,#6730f4,#692bef,#6a27e9,#6c22e3,#6d1ddd,#6f18d7,#7114d1,#720fcc,#740bc5,#780abe)"></i>
<i style="top:589px;left:150px;width:149px;background:linear-gradient(90deg,#1717fd,#1b18fe,#241dff,#2f23ff,#3b28ff,#472cff,#5130ff,#5c32ff,#6337ff,#6433fa,#652ef5,#672aef,#6825ea,#6a20e4,#6b1cde,#6d17d9,#6e13d3,#700ecd,#710ac7,#7509c1)"></i>
<i style="top:591px;left:151px;width:144px;background:linear-gradient(90deg,#1716fd,#1c17fe,#251cff,#3123ff,#3d27ff,#482bff,#532fff,#5e31ff,#6133fe,#622ef8,#642af2,#6625ed,#6720e7,#691ce1,#6a17db,#6c12d6,#6d0ed0,#6f09ca,#7309c4)"></i>
<i style="top:593px;left:152px;width:138px;background:linear-gradient(90deg,#1715fd,#1c16fe,#271cff,#3222ff,#3f26ff,#4a2aff,#542dff,#5e30ff,#602ffc,#612af6,#6325f0,#6421ea,#661ce5,#6717df,#6913d9,#6b0ed3,#6c09cd,#7008c8)"></i>
<i style="top:595px;left:154px;width:132px;background:linear-gradient(90deg,#1714fe,#1e16ff,#291cff,#3521ff,#4225ff,#4c29ff,#592bff,#5d2fff,#5f2af9,#6025f3,#6221ed,#631ce7,#6517e1,#6612db,#680dd5,#6a09cf,#6e08ca)"></i>
<i style="top:597px;left:155px;width:126px;background:linear-gradient(90deg,#1812fe,#1e15ff,#291bff,#351fff,#4123ff,#4a27ff,#5629ff,#5b2dff,#5c28fa,#5e24f4,#5f1fee,#611be9,#6216e3,#6411dd,#660dd8,#6708d2,#6b07cd)"></i>
<i style="top:599px;left:156px;width:121px;background:linear-gradient(90deg,#1811ff,#1f14ff,#2b1aff,#371eff,#4222ff,#4d25ff,#5728ff,#5a29fd,#5b24f7,#5d1ff1,#5e1bec,#6016e6,#6111e0,#630cda,#6508d4,#6907cf)"></i>
<i style="top:601px;left:157px;width:116px;background:linear-gradient(90deg,#1810ff,#2013ff,#2c19ff,#391dff,#4421ff,#4f24ff,#5728ff,#5824fa,#5a20f5,#5c1bef,#5d16e9,#5f11e3,#600cdd,#6207d7,#6607d1)"></i>
<i style="top:603px;left:158px;width:110px;background:linear-gradient(90deg,#1910ff,#2112ff,#2c17ff,#381bff,#421fff,#4d21ff,#5525ff,#5623fb,#581ef6,#5919f0,#5b15ea,#5c10e5,#5e0cdf,#6007d9,#6406d4)"></i>
<i style="top:605px;left:159px;width:105px;background:linear-gradient(90deg,#1a0fff,#2211ff,#2e16ff,#3a1aff,#441dff,#501fff,#5423fe,#551ef9,#5719f3,#5815ed,#5a10e7,#5b0be2,#5d06dc,#6106d7)"></i>
<i style="top:607px;left:161px;width:98px;background:linear-gradient(90deg,#1b0eff,#2411ff,#3115ff,#3c19ff,#471cff,#501fff,#521efc,#541af6,#5615f0,#5710eb,#590be5,#5a06df,#5e05d9)"></i>
<i style="top:609px;left:162px;width:93px;background:linear-gradient(90deg,#1d0eff,#250fff,#3113ff,#3a17ff,#4519ff,#4e1dff,#501cfc,#5218f7,#5313f1,#550fec,#560ae6,#5806e1,#5c05dc)"></i>
<i style="top:611px;left:163px;width:87px;background:linear-gradient(90deg,#1e0dff,#260eff,#3212ff,#3c15ff,#4818ff,#4e1cff,#4f18fa,#5114f5,#520fef,#540ae9,#5506e4,#5905de)"></i>
<i style="top:613px;left:165px;width:81px;background:linear-gradient(90deg,#200cff,#290dff,#3411ff,#3f14ff,#4a17ff,#4c18fd,#4e13f7,#500ff2,#510aec,#5305e6,#5704e1)"></i>
<i style="top:615px;left:167px;width:75px;background:linear-gradient(90deg,#220bff,#2c0cff,#3710ff,#4213ff,#4a17ff,#4b13fa,#4d0ff4,#4f0aee,#5005e8,#5504e3)"></i>
<i style="top:617px;left:168px;width:69px;background:linear-gradient(90deg,#240aff,#2c0aff,#350eff,#4110ff,#4814ff,#4912fb,#4b0df6,#4c09f0,#4e04eb,#5204e6)"></i>
<i style="top:619px;left:170px;width:63px;background:linear-gradient(90deg,#2609ff,#2e09ff,#380dff,#440fff,#4712fe,#480df9,#4a08f3,#4b04ed,#5003e8)"></i>
<i style="top:621px;left:172px;width:56px;background:linear-gradient(90deg,#2908ff,#3008ff,#3b0bff,#440fff,#450dfc,#4709f6,#4804f0,#4d03eb)"></i>
<i style="top:623px;left:174px;width:50px;background:linear-gradient(90deg,#2a07ff,#3207ff,#3f09ff,#430dff,#4408f9,#4604f3,#4a03ed)"></i>
<i style="top:625px;left:176px;width:43px;background:linear-gradient(90deg,#2c06ff,#3506ff,#3f09ff,#4109fc,#4304f6,#4702f0)"></i>
<i style="top:627px;left:179px;width:36px;background:linear-gradient(90deg,#2f05ff,#3a04ff,#3f09ff,#4103f8,#4502f2)"></i>
<i style="top:629px;left:181px;width:30px;background:linear-gradient(90deg,#3103ff,#3a02ff,#3d06ff,#3e02f9,#4302f4)"></i>
<i style="top:631px;left:183px;width:23px;background:linear-gradient(90deg,#3402ff,#3a02ff,#3c02fd,#4001f7)"></i>
<i style="top:633px;left:186px;width:16px;background:linear-gradient(90deg,#3800ff,#3901ff,#3e01f9)"></i>
<i style="top:635px;left:188px;width:9px;background:linear-gradient(90deg,#3800ff,#3b00fc)"></i>
</div>
<svg id="ov" width="733" height="686" viewBox="0 0 733 686">
<g stroke="#000" stroke-width="1" shape-rendering="crispEdges">
<line x1="66" x2="71" y1="638.5" y2="638.5"/>
<line y1="640" y2="645" x1="73.5" x2="73.5"/>
<line x1="66" x2="71" y1="571.5" y2="571.5"/>
<line y1="640" y2="645" x1="142.5" x2="142.5"/>
<line x1="66" x2="71" y1="504.5" y2="504.5"/>
<line y1="640" y2="645" x1="211.5" x2="211.5"/>
<line x1="66" x2="71" y1="437.5" y2="437.5"/>
<line y1="640" y2="645" x1="280.5" x2="280.5"/>
<line x1="66" x2="71" y1="370.5" y2="370.5"/>
<line y1="640" y2="645" x1="349.5" x2="349.5"/>
<line x1="66" x2="71" y1="302.5" y2="302.5"/>
<line y1="640" y2="645" x1="417.5" x2="417.5"/>
<line x1="66" x2="71" y1="235.5" y2="235.5"/>
<line y1="640" y2="645" x1="486.5" x2="486.5"/>
<line x1="66" x2="71" y1="168.5" y2="168.5"/>
<line y1="640" y2="645" x1="555.5" x2="555.5"/>
<line x1="66" x2="71" y1="101.5" y2="101.5"/>
<line y1="640" y2="645" x1="624.5" x2="624.5"/>
<line x1="66" x2="71" y1="34.5" y2="34.5"/>
<line y1="640" y2="645" x1="693.5" x2="693.5"/>
</g>
<g class="tk">
<text x="63.3" y="642" text-anchor="end">0.0000</text>
<text x="72" y="656" text-anchor="middle">0.0000</text>
<text x="63.3" y="575" text-anchor="end">0.1000</text>
<text x="140.9" y="656" text-anchor="middle">0.1000</text>
<text x="63.3" y="508" text-anchor="end">0.2000</text>
<text x="209.8" y="656" text-anchor="middle">0.2000</text>
<text x="63.3" y="441" text-anchor="end">0.3000</text>
<text x="278.7" y="656" text-anchor="middle">0.3000</text>
<text x="63.3" y="374" text-anchor="end">0.4000</text>
<text x="347.6" y="656" text-anchor="middle">0.4000</text>
<text x="63.3" y="306" text-anchor="end">0.5000</text>
<text x="416.4" y="656" text-anchor="middle">0.5000</text>
<text x="63.3" y="239" text-anchor="end">0.6000</text>
<text x="485.3" y="656" text-anchor="middle">0.6000</text>
<text x="63.3" y="172" text-anchor="end">0.7000</text>
<text x="554.2" y="656" text-anchor="middle">0.7000</text>
<text x="63.3" y="105" text-anchor="end">0.8000</text>
<text x="623.1" y="656" text-anchor="middle">0.8000</text>
<text x="63.3" y="38" text-anchor="end">0.9000</text>
<text x="692" y="656" text-anchor="middle">0.9000</text>
<text x="383.6" y="675" text-anchor="middle" style="font-size:12.5px">x</text>
<text transform="translate(23.7,338.6) rotate(-90)" text-anchor="middle" style="font-size:11.5px">y</text>
</g>
<clipPath id="cp"><rect x="73" y="34" width="621" height="604.5"/></clipPath>
<g clip-path="url(#cp)">
<g class="wl">
<path d="M192 635.5h3M193.5 634v3" stroke="#707070" stroke-width="1" shape-rendering="crispEdges"/>
<text x="153.9" y="640" textLength="31.5" lengthAdjust="spacingAndGlyphs">380nm</text>
<path d="M180 626.5h3M181.5 625v3" stroke="#707070" stroke-width="1" shape-rendering="crispEdges"/>
<text x="141.9" y="631" textLength="31.5" lengthAdjust="spacingAndGlyphs">450nm</text>
<path d="M171 618.5h3M172.5 617v3" stroke="#707070" stroke-width="1" shape-rendering="crispEdges"/>
<text x="132.9" y="623" textLength="31.5" lengthAdjust="spacingAndGlyphs">460nm</text>
<path d="M157 599.5h3M158.5 598v3" stroke="#707070" stroke-width="1" shape-rendering="crispEdges"/>
<text x="118.9" y="604" textLength="31.5" lengthAdjust="spacingAndGlyphs">470nm</text>
<path d="M135 549.5h3M136.5 548v3" stroke="#707070" stroke-width="1" shape-rendering="crispEdges"/>
<text x="96.9" y="554" textLength="31.5" lengthAdjust="spacingAndGlyphs">480nm</text>
<path d="M103 440.5h3M104.5 439v3" stroke="#707070" stroke-width="1" shape-rendering="crispEdges"/>
<text x="64.9" y="445" textLength="31.5" lengthAdjust="spacingAndGlyphs">490nm</text>
<path d="M78 277.5h3M79.5 276v3" stroke="#707070" stroke-width="1" shape-rendering="crispEdges"/>
<text x="84.8" y="282" textLength="31.5" lengthAdjust="spacingAndGlyphs">500nm</text>
<path d="M82 135.5h3M83.5 134v3" stroke="#707070" stroke-width="1" shape-rendering="crispEdges"/>
<text x="88.8" y="140" textLength="31.5" lengthAdjust="spacingAndGlyphs">510nm</text>
<path d="M123 78.5h3M124.5 77v3" stroke="#707070" stroke-width="1" shape-rendering="crispEdges"/>
<text x="129.8" y="83" textLength="31.5" lengthAdjust="spacingAndGlyphs">520nm</text>
<path d="M179 97.5h3M180.5 96v3" stroke="#707070" stroke-width="1" shape-rendering="crispEdges"/>
<text x="185.8" y="102" textLength="31.5" lengthAdjust="spacingAndGlyphs">530nm</text>
<path d="M230 132.5h3M231.5 131v3" stroke="#707070" stroke-width="1" shape-rendering="crispEdges"/>
<text x="236.8" y="137" textLength="31.5" lengthAdjust="spacingAndGlyphs">540nm</text>
<path d="M280 173.5h3M281.5 172v3" stroke="#707070" stroke-width="1" shape-rendering="crispEdges"/>
<text x="286.8" y="178" textLength="31.5" lengthAdjust="spacingAndGlyphs">550nm</text>
<path d="M329 219.5h3M330.5 218v3" stroke="#707070" stroke-width="1" shape-rendering="crispEdges"/>
<text x="335.8" y="224" textLength="31.5" lengthAdjust="spacingAndGlyphs">560nm</text>
<path d="M378 266.5h3M379.5 265v3" stroke="#707070" stroke-width="1" shape-rendering="crispEdges"/>
<text x="384.8" y="271" textLength="31.5" lengthAdjust="spacingAndGlyphs">570nm</text>
<path d="M425 311.5h3M426.5 310v3" stroke="#707070" stroke-width="1" shape-rendering="crispEdges"/>
<text x="431.8" y="316" textLength="31.5" lengthAdjust="spacingAndGlyphs">580nm</text>
<path d="M468 353.5h3M469.5 352v3" stroke="#707070" stroke-width="1" shape-rendering="crispEdges"/>
<text x="474.8" y="358" textLength="31.5" lengthAdjust="spacingAndGlyphs">590nm</text>
<path d="M504 388.5h3M505.5 387v3" stroke="#707070" stroke-width="1" shape-rendering="crispEdges"/>
<text x="510.8" y="393" textLength="31.5" lengthAdjust="spacingAndGlyphs">600nm</text>
<path d="M531 414.5h3M532.5 413v3" stroke="#707070" stroke-width="1" shape-rendering="crispEdges"/>
<text x="537.8" y="419" textLength="31.5" lengthAdjust="spacingAndGlyphs">610nm</text>
<path d="M548 431.5h3M549.5 430v3" stroke="#707070" stroke-width="1" shape-rendering="crispEdges"/>
<text x="554.8" y="436" textLength="31.5" lengthAdjust="spacingAndGlyphs">620nm</text>
<path d="M567 449.5h3M568.5 448v3" stroke="#707070" stroke-width="1" shape-rendering="crispEdges"/>
<text x="573.8" y="454" textLength="31.5" lengthAdjust="spacingAndGlyphs">640nm</text>
<path d="M578 460.5h3M579.5 459v3" stroke="#707070" stroke-width="1" shape-rendering="crispEdges"/>
<text x="584.8" y="465" textLength="31.5" lengthAdjust="spacingAndGlyphs">780nm</text>
</g>
<path d="M302 414.5h3M303.5 413v3" stroke="#707070" stroke-width="1" shape-rendering="crispEdges"/>
<text class="wl" x="308" y="419" textLength="74.5" lengthAdjust="spacingAndGlyphs">CIE White Point</text>
<g stroke="#9a9a08" stroke-width="1" shape-rendering="crispEdges">
<line x1="73" x2="694" y1="604.5" y2="604.5"/>
<line x1="73" x2="694" y1="571.5" y2="571.5"/>
<line x1="73" x2="694" y1="537.5" y2="537.5"/>
<line x1="73" x2="694" y1="504.5" y2="504.5"/>
<line x1="73" x2="694" y1="470.5" y2="470.5"/>
<line x1="73" x2="694" y1="437.5" y2="437.5"/>
<line x1="73" x2="694" y1="403.5" y2="403.5"/>
<line x1="73" x2="694" y1="370.5" y2="370.5"/>
<line x1="73" x2="694" y1="336.5" y2="336.5"/>
<line x1="73" x2="694" y1="302.5" y2="302.5"/>
<line x1="73" x2="694" y1="269.5" y2="269.5"/>
<line x1="73" x2="694" y1="235.5" y2="235.5"/>
<line x1="73" x2="694" y1="202.5" y2="202.5"/>
<line x1="73" x2="694" y1="168.5" y2="168.5"/>
<line x1="73" x2="694" y1="135.5" y2="135.5"/>
<line x1="73" x2="694" y1="101.5" y2="101.5"/>
<line x1="73" x2="694" y1="68.5" y2="68.5"/>
<line y1="34" y2="638" x1="142.5" x2="142.5"/>
<line y1="34" y2="638" x1="211.5" x2="211.5"/>
<line y1="34" y2="638" x1="280.5" x2="280.5"/>
<line y1="34" y2="638" x1="349.5" x2="349.5"/>
<line y1="34" y2="638" x1="417.5" x2="417.5"/>
<line y1="34" y2="638" x1="486.5" x2="486.5"/>
<line y1="34" y2="638" x1="555.5" x2="555.5"/>
<line y1="34" y2="638" x1="624.5" x2="624.5"/>
</g>
<path d="M243.2 474.1 L246.3 469.7 L249.5 465.4 L252.7 461.2 L256 457.1 L259.3 453 L262.7 449 L266.2 445 L269.7 441.1 L273.2 437.2 L276.8 433.4 L280.5 429.7 L284.2 426 L288 422.4 L291.9 418.8 L295.8 415.3 L299.7 411.8 L303.8 408.4 L307.9 405.1 L312 401.8 L316.2 398.5 L320.5 395.4 L324.8 392.3 L329.2 389.3 L333.7 386.5 L338.2 383.7 L342.7 381 L347.4 378.5 L352.1 376.1 L356.9 373.8 L361.7 371.7 L366.6 369.7 L371.6 367.9 L376.6 366.2 L381.7 364.7 L386.8 363.4 L392 362.3 L397.1 361.4 L402.3 360.6 L407.6 360.1 L412.8 359.7 L418 359.6 L423.2 359.6 L428.4 359.9 L433.6 360.4 L438.8 361.1 L443.9 362 L449 363.2 L454 364.6 L459 366.2 L463.9 368 L468.7 370.1 L473.5 372.3 L478.3 374.7 L482.9 377.2 L487.5 379.9 L492.1 382.8 L496.6 385.7 L501 388.8 L505.3 392 L509.6 395.3 L513.8 398.6 L517.9 402 L521.9 405.5 L525.9 409 L529.8 412.5 L533.5 416.1 L537.2 419.7 L540.9 423.2 L544.4 426.8" fill="none" stroke="#858585" stroke-width="1"/>
<path d="M280.2 408.3 L376.6 348.9 L417.9 343.6 L417.9 382.5 L376.6 382.5 L280.2 453.5Z M376.6 348.9L376.6 382.5" fill="none" stroke="#000" stroke-width="1"/>
<rect x="279" y="407" width="3" height="3" fill="#000" shape-rendering="crispEdges"/>
<rect x="375" y="347" width="3" height="3" fill="#000" shape-rendering="crispEdges"/>
<rect x="416" y="342" width="3" height="3" fill="#000" shape-rendering="crispEdges"/>
<rect x="416" y="381" width="3" height="3" fill="#000" shape-rendering="crispEdges"/>
<rect x="375" y="381" width="3" height="3" fill="#000" shape-rendering="crispEdges"/>
<rect x="279" y="452" width="3" height="3" fill="#000" shape-rendering="crispEdges"/>
<g stroke="#f00" stroke-width="1" shape-rendering="crispEdges"><line x1="388.5" x2="388.5" y1="34" y2="638"/><line x1="73" x2="694" y1="365.5" y2="365.5"/></g>
<circle cx="388.5" cy="365.5" r="2.6" fill="#f00"/>
</g>
</svg>
</body></html>
